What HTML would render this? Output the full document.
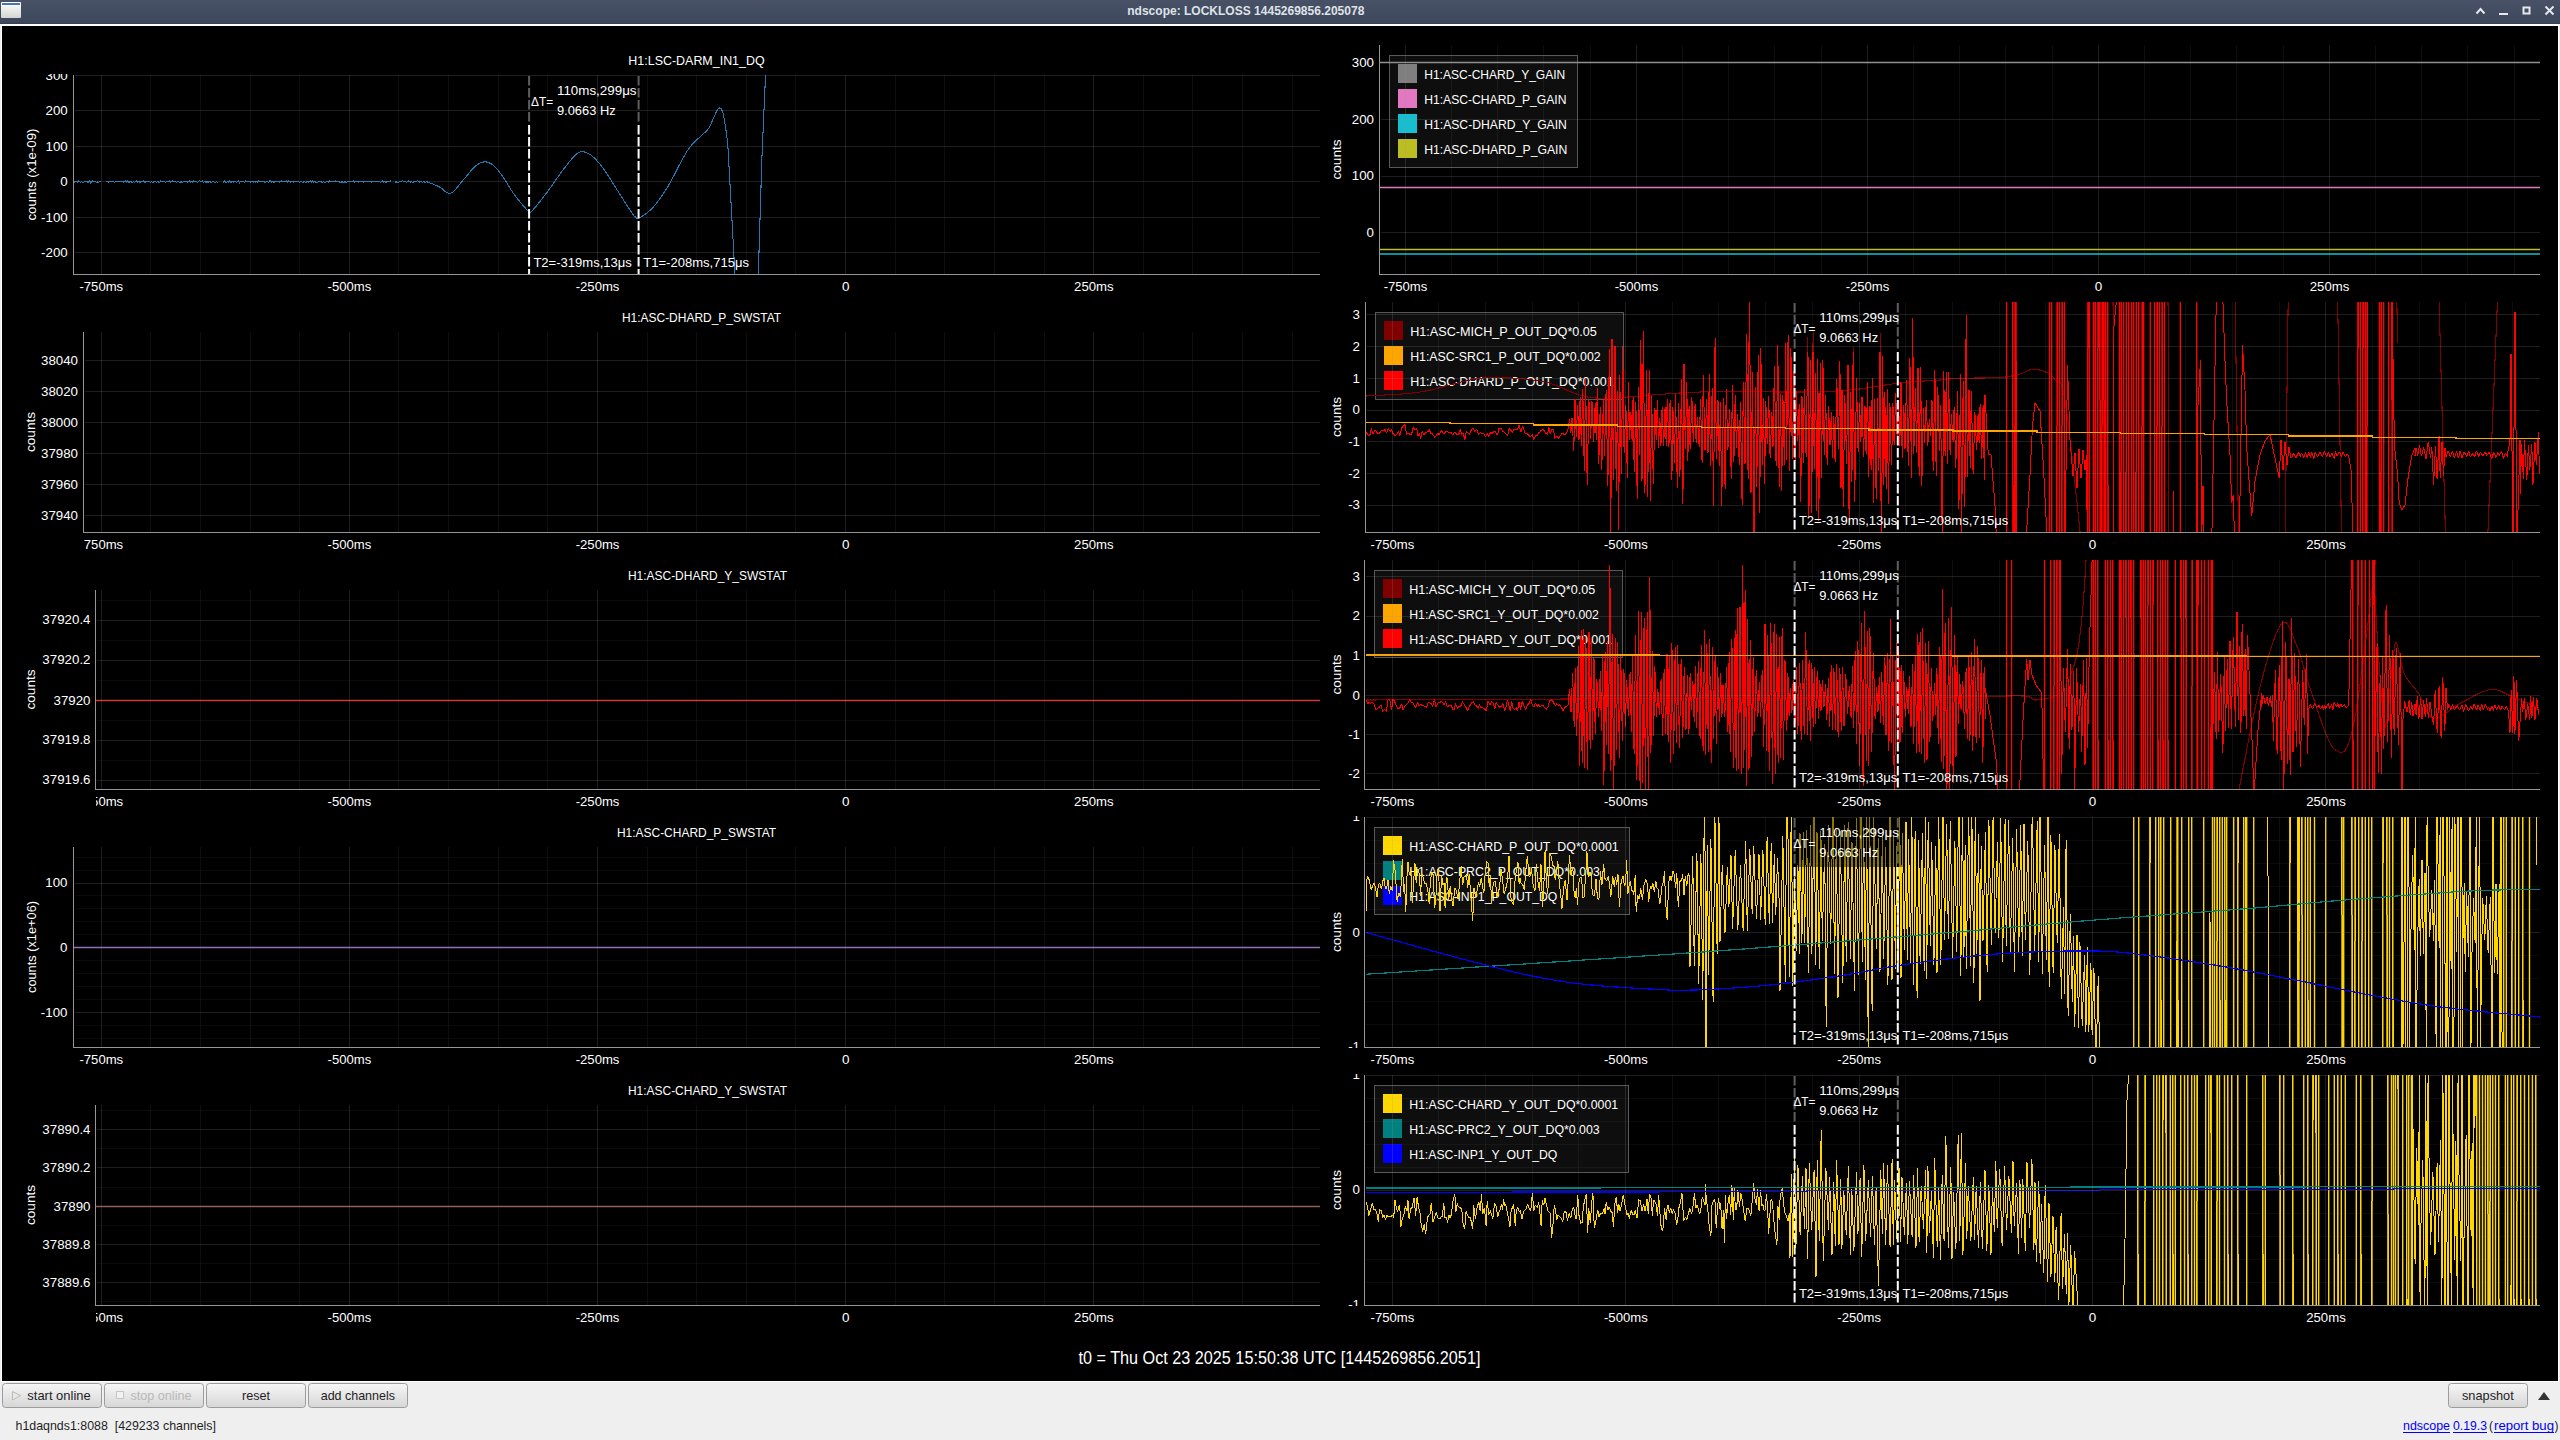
<!DOCTYPE html>
<html><head><meta charset="utf-8"><title>ndscope</title>
<style>html,body{margin:0;padding:0;background:#000;overflow:hidden}svg{display:block}text{font-family:"Liberation Sans",sans-serif}</style>
</head><body>
<svg width="2560" height="1440" viewBox="0 0 2560 1440" font-family="Liberation Sans, sans-serif">
<defs><linearGradient id="tbg" x1="0" y1="0" x2="0" y2="1"><stop offset="0" stop-color="#485165"/><stop offset="1" stop-color="#3d485c"/></linearGradient><linearGradient id="icg" x1="0" y1="0" x2="0" y2="1"><stop offset="0" stop-color="#ffffff"/><stop offset="1" stop-color="#d4d6d0"/></linearGradient><linearGradient id="btg" x1="0" y1="0" x2="0" y2="1"><stop offset="0" stop-color="#f7f7f7"/><stop offset="1" stop-color="#d6d6d6"/></linearGradient></defs>
<rect x="0" y="0" width="2560" height="24" fill="url(#tbg)"/>
<rect x="0" y="23" width="2560" height="1" fill="#384154"/>
<rect x="0" y="24" width="2560" height="2" fill="#ffffff"/>
<rect x="1" y="2" width="20" height="16" rx="1" fill="url(#icg)"/>
<rect x="2" y="3" width="18" height="2" fill="#4a74ad"/>
<text x="1245.80" y="15.20" font-size="13" fill="#dfe2e8" text-anchor="middle" textLength="237.10" lengthAdjust="spacingAndGlyphs" font-weight="bold">ndscope: LOCKLOSS 1445269856.205078</text>
<path d="M2476.5 13.5 L2480.5 9 L2484.5 13.5" fill="none" stroke="#e6e8ee" stroke-width="2"/>
<rect x="2499" y="13" width="9" height="2" fill="#e6e8ee"/>
<rect x="2523.5" y="7.5" width="6" height="6" fill="none" stroke="#e6e8ee" stroke-width="2"/>
<path d="M2545.5 6.5 L2553.5 14.5 M2553.5 6.5 L2545.5 14.5" fill="none" stroke="#e6e8ee" stroke-width="2"/>
<rect x="0" y="26" width="2560" height="1414" fill="#efefef"/>
<rect x="1" y="26" width="2558" height="1356" fill="#ffffff"/>
<rect x="2" y="26" width="2556" height="1355" fill="#000000"/>
<rect x="2.5" y="1383.5" width="99" height="24" rx="3" fill="url(#btg)" stroke="#9c9c9c" stroke-width="1"/>
<text x="27.30" y="1400.00" font-size="13.2" fill="#1e1e1e" textLength="63.40" lengthAdjust="spacingAndGlyphs">start online</text>
<path d="M12.5 1391.5 L20.5 1395.7 L12.5 1400 Z" fill="#e8eae6" stroke="#b9bbb6" stroke-width="1"/>
<rect x="104.5" y="1383.5" width="99" height="24" rx="3" fill="url(#btg)" stroke="#9c9c9c" stroke-width="1"/>
<text x="130.50" y="1400.00" font-size="13.2" fill="#b8b8b8" textLength="61.00" lengthAdjust="spacingAndGlyphs">stop online</text>
<rect x="116.5" y="1391.5" width="7" height="7" fill="#f2f2f2" stroke="#c6c6c6" stroke-width="1"/>
<rect x="206.5" y="1383.5" width="99" height="24" rx="3" fill="url(#btg)" stroke="#9c9c9c" stroke-width="1"/>
<text x="242.00" y="1400.00" font-size="13.2" fill="#1e1e1e" textLength="28.00" lengthAdjust="spacingAndGlyphs">reset</text>
<rect x="308.5" y="1383.5" width="99" height="24" rx="3" fill="url(#btg)" stroke="#9c9c9c" stroke-width="1"/>
<text x="320.70" y="1400.00" font-size="13.2" fill="#1e1e1e" textLength="74.30" lengthAdjust="spacingAndGlyphs">add channels</text>
<rect x="2448.5" y="1383.5" width="79" height="24" rx="3" fill="url(#btg)" stroke="#9c9c9c" stroke-width="1"/>
<text x="2462.00" y="1400.00" font-size="13.2" fill="#1e1e1e" textLength="51.75" lengthAdjust="spacingAndGlyphs">snapshot</text>
<path d="M2538 1400 L2544 1392 L2550 1400 Z" fill="#333333"/>
<text x="15.50" y="1429.70" font-size="13.2" fill="#1e1e1e" textLength="200.50" lengthAdjust="spacingAndGlyphs" xml:space="preserve">h1daqnds1:8088  [429233 channels]</text>
<text x="2403.00" y="1429.70" font-size="13.2" fill="#0000ff" textLength="47.00" lengthAdjust="spacingAndGlyphs">ndscope</text>
<rect x="2403" y="1432" width="47" height="1" fill="#0000ff"/>
<text x="2453.00" y="1429.70" font-size="13.2" fill="#0000ff" textLength="34.00" lengthAdjust="spacingAndGlyphs">0.19.3</text>
<rect x="2453" y="1432" width="34" height="1" fill="#0000ff"/>
<text x="2489.00" y="1429.70" font-size="13.2" fill="#1e1e1e" textLength="4.00" lengthAdjust="spacingAndGlyphs">(</text>
<text x="2494.00" y="1429.70" font-size="13.2" fill="#0000ff" textLength="60.00" lengthAdjust="spacingAndGlyphs">report bug</text>
<rect x="2494" y="1432" width="60" height="1" fill="#0000ff"/>
<text x="2554.50" y="1429.70" font-size="13.2" fill="#1e1e1e" textLength="4.00" lengthAdjust="spacingAndGlyphs">)</text>
<text x="1078.50" y="1363.50" font-size="17.6" fill="#ffffff" textLength="401.90" lengthAdjust="spacingAndGlyphs">t0 = Thu Oct 23 2025 15:50:38 UTC [1445269856.2051]</text>
<clipPath id="cpL1"><rect x="74" y="75" width="1246" height="199"/></clipPath>
<g clip-path="url(#cpL1)">
<path d="M74.0 182.3 L75.9 181.2 L77.4 182.0 L78.9 180.6 L80.1 182.2 L81.7 181.9 L83.6 182.4 L84.7 181.5 L85.6 181.8 L86.4 181.1 L88.2 182.4 L89.6 181.0 L90.8 183.0 L92.5 180.9 L93.6 181.7 L95.3 181.5 L96.6 182.8 L97.5 181.7 L98.8 182.5 L99.7 181.3 L100.9 181.8 M106.0 182.1 L107.1 181.1 L108.8 182.1 L110.2 181.6 L111.2 182.0 L112.5 181.2 L114.4 182.3 L116.2 181.3 L118.0 182.0 L120.0 181.2 L121.7 182.0 L122.6 181.5 L123.7 182.2 L125.1 180.8 L126.6 182.3 L127.6 181.1 L128.7 182.2 L130.6 181.7 L132.4 182.3 L133.4 181.9 L134.5 182.2 L136.2 180.9 L137.3 182.1 L138.4 181.4 L139.9 182.4 L141.0 181.3 L142.3 181.7 L143.6 180.8 L144.8 182.9 L146.4 181.1 L147.4 181.5 L149.2 181.4 L150.1 182.3 L151.8 181.7 L152.7 182.5 L154.5 181.2 L156.3 182.4 L157.9 181.2 L159.2 182.7 L160.7 181.0 L162.2 182.0 L163.7 181.1 L165.4 182.3 L166.9 181.5 L167.8 182.0 L169.3 181.0 L170.9 182.3 L172.8 180.9 L174.0 182.1 L175.0 181.0 L176.3 182.4 L177.9 181.3 L179.7 182.8 L180.9 181.0 L181.9 182.5 L183.7 181.4 L184.9 182.0 L186.0 181.3 L187.6 182.1 L189.3 180.8 L190.3 182.2 L191.1 181.1 L192.3 182.1 L193.3 180.8 L195.1 181.8 L196.0 181.0 L197.5 182.6 L199.4 180.8 L200.8 181.6 L202.2 180.7 L203.3 182.3 L204.8 181.3 L206.0 182.8 L207.0 181.0 L208.0 182.3 L209.8 181.3 L211.6 182.8 L213.0 180.8 L214.7 182.6 L216.3 181.7 L218.2 182.6 M223.0 182.4 L224.8 180.9 L226.1 182.5 L227.5 181.7 L228.4 182.2 L229.6 180.7 L230.7 182.4 L232.4 181.4 L233.8 182.2 L234.9 181.0 L236.6 182.4 L238.4 181.0 L239.6 182.8 L240.7 181.3 L242.1 182.1 L243.6 181.2 L244.4 182.6 L245.7 181.0 L247.1 182.0 L248.6 181.6 L250.4 182.1 L251.4 181.5 L253.3 182.1 L254.3 181.4 L255.3 182.1 L256.4 181.5 L257.6 182.2 L258.5 180.7 L259.9 181.8 L261.4 181.1 L262.7 182.0 L263.7 181.2 L265.2 182.6 L267.0 181.5 L268.7 182.4 L269.9 180.6 L271.9 182.2 L273.0 180.8 L273.9 182.4 L275.6 181.4 L277.3 181.7 L278.9 181.2 L279.8 182.5 L281.2 180.8 L282.1 181.6 L283.6 181.2 L284.6 181.8 L286.4 181.1 L287.3 182.3 L288.7 180.8 L290.1 182.2 L291.6 181.7 L293.4 182.0 L295.0 181.0 L296.0 181.9 L297.9 181.1 L299.7 182.3 L301.2 181.5 L302.9 182.4 L304.6 181.2 L305.9 182.8 L307.5 181.2 L308.8 182.1 L310.1 180.8 L311.3 182.4 L312.4 181.0 L313.6 182.4 L315.0 181.6 L316.6 182.6 L318.5 181.6 L320.2 182.0 L321.1 181.3 L322.1 182.4 L323.5 181.5 L325.0 182.7 L326.7 181.5 L328.4 182.3 L329.4 180.9 L330.8 182.0 L332.7 181.2 L334.2 182.0 L335.8 180.9 L337.5 181.7 L338.6 181.2 L340.3 182.5 L341.9 181.9 L343.8 182.3 L345.2 181.6 L346.3 182.6 L347.9 181.6 L349.7 182.0 L351.2 181.0 L352.1 182.0 L353.5 181.0 L354.6 182.2 L356.3 181.5 L358.2 182.2 L359.2 181.1 L360.7 182.0 L362.3 181.2 L363.9 182.2 L365.0 181.1 L366.8 181.6 L368.0 181.3 L368.9 181.9 L369.8 181.1 L371.4 182.1 L372.5 181.5 L374.2 181.6 L376.0 181.3 L377.1 182.0 L378.8 181.4 L380.8 182.2 L382.4 180.8 L383.7 182.2 L384.6 181.5 L386.0 182.2 L387.7 181.2 L389.3 181.8 L390.9 180.8 M395.0 182.3 L396.3 181.6 L397.7 182.9 L399.6 181.4 L400.8 182.0 L402.7 180.7 L403.9 182.0 L405.2 181.0 L406.7 182.5 L408.4 180.9 L410.1 182.3 L411.0 181.2 L412.5 182.7 L414.2 181.5 L415.9 181.6 L417.6 180.5 L419.1 182.2 L420.7 181.1 L422.4 182.5 L423.7 181.7 L425.3 182.3 L426.9 181.3 L427.0 181.8 L427.9 182.2 L429.2 182.6 L430.6 183.2 L432.3 183.8 L434.0 184.5 L435.7 185.2 L437.4 185.9 L439.0 186.6 L440.7 187.6 L442.3 188.9 L443.9 190.4 L445.5 191.7 L447.2 192.7 L448.9 193.3 L450.6 193.2 L452.2 192.4 L453.8 191.2 L455.5 189.5 L457.1 187.5 L458.8 185.4 L460.5 183.3 L462.1 181.2 L463.7 179.4 L465.5 177.4 L467.2 175.3 L468.9 173.2 L470.6 171.2 L472.3 169.3 L473.9 167.6 L475.4 166.2 L477.1 164.9 L478.7 163.8 L480.3 163.0 L481.8 162.4 L483.3 162.0 L484.9 161.9 L486.5 162.0 L488.0 162.4 L489.6 163.0 L491.2 163.8 L492.8 164.9 L494.4 166.2 L496.1 167.9 L497.7 169.8 L499.5 172.1 L501.2 174.5 L502.9 176.9 L504.6 179.4 L506.3 181.9 L507.9 184.6 L509.5 187.3 L511.2 190.0 L512.9 192.7 L514.8 195.4 L516.4 197.4 L518.1 199.6 L519.9 201.8 L521.8 204.0 L523.6 206.1 L525.2 207.9 L526.7 209.5 L527.9 210.7 L529.6 213.2 L531.5 211.4 L532.6 210.3 L533.8 208.9 L535.3 207.2 L536.9 205.3 L538.5 203.3 L540.2 201.1 L542.0 198.9 L543.7 196.7 L545.3 194.5 L546.9 192.5 L548.6 190.3 L550.2 188.0 L551.9 185.6 L553.6 183.2 L555.2 180.9 L556.8 178.5 L558.4 176.3 L559.9 174.1 L561.4 172.1 L563.3 169.6 L565.1 167.2 L566.8 165.0 L568.5 162.8 L570.1 160.9 L571.6 159.1 L573.1 157.5 L574.9 155.6 L576.4 154.1 L577.9 152.9 L579.4 152.1 L581.1 151.7 L582.5 151.7 L584.0 151.9 L585.6 152.4 L587.2 153.0 L588.8 153.8 L590.5 154.8 L592.1 156.0 L593.7 157.4 L595.3 158.9 L596.9 160.7 L598.6 162.6 L600.3 164.6 L602.0 166.9 L603.7 169.2 L605.3 171.4 L606.9 173.8 L608.5 176.3 L610.2 178.9 L611.9 181.6 L613.6 184.3 L615.2 187.0 L616.9 189.6 L618.6 192.2 L620.4 195.0 L622.1 197.8 L623.9 200.6 L625.6 203.3 L627.2 205.8 L628.7 208.1 L630.0 210.0 L632.5 213.7 L634.2 216.0 L635.8 217.5 L637.5 218.6 L640.2 217.5 L641.4 216.8 L642.8 215.8 L644.4 214.8 L646.1 213.5 L647.9 212.1 L649.7 210.6 L651.5 208.9 L653.3 207.0 L654.9 205.2 L656.5 203.2 L658.2 201.0 L659.9 198.7 L661.5 196.3 L663.2 193.9 L664.8 191.4 L666.4 189.0 L667.9 186.6 L669.7 183.5 L671.5 180.3 L673.1 177.1 L674.8 173.9 L676.4 170.8 L677.9 167.7 L679.5 164.8 L681.3 161.6 L682.9 158.5 L684.6 155.5 L686.2 152.6 L687.9 149.9 L689.8 147.3 L691.4 145.4 L693.0 143.5 L694.8 141.7 L696.6 140.0 L698.4 138.4 L700.1 136.9 L701.6 135.5 L702.9 134.2 L705.4 131.9 L707.1 130.4 L708.7 128.3 L710.5 124.9 L712.3 120.8 L714.0 117.0 L715.7 113.3 L717.3 109.7 L718.9 107.9 L721.1 108.4 L723.3 113.7 L725.8 128.7 L727.7 142.9 L735.0 275.0 L745.0 300.0 L758.3 290.0 L758.3 275.0 L761.9 157.5 L765.6 74.0 L767.0 40.0" fill="none" stroke="#1f77b4" stroke-width="1.05" stroke-linejoin="miter" stroke-miterlimit="2" shape-rendering="crispEdges"/>
</g>
<rect x="528.1" y="75" width="115.5" height="50" fill="rgba(0,0,0,0.45)"/>
<line x1="101.5" y1="75" x2="101.5" y2="274" stroke="rgba(150,150,150,0.2)" stroke-width="1"/>
<line x1="150.5" y1="75" x2="150.5" y2="274" stroke="rgba(150,150,150,0.095)" stroke-width="1"/>
<line x1="200.5" y1="75" x2="200.5" y2="274" stroke="rgba(150,150,150,0.095)" stroke-width="1"/>
<line x1="250.5" y1="75" x2="250.5" y2="274" stroke="rgba(150,150,150,0.095)" stroke-width="1"/>
<line x1="299.5" y1="75" x2="299.5" y2="274" stroke="rgba(150,150,150,0.095)" stroke-width="1"/>
<line x1="349.5" y1="75" x2="349.5" y2="274" stroke="rgba(150,150,150,0.2)" stroke-width="1"/>
<line x1="398.5" y1="75" x2="398.5" y2="274" stroke="rgba(150,150,150,0.095)" stroke-width="1"/>
<line x1="448.5" y1="75" x2="448.5" y2="274" stroke="rgba(150,150,150,0.095)" stroke-width="1"/>
<line x1="498.5" y1="75" x2="498.5" y2="274" stroke="rgba(150,150,150,0.095)" stroke-width="1"/>
<line x1="547.5" y1="75" x2="547.5" y2="274" stroke="rgba(150,150,150,0.095)" stroke-width="1"/>
<line x1="597.5" y1="75" x2="597.5" y2="274" stroke="rgba(150,150,150,0.2)" stroke-width="1"/>
<line x1="647.5" y1="75" x2="647.5" y2="274" stroke="rgba(150,150,150,0.095)" stroke-width="1"/>
<line x1="696.5" y1="75" x2="696.5" y2="274" stroke="rgba(150,150,150,0.095)" stroke-width="1"/>
<line x1="746.5" y1="75" x2="746.5" y2="274" stroke="rgba(150,150,150,0.095)" stroke-width="1"/>
<line x1="795.5" y1="75" x2="795.5" y2="274" stroke="rgba(150,150,150,0.095)" stroke-width="1"/>
<line x1="845.5" y1="75" x2="845.5" y2="274" stroke="rgba(150,150,150,0.2)" stroke-width="1"/>
<line x1="895.5" y1="75" x2="895.5" y2="274" stroke="rgba(150,150,150,0.095)" stroke-width="1"/>
<line x1="944.5" y1="75" x2="944.5" y2="274" stroke="rgba(150,150,150,0.095)" stroke-width="1"/>
<line x1="994.5" y1="75" x2="994.5" y2="274" stroke="rgba(150,150,150,0.095)" stroke-width="1"/>
<line x1="1044.5" y1="75" x2="1044.5" y2="274" stroke="rgba(150,150,150,0.095)" stroke-width="1"/>
<line x1="1093.5" y1="75" x2="1093.5" y2="274" stroke="rgba(150,150,150,0.2)" stroke-width="1"/>
<line x1="1143.5" y1="75" x2="1143.5" y2="274" stroke="rgba(150,150,150,0.095)" stroke-width="1"/>
<line x1="1192.5" y1="75" x2="1192.5" y2="274" stroke="rgba(150,150,150,0.095)" stroke-width="1"/>
<line x1="1242.5" y1="75" x2="1242.5" y2="274" stroke="rgba(150,150,150,0.095)" stroke-width="1"/>
<line x1="1292.5" y1="75" x2="1292.5" y2="274" stroke="rgba(150,150,150,0.095)" stroke-width="1"/>
<line x1="75" y1="75.5" x2="1320" y2="75.5" stroke="rgba(150,150,150,0.2)" stroke-width="1"/>
<line x1="75" y1="110.5" x2="1320" y2="110.5" stroke="rgba(150,150,150,0.2)" stroke-width="1"/>
<line x1="75" y1="146.5" x2="1320" y2="146.5" stroke="rgba(150,150,150,0.2)" stroke-width="1"/>
<line x1="75" y1="181.5" x2="1320" y2="181.5" stroke="rgba(150,150,150,0.2)" stroke-width="1"/>
<line x1="75" y1="217.5" x2="1320" y2="217.5" stroke="rgba(150,150,150,0.2)" stroke-width="1"/>
<line x1="75" y1="252.5" x2="1320" y2="252.5" stroke="rgba(150,150,150,0.2)" stroke-width="1"/>
<line x1="73.5" y1="75" x2="73.5" y2="275" stroke="#969696" stroke-width="1"/>
<line x1="73" y1="274.5" x2="1320" y2="274.5" stroke="#969696" stroke-width="1"/>
<clipPath id="clxL1"><rect x="74" y="274" width="1287" height="30"/></clipPath>
<g clip-path="url(#clxL1)">
<text x="101.33" y="291.00" font-size="12.8" fill="#ffffff" text-anchor="middle" textLength="43.70" lengthAdjust="spacingAndGlyphs">-750ms</text>
<text x="349.45" y="291.00" font-size="12.8" fill="#ffffff" text-anchor="middle" textLength="43.70" lengthAdjust="spacingAndGlyphs">-500ms</text>
<text x="597.58" y="291.00" font-size="12.8" fill="#ffffff" text-anchor="middle" textLength="43.70" lengthAdjust="spacingAndGlyphs">-250ms</text>
<text x="845.70" y="291.00" font-size="12.8" fill="#ffffff" text-anchor="middle" textLength="7.50" lengthAdjust="spacingAndGlyphs">0</text>
<text x="1093.83" y="291.00" font-size="12.8" fill="#ffffff" text-anchor="middle" textLength="39.50" lengthAdjust="spacingAndGlyphs">250ms</text>
</g>
<clipPath id="clyL1"><rect x="-7" y="74" width="80" height="201"/></clipPath>
<g clip-path="url(#clyL1)">
<text x="67.70" y="79.60" font-size="12.8" fill="#ffffff" text-anchor="end" textLength="22.21" lengthAdjust="spacingAndGlyphs">300</text>
<text x="67.70" y="114.90" font-size="12.8" fill="#ffffff" text-anchor="end" textLength="22.21" lengthAdjust="spacingAndGlyphs">200</text>
<text x="67.70" y="150.90" font-size="12.8" fill="#ffffff" text-anchor="end" textLength="22.21" lengthAdjust="spacingAndGlyphs">100</text>
<text x="67.70" y="186.10" font-size="12.8" fill="#ffffff" text-anchor="end" textLength="7.40" lengthAdjust="spacingAndGlyphs">0</text>
<text x="67.70" y="221.70" font-size="12.8" fill="#ffffff" text-anchor="end" textLength="26.64" lengthAdjust="spacingAndGlyphs">-100</text>
<text x="67.70" y="256.90" font-size="12.8" fill="#ffffff" text-anchor="end" textLength="26.64" lengthAdjust="spacingAndGlyphs">-200</text>
</g>
<text x="0" y="0" font-size="12.8" fill="#ffffff" text-anchor="middle" textLength="92" lengthAdjust="spacingAndGlyphs" transform="translate(35.5,174.5) rotate(-90)">counts (x1e-09)</text>
<text x="696.50" y="65.00" font-size="12.8" fill="#ffffff" text-anchor="middle" textLength="136.30" lengthAdjust="spacingAndGlyphs">H1:LSC-DARM_IN1_DQ</text>
<line x1="529.1" y1="76" x2="529.1" y2="124" stroke="#5e5e5e" stroke-width="2" stroke-dasharray="9.5 2.5"/>
<line x1="529.1" y1="125" x2="529.1" y2="274" stroke="#ffffff" stroke-width="2" stroke-dasharray="9.5 2.5"/>
<line x1="638.6" y1="76" x2="638.6" y2="124" stroke="#5e5e5e" stroke-width="2" stroke-dasharray="9.5 2.5"/>
<line x1="638.6" y1="125" x2="638.6" y2="274" stroke="#ffffff" stroke-width="2" stroke-dasharray="9.5 2.5"/>
<text x="531.05" y="105.50" font-size="12.8" fill="#ffffff" textLength="22.00" lengthAdjust="spacingAndGlyphs">ΔT=</text>
<text x="556.95" y="94.80" font-size="12.8" fill="#ffffff" textLength="79.60" lengthAdjust="spacingAndGlyphs">110ms,299μs</text>
<text x="556.95" y="115.00" font-size="12.8" fill="#ffffff" textLength="58.80" lengthAdjust="spacingAndGlyphs">9.0663 Hz</text>
<text x="533.40" y="267.00" font-size="12.8" fill="#ffffff" textLength="98.40" lengthAdjust="spacingAndGlyphs">T2=-319ms,13μs</text>
<text x="643.20" y="267.00" font-size="12.8" fill="#ffffff" textLength="105.80" lengthAdjust="spacingAndGlyphs">T1=-208ms,715μs</text>
<line x1="101.5" y1="332" x2="101.5" y2="532" stroke="rgba(150,150,150,0.2)" stroke-width="1"/>
<line x1="150.5" y1="332" x2="150.5" y2="532" stroke="rgba(150,150,150,0.095)" stroke-width="1"/>
<line x1="200.5" y1="332" x2="200.5" y2="532" stroke="rgba(150,150,150,0.095)" stroke-width="1"/>
<line x1="250.5" y1="332" x2="250.5" y2="532" stroke="rgba(150,150,150,0.095)" stroke-width="1"/>
<line x1="299.5" y1="332" x2="299.5" y2="532" stroke="rgba(150,150,150,0.095)" stroke-width="1"/>
<line x1="349.5" y1="332" x2="349.5" y2="532" stroke="rgba(150,150,150,0.2)" stroke-width="1"/>
<line x1="398.5" y1="332" x2="398.5" y2="532" stroke="rgba(150,150,150,0.095)" stroke-width="1"/>
<line x1="448.5" y1="332" x2="448.5" y2="532" stroke="rgba(150,150,150,0.095)" stroke-width="1"/>
<line x1="498.5" y1="332" x2="498.5" y2="532" stroke="rgba(150,150,150,0.095)" stroke-width="1"/>
<line x1="547.5" y1="332" x2="547.5" y2="532" stroke="rgba(150,150,150,0.095)" stroke-width="1"/>
<line x1="597.5" y1="332" x2="597.5" y2="532" stroke="rgba(150,150,150,0.2)" stroke-width="1"/>
<line x1="647.5" y1="332" x2="647.5" y2="532" stroke="rgba(150,150,150,0.095)" stroke-width="1"/>
<line x1="696.5" y1="332" x2="696.5" y2="532" stroke="rgba(150,150,150,0.095)" stroke-width="1"/>
<line x1="746.5" y1="332" x2="746.5" y2="532" stroke="rgba(150,150,150,0.095)" stroke-width="1"/>
<line x1="795.5" y1="332" x2="795.5" y2="532" stroke="rgba(150,150,150,0.095)" stroke-width="1"/>
<line x1="845.5" y1="332" x2="845.5" y2="532" stroke="rgba(150,150,150,0.2)" stroke-width="1"/>
<line x1="895.5" y1="332" x2="895.5" y2="532" stroke="rgba(150,150,150,0.095)" stroke-width="1"/>
<line x1="944.5" y1="332" x2="944.5" y2="532" stroke="rgba(150,150,150,0.095)" stroke-width="1"/>
<line x1="994.5" y1="332" x2="994.5" y2="532" stroke="rgba(150,150,150,0.095)" stroke-width="1"/>
<line x1="1044.5" y1="332" x2="1044.5" y2="532" stroke="rgba(150,150,150,0.095)" stroke-width="1"/>
<line x1="1093.5" y1="332" x2="1093.5" y2="532" stroke="rgba(150,150,150,0.2)" stroke-width="1"/>
<line x1="1143.5" y1="332" x2="1143.5" y2="532" stroke="rgba(150,150,150,0.095)" stroke-width="1"/>
<line x1="1192.5" y1="332" x2="1192.5" y2="532" stroke="rgba(150,150,150,0.095)" stroke-width="1"/>
<line x1="1242.5" y1="332" x2="1242.5" y2="532" stroke="rgba(150,150,150,0.095)" stroke-width="1"/>
<line x1="1292.5" y1="332" x2="1292.5" y2="532" stroke="rgba(150,150,150,0.095)" stroke-width="1"/>
<line x1="85" y1="360.5" x2="1320" y2="360.5" stroke="rgba(150,150,150,0.2)" stroke-width="1"/>
<line x1="85" y1="391.5" x2="1320" y2="391.5" stroke="rgba(150,150,150,0.2)" stroke-width="1"/>
<line x1="85" y1="422.5" x2="1320" y2="422.5" stroke="rgba(150,150,150,0.2)" stroke-width="1"/>
<line x1="85" y1="453.5" x2="1320" y2="453.5" stroke="rgba(150,150,150,0.2)" stroke-width="1"/>
<line x1="85" y1="484.5" x2="1320" y2="484.5" stroke="rgba(150,150,150,0.2)" stroke-width="1"/>
<line x1="85" y1="515.5" x2="1320" y2="515.5" stroke="rgba(150,150,150,0.2)" stroke-width="1"/>
<line x1="83.5" y1="332" x2="83.5" y2="533" stroke="#969696" stroke-width="1"/>
<line x1="83" y1="532.5" x2="1320" y2="532.5" stroke="#969696" stroke-width="1"/>
<clipPath id="clxL2"><rect x="84" y="532" width="1277" height="30"/></clipPath>
<g clip-path="url(#clxL2)">
<text x="101.33" y="549.00" font-size="12.8" fill="#ffffff" text-anchor="middle" textLength="43.70" lengthAdjust="spacingAndGlyphs">-750ms</text>
<text x="349.45" y="549.00" font-size="12.8" fill="#ffffff" text-anchor="middle" textLength="43.70" lengthAdjust="spacingAndGlyphs">-500ms</text>
<text x="597.58" y="549.00" font-size="12.8" fill="#ffffff" text-anchor="middle" textLength="43.70" lengthAdjust="spacingAndGlyphs">-250ms</text>
<text x="845.70" y="549.00" font-size="12.8" fill="#ffffff" text-anchor="middle" textLength="7.50" lengthAdjust="spacingAndGlyphs">0</text>
<text x="1093.83" y="549.00" font-size="12.8" fill="#ffffff" text-anchor="middle" textLength="39.50" lengthAdjust="spacingAndGlyphs">250ms</text>
</g>
<clipPath id="clyL2"><rect x="3" y="331" width="80" height="202"/></clipPath>
<g clip-path="url(#clyL2)">
<text x="78.00" y="364.90" font-size="12.8" fill="#ffffff" text-anchor="end" textLength="37.01" lengthAdjust="spacingAndGlyphs">38040</text>
<text x="78.00" y="395.90" font-size="12.8" fill="#ffffff" text-anchor="end" textLength="37.01" lengthAdjust="spacingAndGlyphs">38020</text>
<text x="78.00" y="426.90" font-size="12.8" fill="#ffffff" text-anchor="end" textLength="37.01" lengthAdjust="spacingAndGlyphs">38000</text>
<text x="78.00" y="457.90" font-size="12.8" fill="#ffffff" text-anchor="end" textLength="37.01" lengthAdjust="spacingAndGlyphs">37980</text>
<text x="78.00" y="488.90" font-size="12.8" fill="#ffffff" text-anchor="end" textLength="37.01" lengthAdjust="spacingAndGlyphs">37960</text>
<text x="78.00" y="519.90" font-size="12.8" fill="#ffffff" text-anchor="end" textLength="37.01" lengthAdjust="spacingAndGlyphs">37940</text>
</g>
<text x="0" y="0" font-size="12.8" fill="#ffffff" text-anchor="middle" textLength="40" lengthAdjust="spacingAndGlyphs" transform="translate(35.0,432.0) rotate(-90)">counts</text>
<text x="701.50" y="322.00" font-size="12.8" fill="#ffffff" text-anchor="middle" textLength="159.20" lengthAdjust="spacingAndGlyphs">H1:ASC-DHARD_P_SWSTAT</text>
<clipPath id="cpL3"><rect x="96" y="590" width="1224" height="199"/></clipPath>
<g clip-path="url(#cpL3)">
<line x1="96" y1="700.5" x2="1320" y2="700.5" stroke="#d62728" stroke-width="1.3"/>
</g>
<line x1="101.5" y1="590" x2="101.5" y2="789" stroke="rgba(150,150,150,0.2)" stroke-width="1"/>
<line x1="150.5" y1="590" x2="150.5" y2="789" stroke="rgba(150,150,150,0.095)" stroke-width="1"/>
<line x1="200.5" y1="590" x2="200.5" y2="789" stroke="rgba(150,150,150,0.095)" stroke-width="1"/>
<line x1="250.5" y1="590" x2="250.5" y2="789" stroke="rgba(150,150,150,0.095)" stroke-width="1"/>
<line x1="299.5" y1="590" x2="299.5" y2="789" stroke="rgba(150,150,150,0.095)" stroke-width="1"/>
<line x1="349.5" y1="590" x2="349.5" y2="789" stroke="rgba(150,150,150,0.2)" stroke-width="1"/>
<line x1="398.5" y1="590" x2="398.5" y2="789" stroke="rgba(150,150,150,0.095)" stroke-width="1"/>
<line x1="448.5" y1="590" x2="448.5" y2="789" stroke="rgba(150,150,150,0.095)" stroke-width="1"/>
<line x1="498.5" y1="590" x2="498.5" y2="789" stroke="rgba(150,150,150,0.095)" stroke-width="1"/>
<line x1="547.5" y1="590" x2="547.5" y2="789" stroke="rgba(150,150,150,0.095)" stroke-width="1"/>
<line x1="597.5" y1="590" x2="597.5" y2="789" stroke="rgba(150,150,150,0.2)" stroke-width="1"/>
<line x1="647.5" y1="590" x2="647.5" y2="789" stroke="rgba(150,150,150,0.095)" stroke-width="1"/>
<line x1="696.5" y1="590" x2="696.5" y2="789" stroke="rgba(150,150,150,0.095)" stroke-width="1"/>
<line x1="746.5" y1="590" x2="746.5" y2="789" stroke="rgba(150,150,150,0.095)" stroke-width="1"/>
<line x1="795.5" y1="590" x2="795.5" y2="789" stroke="rgba(150,150,150,0.095)" stroke-width="1"/>
<line x1="845.5" y1="590" x2="845.5" y2="789" stroke="rgba(150,150,150,0.2)" stroke-width="1"/>
<line x1="895.5" y1="590" x2="895.5" y2="789" stroke="rgba(150,150,150,0.095)" stroke-width="1"/>
<line x1="944.5" y1="590" x2="944.5" y2="789" stroke="rgba(150,150,150,0.095)" stroke-width="1"/>
<line x1="994.5" y1="590" x2="994.5" y2="789" stroke="rgba(150,150,150,0.095)" stroke-width="1"/>
<line x1="1044.5" y1="590" x2="1044.5" y2="789" stroke="rgba(150,150,150,0.095)" stroke-width="1"/>
<line x1="1093.5" y1="590" x2="1093.5" y2="789" stroke="rgba(150,150,150,0.2)" stroke-width="1"/>
<line x1="1143.5" y1="590" x2="1143.5" y2="789" stroke="rgba(150,150,150,0.095)" stroke-width="1"/>
<line x1="1192.5" y1="590" x2="1192.5" y2="789" stroke="rgba(150,150,150,0.095)" stroke-width="1"/>
<line x1="1242.5" y1="590" x2="1242.5" y2="789" stroke="rgba(150,150,150,0.095)" stroke-width="1"/>
<line x1="1292.5" y1="590" x2="1292.5" y2="789" stroke="rgba(150,150,150,0.095)" stroke-width="1"/>
<line x1="97" y1="620.5" x2="1320" y2="620.5" stroke="rgba(150,150,150,0.2)" stroke-width="1"/>
<line x1="97" y1="660.5" x2="1320" y2="660.5" stroke="rgba(150,150,150,0.2)" stroke-width="1"/>
<line x1="97" y1="700.5" x2="1320" y2="700.5" stroke="rgba(150,150,150,0.2)" stroke-width="1"/>
<line x1="97" y1="740.5" x2="1320" y2="740.5" stroke="rgba(150,150,150,0.2)" stroke-width="1"/>
<line x1="97" y1="780.5" x2="1320" y2="780.5" stroke="rgba(150,150,150,0.2)" stroke-width="1"/>
<line x1="97" y1="600.5" x2="1320" y2="600.5" stroke="rgba(150,150,150,0.075)" stroke-width="1"/>
<line x1="97" y1="640.5" x2="1320" y2="640.5" stroke="rgba(150,150,150,0.075)" stroke-width="1"/>
<line x1="97" y1="680.5" x2="1320" y2="680.5" stroke="rgba(150,150,150,0.075)" stroke-width="1"/>
<line x1="97" y1="720.5" x2="1320" y2="720.5" stroke="rgba(150,150,150,0.075)" stroke-width="1"/>
<line x1="97" y1="760.5" x2="1320" y2="760.5" stroke="rgba(150,150,150,0.075)" stroke-width="1"/>
<line x1="95.5" y1="590" x2="95.5" y2="790" stroke="#969696" stroke-width="1"/>
<line x1="95" y1="789.5" x2="1320" y2="789.5" stroke="#969696" stroke-width="1"/>
<clipPath id="clxL3"><rect x="96" y="789" width="1265" height="30"/></clipPath>
<g clip-path="url(#clxL3)">
<text x="101.33" y="806.00" font-size="12.8" fill="#ffffff" text-anchor="middle" textLength="43.70" lengthAdjust="spacingAndGlyphs">-750ms</text>
<text x="349.45" y="806.00" font-size="12.8" fill="#ffffff" text-anchor="middle" textLength="43.70" lengthAdjust="spacingAndGlyphs">-500ms</text>
<text x="597.58" y="806.00" font-size="12.8" fill="#ffffff" text-anchor="middle" textLength="43.70" lengthAdjust="spacingAndGlyphs">-250ms</text>
<text x="845.70" y="806.00" font-size="12.8" fill="#ffffff" text-anchor="middle" textLength="7.50" lengthAdjust="spacingAndGlyphs">0</text>
<text x="1093.83" y="806.00" font-size="12.8" fill="#ffffff" text-anchor="middle" textLength="39.50" lengthAdjust="spacingAndGlyphs">250ms</text>
</g>
<clipPath id="clyL3"><rect x="15" y="589" width="80" height="201"/></clipPath>
<g clip-path="url(#clyL3)">
<text x="90.50" y="624.40" font-size="12.8" fill="#ffffff" text-anchor="end" textLength="48.11" lengthAdjust="spacingAndGlyphs">37920.4</text>
<text x="90.50" y="664.40" font-size="12.8" fill="#ffffff" text-anchor="end" textLength="48.11" lengthAdjust="spacingAndGlyphs">37920.2</text>
<text x="90.50" y="704.90" font-size="12.8" fill="#ffffff" text-anchor="end" textLength="37.01" lengthAdjust="spacingAndGlyphs">37920</text>
<text x="90.50" y="744.40" font-size="12.8" fill="#ffffff" text-anchor="end" textLength="48.11" lengthAdjust="spacingAndGlyphs">37919.8</text>
<text x="90.50" y="784.40" font-size="12.8" fill="#ffffff" text-anchor="end" textLength="48.11" lengthAdjust="spacingAndGlyphs">37919.6</text>
</g>
<text x="0" y="0" font-size="12.8" fill="#ffffff" text-anchor="middle" textLength="40" lengthAdjust="spacingAndGlyphs" transform="translate(35.0,689.5) rotate(-90)">counts</text>
<text x="707.50" y="580.00" font-size="12.8" fill="#ffffff" text-anchor="middle" textLength="159.20" lengthAdjust="spacingAndGlyphs">H1:ASC-DHARD_Y_SWSTAT</text>
<clipPath id="cpL4"><rect x="74" y="847" width="1246" height="200"/></clipPath>
<g clip-path="url(#cpL4)">
<line x1="74" y1="947.5" x2="1320" y2="947.5" stroke="#9467bd" stroke-width="1.3"/>
</g>
<line x1="101.5" y1="847" x2="101.5" y2="1047" stroke="rgba(150,150,150,0.2)" stroke-width="1"/>
<line x1="150.5" y1="847" x2="150.5" y2="1047" stroke="rgba(150,150,150,0.095)" stroke-width="1"/>
<line x1="200.5" y1="847" x2="200.5" y2="1047" stroke="rgba(150,150,150,0.095)" stroke-width="1"/>
<line x1="250.5" y1="847" x2="250.5" y2="1047" stroke="rgba(150,150,150,0.095)" stroke-width="1"/>
<line x1="299.5" y1="847" x2="299.5" y2="1047" stroke="rgba(150,150,150,0.095)" stroke-width="1"/>
<line x1="349.5" y1="847" x2="349.5" y2="1047" stroke="rgba(150,150,150,0.2)" stroke-width="1"/>
<line x1="398.5" y1="847" x2="398.5" y2="1047" stroke="rgba(150,150,150,0.095)" stroke-width="1"/>
<line x1="448.5" y1="847" x2="448.5" y2="1047" stroke="rgba(150,150,150,0.095)" stroke-width="1"/>
<line x1="498.5" y1="847" x2="498.5" y2="1047" stroke="rgba(150,150,150,0.095)" stroke-width="1"/>
<line x1="547.5" y1="847" x2="547.5" y2="1047" stroke="rgba(150,150,150,0.095)" stroke-width="1"/>
<line x1="597.5" y1="847" x2="597.5" y2="1047" stroke="rgba(150,150,150,0.2)" stroke-width="1"/>
<line x1="647.5" y1="847" x2="647.5" y2="1047" stroke="rgba(150,150,150,0.095)" stroke-width="1"/>
<line x1="696.5" y1="847" x2="696.5" y2="1047" stroke="rgba(150,150,150,0.095)" stroke-width="1"/>
<line x1="746.5" y1="847" x2="746.5" y2="1047" stroke="rgba(150,150,150,0.095)" stroke-width="1"/>
<line x1="795.5" y1="847" x2="795.5" y2="1047" stroke="rgba(150,150,150,0.095)" stroke-width="1"/>
<line x1="845.5" y1="847" x2="845.5" y2="1047" stroke="rgba(150,150,150,0.2)" stroke-width="1"/>
<line x1="895.5" y1="847" x2="895.5" y2="1047" stroke="rgba(150,150,150,0.095)" stroke-width="1"/>
<line x1="944.5" y1="847" x2="944.5" y2="1047" stroke="rgba(150,150,150,0.095)" stroke-width="1"/>
<line x1="994.5" y1="847" x2="994.5" y2="1047" stroke="rgba(150,150,150,0.095)" stroke-width="1"/>
<line x1="1044.5" y1="847" x2="1044.5" y2="1047" stroke="rgba(150,150,150,0.095)" stroke-width="1"/>
<line x1="1093.5" y1="847" x2="1093.5" y2="1047" stroke="rgba(150,150,150,0.2)" stroke-width="1"/>
<line x1="1143.5" y1="847" x2="1143.5" y2="1047" stroke="rgba(150,150,150,0.095)" stroke-width="1"/>
<line x1="1192.5" y1="847" x2="1192.5" y2="1047" stroke="rgba(150,150,150,0.095)" stroke-width="1"/>
<line x1="1242.5" y1="847" x2="1242.5" y2="1047" stroke="rgba(150,150,150,0.095)" stroke-width="1"/>
<line x1="1292.5" y1="847" x2="1292.5" y2="1047" stroke="rgba(150,150,150,0.095)" stroke-width="1"/>
<line x1="75" y1="883.5" x2="1320" y2="883.5" stroke="rgba(150,150,150,0.2)" stroke-width="1"/>
<line x1="75" y1="947.5" x2="1320" y2="947.5" stroke="rgba(150,150,150,0.2)" stroke-width="1"/>
<line x1="75" y1="1012.5" x2="1320" y2="1012.5" stroke="rgba(150,150,150,0.2)" stroke-width="1"/>
<line x1="75" y1="857.5" x2="1320" y2="857.5" stroke="rgba(150,150,150,0.075)" stroke-width="1"/>
<line x1="75" y1="870.5" x2="1320" y2="870.5" stroke="rgba(150,150,150,0.075)" stroke-width="1"/>
<line x1="75" y1="895.5" x2="1320" y2="895.5" stroke="rgba(150,150,150,0.075)" stroke-width="1"/>
<line x1="75" y1="908.5" x2="1320" y2="908.5" stroke="rgba(150,150,150,0.075)" stroke-width="1"/>
<line x1="75" y1="921.5" x2="1320" y2="921.5" stroke="rgba(150,150,150,0.075)" stroke-width="1"/>
<line x1="75" y1="934.5" x2="1320" y2="934.5" stroke="rgba(150,150,150,0.075)" stroke-width="1"/>
<line x1="75" y1="960.5" x2="1320" y2="960.5" stroke="rgba(150,150,150,0.075)" stroke-width="1"/>
<line x1="75" y1="973.5" x2="1320" y2="973.5" stroke="rgba(150,150,150,0.075)" stroke-width="1"/>
<line x1="75" y1="986.5" x2="1320" y2="986.5" stroke="rgba(150,150,150,0.075)" stroke-width="1"/>
<line x1="75" y1="999.5" x2="1320" y2="999.5" stroke="rgba(150,150,150,0.075)" stroke-width="1"/>
<line x1="75" y1="1025.5" x2="1320" y2="1025.5" stroke="rgba(150,150,150,0.075)" stroke-width="1"/>
<line x1="75" y1="1038.5" x2="1320" y2="1038.5" stroke="rgba(150,150,150,0.075)" stroke-width="1"/>
<line x1="73.5" y1="847" x2="73.5" y2="1048" stroke="#969696" stroke-width="1"/>
<line x1="73" y1="1047.5" x2="1320" y2="1047.5" stroke="#969696" stroke-width="1"/>
<clipPath id="clxL4"><rect x="74" y="1047" width="1287" height="30"/></clipPath>
<g clip-path="url(#clxL4)">
<text x="101.33" y="1064.00" font-size="12.8" fill="#ffffff" text-anchor="middle" textLength="43.70" lengthAdjust="spacingAndGlyphs">-750ms</text>
<text x="349.45" y="1064.00" font-size="12.8" fill="#ffffff" text-anchor="middle" textLength="43.70" lengthAdjust="spacingAndGlyphs">-500ms</text>
<text x="597.58" y="1064.00" font-size="12.8" fill="#ffffff" text-anchor="middle" textLength="43.70" lengthAdjust="spacingAndGlyphs">-250ms</text>
<text x="845.70" y="1064.00" font-size="12.8" fill="#ffffff" text-anchor="middle" textLength="7.50" lengthAdjust="spacingAndGlyphs">0</text>
<text x="1093.83" y="1064.00" font-size="12.8" fill="#ffffff" text-anchor="middle" textLength="39.50" lengthAdjust="spacingAndGlyphs">250ms</text>
</g>
<clipPath id="clyL4"><rect x="-7" y="846" width="80" height="202"/></clipPath>
<g clip-path="url(#clyL4)">
<text x="67.50" y="887.40" font-size="12.8" fill="#ffffff" text-anchor="end" textLength="22.21" lengthAdjust="spacingAndGlyphs">100</text>
<text x="67.50" y="951.90" font-size="12.8" fill="#ffffff" text-anchor="end" textLength="7.40" lengthAdjust="spacingAndGlyphs">0</text>
<text x="67.50" y="1016.90" font-size="12.8" fill="#ffffff" text-anchor="end" textLength="26.64" lengthAdjust="spacingAndGlyphs">-100</text>
</g>
<text x="0" y="0" font-size="12.8" fill="#ffffff" text-anchor="middle" textLength="92" lengthAdjust="spacingAndGlyphs" transform="translate(35.5,947.0) rotate(-90)">counts (x1e+06)</text>
<text x="696.50" y="837.00" font-size="12.8" fill="#ffffff" text-anchor="middle" textLength="159.20" lengthAdjust="spacingAndGlyphs">H1:ASC-CHARD_P_SWSTAT</text>
<clipPath id="cpL5"><rect x="96" y="1105" width="1224" height="200"/></clipPath>
<g clip-path="url(#cpL5)">
<line x1="96" y1="1206.5" x2="1320" y2="1206.5" stroke="#8c564b" stroke-width="1.3"/>
</g>
<line x1="101.5" y1="1105" x2="101.5" y2="1305" stroke="rgba(150,150,150,0.2)" stroke-width="1"/>
<line x1="150.5" y1="1105" x2="150.5" y2="1305" stroke="rgba(150,150,150,0.095)" stroke-width="1"/>
<line x1="200.5" y1="1105" x2="200.5" y2="1305" stroke="rgba(150,150,150,0.095)" stroke-width="1"/>
<line x1="250.5" y1="1105" x2="250.5" y2="1305" stroke="rgba(150,150,150,0.095)" stroke-width="1"/>
<line x1="299.5" y1="1105" x2="299.5" y2="1305" stroke="rgba(150,150,150,0.095)" stroke-width="1"/>
<line x1="349.5" y1="1105" x2="349.5" y2="1305" stroke="rgba(150,150,150,0.2)" stroke-width="1"/>
<line x1="398.5" y1="1105" x2="398.5" y2="1305" stroke="rgba(150,150,150,0.095)" stroke-width="1"/>
<line x1="448.5" y1="1105" x2="448.5" y2="1305" stroke="rgba(150,150,150,0.095)" stroke-width="1"/>
<line x1="498.5" y1="1105" x2="498.5" y2="1305" stroke="rgba(150,150,150,0.095)" stroke-width="1"/>
<line x1="547.5" y1="1105" x2="547.5" y2="1305" stroke="rgba(150,150,150,0.095)" stroke-width="1"/>
<line x1="597.5" y1="1105" x2="597.5" y2="1305" stroke="rgba(150,150,150,0.2)" stroke-width="1"/>
<line x1="647.5" y1="1105" x2="647.5" y2="1305" stroke="rgba(150,150,150,0.095)" stroke-width="1"/>
<line x1="696.5" y1="1105" x2="696.5" y2="1305" stroke="rgba(150,150,150,0.095)" stroke-width="1"/>
<line x1="746.5" y1="1105" x2="746.5" y2="1305" stroke="rgba(150,150,150,0.095)" stroke-width="1"/>
<line x1="795.5" y1="1105" x2="795.5" y2="1305" stroke="rgba(150,150,150,0.095)" stroke-width="1"/>
<line x1="845.5" y1="1105" x2="845.5" y2="1305" stroke="rgba(150,150,150,0.2)" stroke-width="1"/>
<line x1="895.5" y1="1105" x2="895.5" y2="1305" stroke="rgba(150,150,150,0.095)" stroke-width="1"/>
<line x1="944.5" y1="1105" x2="944.5" y2="1305" stroke="rgba(150,150,150,0.095)" stroke-width="1"/>
<line x1="994.5" y1="1105" x2="994.5" y2="1305" stroke="rgba(150,150,150,0.095)" stroke-width="1"/>
<line x1="1044.5" y1="1105" x2="1044.5" y2="1305" stroke="rgba(150,150,150,0.095)" stroke-width="1"/>
<line x1="1093.5" y1="1105" x2="1093.5" y2="1305" stroke="rgba(150,150,150,0.2)" stroke-width="1"/>
<line x1="1143.5" y1="1105" x2="1143.5" y2="1305" stroke="rgba(150,150,150,0.095)" stroke-width="1"/>
<line x1="1192.5" y1="1105" x2="1192.5" y2="1305" stroke="rgba(150,150,150,0.095)" stroke-width="1"/>
<line x1="1242.5" y1="1105" x2="1242.5" y2="1305" stroke="rgba(150,150,150,0.095)" stroke-width="1"/>
<line x1="1292.5" y1="1105" x2="1292.5" y2="1305" stroke="rgba(150,150,150,0.095)" stroke-width="1"/>
<line x1="97" y1="1129.5" x2="1320" y2="1129.5" stroke="rgba(150,150,150,0.2)" stroke-width="1"/>
<line x1="97" y1="1167.5" x2="1320" y2="1167.5" stroke="rgba(150,150,150,0.2)" stroke-width="1"/>
<line x1="97" y1="1206.5" x2="1320" y2="1206.5" stroke="rgba(150,150,150,0.2)" stroke-width="1"/>
<line x1="97" y1="1244.5" x2="1320" y2="1244.5" stroke="rgba(150,150,150,0.2)" stroke-width="1"/>
<line x1="97" y1="1282.5" x2="1320" y2="1282.5" stroke="rgba(150,150,150,0.2)" stroke-width="1"/>
<line x1="97" y1="1110.5" x2="1320" y2="1110.5" stroke="rgba(150,150,150,0.075)" stroke-width="1"/>
<line x1="97" y1="1148.5" x2="1320" y2="1148.5" stroke="rgba(150,150,150,0.075)" stroke-width="1"/>
<line x1="97" y1="1187.5" x2="1320" y2="1187.5" stroke="rgba(150,150,150,0.075)" stroke-width="1"/>
<line x1="97" y1="1225.5" x2="1320" y2="1225.5" stroke="rgba(150,150,150,0.075)" stroke-width="1"/>
<line x1="97" y1="1263.5" x2="1320" y2="1263.5" stroke="rgba(150,150,150,0.075)" stroke-width="1"/>
<line x1="97" y1="1301.5" x2="1320" y2="1301.5" stroke="rgba(150,150,150,0.075)" stroke-width="1"/>
<line x1="95.5" y1="1105" x2="95.5" y2="1306" stroke="#969696" stroke-width="1"/>
<line x1="95" y1="1305.5" x2="1320" y2="1305.5" stroke="#969696" stroke-width="1"/>
<clipPath id="clxL5"><rect x="96" y="1305" width="1265" height="30"/></clipPath>
<g clip-path="url(#clxL5)">
<text x="101.33" y="1322.00" font-size="12.8" fill="#ffffff" text-anchor="middle" textLength="43.70" lengthAdjust="spacingAndGlyphs">-750ms</text>
<text x="349.45" y="1322.00" font-size="12.8" fill="#ffffff" text-anchor="middle" textLength="43.70" lengthAdjust="spacingAndGlyphs">-500ms</text>
<text x="597.58" y="1322.00" font-size="12.8" fill="#ffffff" text-anchor="middle" textLength="43.70" lengthAdjust="spacingAndGlyphs">-250ms</text>
<text x="845.70" y="1322.00" font-size="12.8" fill="#ffffff" text-anchor="middle" textLength="7.50" lengthAdjust="spacingAndGlyphs">0</text>
<text x="1093.83" y="1322.00" font-size="12.8" fill="#ffffff" text-anchor="middle" textLength="39.50" lengthAdjust="spacingAndGlyphs">250ms</text>
</g>
<clipPath id="clyL5"><rect x="15" y="1104" width="80" height="202"/></clipPath>
<g clip-path="url(#clyL5)">
<text x="90.50" y="1133.70" font-size="12.8" fill="#ffffff" text-anchor="end" textLength="48.11" lengthAdjust="spacingAndGlyphs">37890.4</text>
<text x="90.50" y="1171.90" font-size="12.8" fill="#ffffff" text-anchor="end" textLength="48.11" lengthAdjust="spacingAndGlyphs">37890.2</text>
<text x="90.50" y="1210.90" font-size="12.8" fill="#ffffff" text-anchor="end" textLength="37.01" lengthAdjust="spacingAndGlyphs">37890</text>
<text x="90.50" y="1248.70" font-size="12.8" fill="#ffffff" text-anchor="end" textLength="48.11" lengthAdjust="spacingAndGlyphs">37889.8</text>
<text x="90.50" y="1286.90" font-size="12.8" fill="#ffffff" text-anchor="end" textLength="48.11" lengthAdjust="spacingAndGlyphs">37889.6</text>
</g>
<text x="0" y="0" font-size="12.8" fill="#ffffff" text-anchor="middle" textLength="40" lengthAdjust="spacingAndGlyphs" transform="translate(35.0,1205.0) rotate(-90)">counts</text>
<text x="707.50" y="1095.00" font-size="12.8" fill="#ffffff" text-anchor="middle" textLength="159.20" lengthAdjust="spacingAndGlyphs">H1:ASC-CHARD_Y_SWSTAT</text>
<rect x="1389.5" y="55.5" width="188" height="112" fill="rgba(100,100,100,0.14)" stroke="rgba(255,255,255,0.33)" stroke-width="1"/>
<rect x="1398" y="64" width="19" height="19" fill="#7f7f7f"/>
<text x="1424.20" y="79.00" font-size="12.8" fill="#ffffff" textLength="141.10" lengthAdjust="spacingAndGlyphs">H1:ASC-CHARD_Y_GAIN</text>
<rect x="1398" y="89" width="19" height="19" fill="#e377c2"/>
<text x="1424.20" y="104.00" font-size="12.8" fill="#ffffff" textLength="142.30" lengthAdjust="spacingAndGlyphs">H1:ASC-CHARD_P_GAIN</text>
<rect x="1398" y="114" width="19" height="19" fill="#17becf"/>
<text x="1424.20" y="129.00" font-size="12.8" fill="#ffffff" textLength="142.70" lengthAdjust="spacingAndGlyphs">H1:ASC-DHARD_Y_GAIN</text>
<rect x="1398" y="139" width="19" height="19" fill="#bcbd22"/>
<text x="1424.20" y="154.00" font-size="12.8" fill="#ffffff" textLength="143.10" lengthAdjust="spacingAndGlyphs">H1:ASC-DHARD_P_GAIN</text>
<clipPath id="cpR1"><rect x="1380" y="45" width="1160" height="229"/></clipPath>
<g clip-path="url(#cpR1)">
<line x1="1380" y1="62.5" x2="2540" y2="62.5" stroke="#8f8f8f" stroke-width="1.4"/>
<line x1="1380" y1="187.5" x2="2540" y2="187.5" stroke="#e377c2" stroke-width="1.4"/>
<line x1="1380" y1="249.5" x2="2540" y2="249.5" stroke="#bcbd22" stroke-width="1.4"/>
<line x1="1380" y1="254" x2="2540" y2="254" stroke="#17becf" stroke-width="1.4"/>
</g>
<line x1="1405.5" y1="45" x2="1405.5" y2="274" stroke="rgba(150,150,150,0.2)" stroke-width="1"/>
<line x1="1451.5" y1="45" x2="1451.5" y2="274" stroke="rgba(150,150,150,0.095)" stroke-width="1"/>
<line x1="1497.5" y1="45" x2="1497.5" y2="274" stroke="rgba(150,150,150,0.095)" stroke-width="1"/>
<line x1="1543.5" y1="45" x2="1543.5" y2="274" stroke="rgba(150,150,150,0.095)" stroke-width="1"/>
<line x1="1590.5" y1="45" x2="1590.5" y2="274" stroke="rgba(150,150,150,0.095)" stroke-width="1"/>
<line x1="1636.5" y1="45" x2="1636.5" y2="274" stroke="rgba(150,150,150,0.2)" stroke-width="1"/>
<line x1="1682.5" y1="45" x2="1682.5" y2="274" stroke="rgba(150,150,150,0.095)" stroke-width="1"/>
<line x1="1728.5" y1="45" x2="1728.5" y2="274" stroke="rgba(150,150,150,0.095)" stroke-width="1"/>
<line x1="1774.5" y1="45" x2="1774.5" y2="274" stroke="rgba(150,150,150,0.095)" stroke-width="1"/>
<line x1="1821.5" y1="45" x2="1821.5" y2="274" stroke="rgba(150,150,150,0.095)" stroke-width="1"/>
<line x1="1867.5" y1="45" x2="1867.5" y2="274" stroke="rgba(150,150,150,0.2)" stroke-width="1"/>
<line x1="1913.5" y1="45" x2="1913.5" y2="274" stroke="rgba(150,150,150,0.095)" stroke-width="1"/>
<line x1="1959.5" y1="45" x2="1959.5" y2="274" stroke="rgba(150,150,150,0.095)" stroke-width="1"/>
<line x1="2005.5" y1="45" x2="2005.5" y2="274" stroke="rgba(150,150,150,0.095)" stroke-width="1"/>
<line x1="2052.5" y1="45" x2="2052.5" y2="274" stroke="rgba(150,150,150,0.095)" stroke-width="1"/>
<line x1="2098.5" y1="45" x2="2098.5" y2="274" stroke="rgba(150,150,150,0.2)" stroke-width="1"/>
<line x1="2144.5" y1="45" x2="2144.5" y2="274" stroke="rgba(150,150,150,0.095)" stroke-width="1"/>
<line x1="2190.5" y1="45" x2="2190.5" y2="274" stroke="rgba(150,150,150,0.095)" stroke-width="1"/>
<line x1="2236.5" y1="45" x2="2236.5" y2="274" stroke="rgba(150,150,150,0.095)" stroke-width="1"/>
<line x1="2283.5" y1="45" x2="2283.5" y2="274" stroke="rgba(150,150,150,0.095)" stroke-width="1"/>
<line x1="2329.5" y1="45" x2="2329.5" y2="274" stroke="rgba(150,150,150,0.2)" stroke-width="1"/>
<line x1="2375.5" y1="45" x2="2375.5" y2="274" stroke="rgba(150,150,150,0.095)" stroke-width="1"/>
<line x1="2421.5" y1="45" x2="2421.5" y2="274" stroke="rgba(150,150,150,0.095)" stroke-width="1"/>
<line x1="2467.5" y1="45" x2="2467.5" y2="274" stroke="rgba(150,150,150,0.095)" stroke-width="1"/>
<line x1="2514.5" y1="45" x2="2514.5" y2="274" stroke="rgba(150,150,150,0.095)" stroke-width="1"/>
<line x1="1381" y1="62.5" x2="2540" y2="62.5" stroke="rgba(150,150,150,0.2)" stroke-width="1"/>
<line x1="1381" y1="119.5" x2="2540" y2="119.5" stroke="rgba(150,150,150,0.2)" stroke-width="1"/>
<line x1="1381" y1="176.5" x2="2540" y2="176.5" stroke="rgba(150,150,150,0.2)" stroke-width="1"/>
<line x1="1381" y1="232.5" x2="2540" y2="232.5" stroke="rgba(150,150,150,0.2)" stroke-width="1"/>
<line x1="1379.5" y1="45" x2="1379.5" y2="275" stroke="#969696" stroke-width="1"/>
<line x1="1379" y1="274.5" x2="2540" y2="274.5" stroke="#969696" stroke-width="1"/>
<clipPath id="clxR1"><rect x="1380" y="274" width="1201" height="30"/></clipPath>
<g clip-path="url(#clxR1)">
<text x="1405.50" y="291.00" font-size="12.8" fill="#ffffff" text-anchor="middle" textLength="43.70" lengthAdjust="spacingAndGlyphs">-750ms</text>
<text x="1636.50" y="291.00" font-size="12.8" fill="#ffffff" text-anchor="middle" textLength="43.70" lengthAdjust="spacingAndGlyphs">-500ms</text>
<text x="1867.50" y="291.00" font-size="12.8" fill="#ffffff" text-anchor="middle" textLength="43.70" lengthAdjust="spacingAndGlyphs">-250ms</text>
<text x="2098.50" y="291.00" font-size="12.8" fill="#ffffff" text-anchor="middle" textLength="7.50" lengthAdjust="spacingAndGlyphs">0</text>
<text x="2329.50" y="291.00" font-size="12.8" fill="#ffffff" text-anchor="middle" textLength="39.50" lengthAdjust="spacingAndGlyphs">250ms</text>
</g>
<clipPath id="clyR1"><rect x="1299" y="44" width="80" height="231"/></clipPath>
<g clip-path="url(#clyR1)">
<text x="1374.00" y="66.90" font-size="12.8" fill="#ffffff" text-anchor="end" textLength="22.21" lengthAdjust="spacingAndGlyphs">300</text>
<text x="1374.00" y="123.90" font-size="12.8" fill="#ffffff" text-anchor="end" textLength="22.21" lengthAdjust="spacingAndGlyphs">200</text>
<text x="1374.00" y="180.40" font-size="12.8" fill="#ffffff" text-anchor="end" textLength="22.21" lengthAdjust="spacingAndGlyphs">100</text>
<text x="1374.00" y="236.90" font-size="12.8" fill="#ffffff" text-anchor="end" textLength="7.40" lengthAdjust="spacingAndGlyphs">0</text>
</g>
<text x="0" y="0" font-size="12.8" fill="#ffffff" text-anchor="middle" textLength="40" lengthAdjust="spacingAndGlyphs" transform="translate(1340.5,159.5) rotate(-90)">counts</text>
<rect x="1375.5" y="312.5" width="248" height="87" fill="rgba(100,100,100,0.14)" stroke="rgba(255,255,255,0.33)" stroke-width="1"/>
<rect x="1384" y="321" width="19" height="19" fill="#800000"/>
<text x="1410.20" y="336.00" font-size="12.8" fill="#ffffff" textLength="186.70" lengthAdjust="spacingAndGlyphs">H1:ASC-MICH_P_OUT_DQ*0.05</text>
<rect x="1384" y="346" width="19" height="19" fill="#ffa500"/>
<text x="1410.20" y="361.00" font-size="12.8" fill="#ffffff" textLength="190.50" lengthAdjust="spacingAndGlyphs">H1:ASC-SRC1_P_OUT_DQ*0.002</text>
<rect x="1384" y="371" width="19" height="19" fill="#ff0000"/>
<text x="1410.20" y="386.00" font-size="12.8" fill="#ffffff" textLength="203.50" lengthAdjust="spacingAndGlyphs">H1:ASC-DHARD_P_OUT_DQ*0.001</text>
<clipPath id="cpR2"><rect x="1366" y="302" width="1174" height="230"/></clipPath>
<g clip-path="url(#cpR2)">
<path d="M1366.0 396.0 L1367.1 395.9 L1368.3 395.9 L1369.7 395.8 L1371.1 395.7 L1372.7 395.6 L1374.4 395.5 L1376.3 395.4 L1378.2 395.4 L1380.1 395.3 L1382.2 395.2 L1384.3 395.0 L1386.5 394.9 L1388.7 394.8 L1391.0 394.7 L1393.3 394.5 L1395.6 394.4 L1398.0 394.2 L1400.3 394.1 L1402.6 393.9 L1404.9 393.7 L1407.2 393.5 L1409.5 393.3 L1411.7 393.1 L1413.9 392.8 L1416.0 392.6 L1418.0 392.3 L1420.0 392.0 L1422.1 391.7 L1424.2 391.3 L1426.3 390.9 L1428.4 390.4 L1430.6 390.0 L1432.7 389.5 L1434.9 389.0 L1437.0 388.4 L1439.1 387.9 L1441.2 387.3 L1443.4 386.8 L1445.5 386.2 L1447.5 385.6 L1449.6 385.1 L1451.6 384.5 L1453.6 384.0 L1455.6 383.4 L1457.6 382.9 L1459.5 382.4 L1461.3 381.9 L1463.2 381.5 L1465.0 381.0 L1466.7 380.7 L1468.4 380.3 L1470.0 380.0 L1472.5 379.5 L1474.9 379.1 L1477.0 378.8 L1479.0 378.5 L1480.9 378.2 L1482.7 378.0 L1484.5 377.8 L1486.2 377.7 L1487.9 377.5 L1489.6 377.5 L1491.4 377.4 L1493.4 377.4 L1495.4 377.4 L1497.6 377.4 L1500.0 377.5 L1501.7 377.6 L1503.6 377.6 L1505.5 377.7 L1507.4 377.8 L1509.4 377.9 L1511.5 378.0 L1513.6 378.1 L1515.7 378.3 L1517.8 378.4 L1520.0 378.6 L1522.2 378.8 L1524.4 379.0 L1526.6 379.2 L1528.7 379.4 L1530.9 379.7 L1533.0 380.0 L1535.2 380.3 L1537.2 380.6 L1539.3 380.9 L1541.2 381.2 L1543.1 381.6 L1545.0 382.0 L1547.3 382.6 L1549.6 383.2 L1551.8 383.9 L1554.0 384.7 L1556.2 385.5 L1558.3 386.4 L1560.4 387.2 L1562.4 388.1 L1564.4 389.0 L1566.4 389.9 L1568.4 390.8 L1570.4 391.6 L1572.3 392.4 L1574.3 393.2 L1576.2 393.9 L1578.1 394.5 L1580.0 395.0 L1582.0 395.5 L1583.8 396.0 L1585.4 396.4 L1586.8 396.8 L1588.1 397.1 L1589.5 397.4 L1590.8 397.6 L1592.3 397.8 L1593.9 397.9 L1595.7 398.0 L1597.8 398.1 L1600.2 398.1 L1603.0 398.1 L1606.3 398.1 L1610.0 398.0 L1611.4 398.0 L1612.8 397.9 L1614.2 397.8 L1615.8 397.8 L1617.3 397.7 L1618.9 397.6 L1620.6 397.5 L1622.3 397.4 L1624.0 397.3 L1625.8 397.2 L1627.6 397.0 L1629.4 396.9 L1631.3 396.7 L1633.2 396.6 L1635.2 396.4 L1637.2 396.3 L1639.2 396.1 L1641.2 396.0 L1643.3 395.8 L1645.3 395.6 L1647.4 395.4 L1649.6 395.3 L1651.7 395.1 L1653.9 394.9 L1656.0 394.7 L1658.2 394.6 L1660.4 394.4 L1662.6 394.2 L1664.8 394.1 L1667.0 393.9 L1669.3 393.7 L1671.5 393.6 L1673.7 393.4 L1675.9 393.3 L1678.2 393.1 L1680.4 393.0 L1682.6 392.8 L1684.8 392.7 L1687.0 392.6 L1689.2 392.5 L1691.4 392.3 L1693.6 392.2 L1695.7 392.2 L1697.9 392.1 L1700.0 392.0 L1701.9 391.9 L1703.9 391.9 L1705.8 391.8 L1707.8 391.8 L1709.8 391.8 L1711.9 391.7 L1713.9 391.7 L1716.0 391.7 L1718.1 391.7 L1720.2 391.6 L1722.3 391.6 L1724.4 391.6 L1726.5 391.6 L1728.7 391.6 L1730.8 391.6 L1733.0 391.6 L1735.2 391.6 L1737.3 391.6 L1739.5 391.7 L1741.7 391.7 L1743.9 391.7 L1746.0 391.7 L1748.2 391.7 L1750.3 391.7 L1752.5 391.8 L1754.6 391.8 L1756.8 391.8 L1758.9 391.8 L1761.0 391.8 L1763.1 391.9 L1765.2 391.9 L1767.3 391.9 L1769.3 391.9 L1771.4 391.9 L1773.4 392.0 L1775.3 392.0 L1777.3 392.0 L1779.2 392.0 L1781.2 392.0 L1783.0 392.0 L1784.9 392.0 L1786.7 392.0 L1788.5 392.1 L1790.3 392.1 L1792.0 392.1 L1793.7 392.1 L1795.3 392.0 L1796.9 392.0 L1798.5 392.0 L1800.0 392.0 L1802.9 392.0 L1805.7 391.9 L1808.3 391.9 L1810.8 391.8 L1813.2 391.8 L1815.5 391.8 L1817.6 391.7 L1819.7 391.7 L1821.7 391.6 L1823.6 391.6 L1825.4 391.5 L1827.2 391.5 L1829.0 391.4 L1830.7 391.3 L1832.4 391.3 L1834.1 391.2 L1835.7 391.1 L1837.4 391.0 L1839.1 390.9 L1840.8 390.8 L1842.5 390.6 L1844.3 390.5 L1846.1 390.3 L1848.0 390.2 L1850.0 390.0 L1852.0 389.8 L1854.0 389.6 L1856.1 389.4 L1858.1 389.1 L1860.2 388.9 L1862.2 388.6 L1864.3 388.3 L1866.3 388.0 L1868.4 387.7 L1870.5 387.4 L1872.5 387.0 L1874.6 386.7 L1876.6 386.4 L1878.7 386.1 L1880.7 385.8 L1882.7 385.4 L1884.7 385.1 L1886.7 384.8 L1888.7 384.5 L1890.6 384.2 L1892.6 383.9 L1894.5 383.7 L1896.3 383.4 L1898.2 383.2 L1900.0 383.0 L1902.2 382.8 L1904.5 382.5 L1906.7 382.3 L1909.0 382.1 L1911.2 381.9 L1913.4 381.8 L1915.5 381.6 L1917.7 381.4 L1919.8 381.3 L1921.9 381.2 L1923.9 381.0 L1925.9 380.9 L1927.9 380.8 L1929.8 380.7 L1931.6 380.6 L1933.4 380.5 L1935.2 380.3 L1936.9 380.2 L1938.5 380.1 L1940.0 380.0 L1942.7 379.8 L1945.0 379.6 L1946.8 379.4 L1948.5 379.2 L1950.0 379.0 L1951.5 378.9 L1953.2 378.7 L1955.0 378.6 L1957.3 378.4 L1960.0 378.3 L1961.6 378.2 L1963.3 378.2 L1965.1 378.2 L1967.0 378.1 L1969.1 378.1 L1971.2 378.1 L1973.3 378.1 L1975.5 378.0 L1977.8 378.0 L1980.0 378.0 L1982.2 378.0 L1984.5 378.0 L1986.7 377.9 L1988.8 377.9 L1990.9 377.9 L1993.0 377.8 L1994.9 377.8 L1996.7 377.7 L1998.4 377.6 L2000.0 377.5 L2002.8 377.3 L2005.4 377.0 L2007.7 376.7 L2009.8 376.4 L2011.7 376.0 L2013.5 375.6 L2015.1 375.2 L2016.8 374.8 L2018.4 374.4 L2020.0 374.0 L2022.5 373.2 L2024.8 372.2 L2026.8 371.2 L2028.8 370.3 L2030.8 369.6 L2033.0 369.3 L2035.1 369.4 L2037.4 369.6 L2039.7 370.1 L2042.0 370.7 L2044.2 371.5 L2046.3 372.2 L2048.0 373.0 L2050.8 374.6 L2052.7 376.6 L2055.0 380.0 L2056.7 381.2 L2058.5 381.3 L2060.4 382.7 L2062.6 388.1 L2065.0 400.0 L2066.8 412.7 L2069.0 429.8 L2071.3 449.9 L2073.6 471.2 L2075.9 492.5 L2078.0 512.0 L2079.7 528.4 L2081.0 540.0 M2080.0 545.0 L2081.0 545.0 M2113.0 290.0 L2114.0 545.0 M2168.0 290.0 L2169.0 545.0 M2235.0 290.0 L2238.7 545.0 M2288.3 290.0 L2285.0 545.0 M2337.5 290.0 L2341.7 545.0 M2396.7 290.0 L2397.5 343.0 M2438.8 290.0 L2445.8 545.0 M2487.4 545.0 L2497.9 290.0" fill="none" stroke="#800000" stroke-width="1.1" stroke-linejoin="miter" stroke-miterlimit="2" shape-rendering="crispEdges"/>
<path d="M1366.0 431.8 L1367.2 433.8 L1368.7 435.8 L1370.2 434.3 L1371.4 428.3 L1372.7 434.0 L1374.8 430.4 L1375.9 430.8 L1377.3 433.0 L1379.2 433.7 L1380.9 431.0 L1382.1 430.2 L1383.4 430.8 L1385.1 429.5 L1386.5 433.1 L1388.2 428.5 L1390.1 431.4 L1391.4 430.0 L1393.2 433.8 L1395.0 435.4 L1396.6 434.8 L1398.3 431.3 L1399.9 435.8 L1401.7 427.6 L1403.4 426.3 L1404.8 424.3 L1406.6 433.9 L1407.8 433.2 L1409.7 434.1 L1411.6 434.3 L1413.2 427.4 L1415.1 429.7 L1416.7 428.3 L1417.9 436.1 L1419.3 433.6 L1420.6 438.5 L1422.2 431.3 L1423.9 434.9 L1425.7 432.6 L1427.5 431.7 L1429.4 430.2 L1431.1 433.8 L1432.3 433.2 L1433.5 435.6 L1434.8 437.4 L1436.7 435.0 L1438.0 433.0 L1439.2 435.1 L1441.3 429.9 L1442.5 432.7 L1443.9 434.0 L1445.9 431.4 L1447.2 431.7 L1449.2 432.2 L1451.0 432.2 L1452.9 435.1 L1454.8 432.1 L1456.8 434.1 L1458.7 434.7 L1460.3 428.8 L1461.5 434.0 L1463.3 433.2 L1464.8 440.2 L1466.3 430.9 L1467.6 432.8 L1469.6 434.3 L1471.2 430.0 L1472.9 428.0 L1474.8 431.6 L1476.7 429.2 L1478.6 434.6 L1480.6 432.4 L1481.9 433.6 L1483.8 433.8 L1485.7 436.8 L1487.4 432.9 L1488.5 436.5 L1490.5 432.6 L1492.5 433.4 L1493.9 431.0 L1495.5 432.0 L1497.5 435.3 L1499.1 427.9 L1501.1 428.6 L1502.7 431.2 L1504.0 431.9 L1505.9 433.8 L1507.6 435.5 L1509.2 428.6 L1510.8 430.1 L1512.2 432.5 L1514.1 429.3 L1515.6 429.4 L1517.4 429.8 L1519.0 425.5 L1521.0 432.0 L1522.4 426.3 L1523.6 428.8 L1525.2 433.6 L1526.9 433.6 L1528.9 435.2 L1530.2 436.6 L1532.2 434.6 L1533.8 439.6 L1535.7 435.5 L1537.2 435.6 L1538.6 433.0 L1540.1 431.7 L1541.6 430.0 L1543.6 429.7 L1545.7 433.6 L1547.6 434.1 L1548.8 427.5 L1550.2 434.3 L1552.2 429.0 L1553.4 430.0 L1554.9 437.8 L1556.8 436.4 L1558.7 438.3 L1560.2 435.9 L1562.2 433.0 L1563.5 434.0 L1564.8 434.6 L1566.2 433.5 L1567.6 431.0 L1568.0 429.3 L1569.7 419.5 L1570.9 432.9 L1572.0 417.8 L1573.8 451.0 L1575.0 398.7 L1576.3 437.3 L1577.6 405.3 L1579.0 440.3 L1580.1 397.3 L1581.3 445.7 L1582.8 388.8 L1584.3 471.3 L1585.6 378.4 L1587.2 485.1 L1588.9 399.8 L1590.6 439.2 L1592.0 401.4 L1593.7 441.8 L1595.2 402.9 L1596.2 440.2 L1597.3 388.4 L1598.8 463.8 L1600.2 406.8 L1601.8 469.7 L1603.3 399.9 L1604.5 456.4 L1606.1 390.0 L1607.9 485.9 L1609.3 348.6 L1610.8 534.3 L1612.0 339.4 L1613.4 479.5 L1615.0 345.6 L1616.2 490.5 L1617.6 391.0 L1618.7 530.0 L1619.7 374.6 L1621.5 474.2 L1622.7 345.8 L1624.1 453.1 L1625.9 404.9 L1627.3 477.6 L1628.5 382.4 L1629.5 440.2 L1630.9 411.8 L1632.1 441.3 L1633.1 396.7 L1634.2 471.7 L1635.9 401.6 L1637.2 498.8 L1638.5 387.0 L1639.5 455.0 L1640.8 340.4 L1642.0 481.0 L1643.3 331.4 L1644.9 492.6 L1646.7 369.9 L1647.7 496.6 L1649.3 369.8 L1650.3 501.3 L1651.7 395.8 L1653.3 484.2 L1654.9 407.6 L1656.2 439.9 L1657.3 399.9 L1658.5 447.6 L1659.8 418.0 L1660.9 446.4 L1662.1 406.6 L1663.7 446.0 L1665.1 406.8 L1666.2 445.9 L1667.2 399.5 L1668.9 447.2 L1670.1 399.6 L1671.9 479.8 L1672.9 407.3 L1674.6 463.0 L1675.6 394.1 L1677.3 488.2 L1678.5 403.5 L1679.9 477.4 L1681.5 379.2 L1682.9 503.6 L1684.0 363.7 L1685.3 449.2 L1686.8 382.2 L1687.8 461.2 L1689.1 405.8 L1690.1 449.2 L1691.9 396.7 L1693.3 442.2 L1695.1 403.7 L1696.1 442.8 L1697.4 417.4 L1699.2 446.9 L1700.5 399.0 L1702.1 462.9 L1703.3 374.9 L1705.0 450.3 L1706.6 398.7 L1708.0 453.4 L1709.3 373.6 L1710.4 465.7 L1712.2 388.2 L1713.5 505.5 L1715.1 338.4 L1716.4 458.6 L1718.0 400.4 L1719.3 466.4 L1720.4 401.8 L1721.7 505.8 L1723.5 398.0 L1725.1 488.5 L1726.2 389.2 L1727.9 450.4 L1729.6 409.4 L1731.3 478.6 L1732.3 384.9 L1733.9 461.6 L1735.2 395.0 L1736.4 448.2 L1737.6 413.6 L1739.3 465.2 L1740.3 401.6 L1742.1 504.6 L1743.3 381.9 L1745.0 463.6 L1746.6 334.1 L1748.1 478.8 L1749.4 286.3 L1751.0 492.5 L1752.5 371.6 L1754.2 552.3 L1755.3 387.1 L1756.8 487.2 L1758.2 355.4 L1759.8 512.9 L1760.8 348.1 L1762.3 465.1 L1763.5 398.5 L1764.6 484.1 L1765.8 401.0 L1767.2 443.8 L1768.7 396.4 L1770.1 458.4 L1771.9 411.9 L1773.0 447.2 L1774.4 365.9 L1776.1 466.2 L1777.8 345.4 L1779.2 487.3 L1780.5 393.6 L1781.7 491.1 L1782.9 395.5 L1784.4 464.6 L1785.6 343.5 L1786.6 460.2 L1788.1 335.3 L1789.6 471.4 L1790.9 348.3 L1792.3 458.6 L1794.0 371.1 L1795.2 461.4 L1796.2 391.5 L1797.8 440.9 L1799.2 403.7 L1800.7 502.2 L1802.0 396.2 L1803.2 463.0 L1804.3 388.8 L1806.1 456.6 L1807.9 337.3 L1808.9 516.8 L1810.6 359.8 L1811.7 512.5 L1813.1 332.3 L1814.2 469.4 L1815.6 373.2 L1816.8 511.3 L1817.8 359.0 L1818.8 521.2 L1820.3 363.4 L1821.5 478.2 L1822.9 360.4 L1824.2 454.8 L1825.6 395.0 L1827.2 465.4 L1828.6 405.7 L1830.0 445.2 L1831.4 412.3 L1832.4 457.9 L1833.8 416.3 L1835.1 461.7 L1836.8 379.3 L1838.5 448.5 L1839.9 360.6 L1841.0 487.7 L1842.0 390.0 L1843.2 506.5 L1844.8 394.6 L1846.6 463.9 L1848.0 364.9 L1849.1 522.2 L1850.8 392.3 L1851.9 482.3 L1853.2 346.6 L1854.7 502.2 L1856.5 378.4 L1858.1 452.2 L1859.6 403.0 L1860.9 442.4 L1862.0 396.6 L1863.5 456.6 L1865.0 406.3 L1866.1 454.4 L1867.5 381.8 L1868.7 476.7 L1870.0 406.2 L1871.1 470.0 L1872.3 377.9 L1873.4 502.9 L1874.5 399.4 L1876.2 499.3 L1877.4 398.2 L1878.9 471.0 L1880.2 333.0 L1881.4 579.3 L1882.7 356.2 L1883.7 485.4 L1884.8 391.6 L1886.2 489.1 L1887.3 388.9 L1888.4 503.9 L1889.9 403.0 L1891.6 464.5 L1892.9 402.9 L1894.1 444.6 L1895.7 392.7 L1897.3 442.8 L1898.6 400.4 L1899.8 445.9 L1901.0 382.0 L1902.2 457.9 L1903.8 405.2 L1905.0 449.1 L1906.5 380.5 L1908.3 466.2 L1909.9 358.0 L1911.5 478.2 L1912.7 318.2 L1913.8 453.7 L1915.5 388.2 L1916.5 453.4 L1918.0 368.4 L1919.1 476.1 L1920.7 367.5 L1921.8 485.5 L1923.5 408.2 L1924.6 442.7 L1926.3 399.7 L1927.8 445.6 L1929.4 418.6 L1930.7 436.1 L1932.0 399.6 L1933.2 471.3 L1934.9 369.7 L1936.2 476.2 L1937.8 386.8 L1939.5 450.6 L1940.6 404.6 L1942.3 545.2 L1943.7 371.0 L1945.1 455.7 L1946.3 371.7 L1947.4 463.9 L1948.5 372.1 L1950.1 454.6 L1951.3 414.0 L1953.1 441.5 L1954.1 406.6 L1955.8 468.4 L1957.5 391.2 L1958.9 509.2 L1960.5 373.6 L1961.6 533.4 L1963.2 381.2 L1964.8 506.7 L1966.2 315.1 L1967.3 477.2 L1969.0 390.1 L1970.2 468.4 L1971.3 390.6 L1973.1 474.1 L1974.9 412.4 L1976.7 450.0 L1978.1 413.9 L1979.1 442.6 L1980.1 403.8 L1981.7 458.6 L1983.1 405.1 L1984.4 479.7 L1985.0 394.7 L1988.3 454.7 L1991.0 454.7 L1995.0 506.0 L1996.7 545.0 L2006.3 562.0 L2007.0 272.0 L2012.5 272.0 L2013.2 562.0 L2014.7 562.0 L2015.4 272.0 L2015.8 272.0 L2016.5 562.0 L2025.8 545.0 L2030.0 475.0 L2032.5 426.0 L2035.0 403.0 L2040.0 411.0 L2043.3 464.7 L2047.5 545.0 L2049.2 562.0 L2049.9 272.0 L2051.3 272.0 L2052.0 562.0 L2056.7 562.0 L2057.4 272.0 L2059.2 272.0 L2059.9 562.0 L2061.7 562.0 L2062.4 272.0 L2064.2 272.0 L2064.9 562.0 L2066.0 470.0 L2067.5 364.7 L2070.0 440.0 L2073.0 476.0 L2075.0 453.0 L2077.0 488.0 L2079.0 449.0 L2081.0 478.0 L2083.0 450.0 L2085.0 470.0 L2086.5 455.0 L2087.5 562.0 L2088.2 272.0 L2089.2 272.0 L2089.9 562.0 L2093.3 562.0 L2094.0 272.0 L2095.0 272.0 L2095.7 562.0 L2097.5 562.0 L2098.2 272.0 L2099.7 272.0 L2100.4 562.0 L2101.7 562.0 L2102.4 272.0 L2103.7 272.0 L2104.4 562.0 L2105.3 562.0 L2106.0 272.0 L2107.5 272.0 L2108.2 562.0 L2113.3 545.0 L2113.5 331.0 L2119.2 272.0 L2119.9 562.0 L2120.8 562.0 L2121.5 272.0 L2123.3 272.0 L2124.0 562.0 L2125.8 562.0 L2126.5 272.0 L2128.3 272.0 L2129.0 562.0 L2131.3 562.0 L2132.0 272.0 L2133.3 272.0 L2134.0 562.0 L2135.8 562.0 L2136.5 272.0 L2138.3 272.0 L2139.0 562.0 L2141.7 562.0 L2142.4 272.0 L2143.3 272.0 L2144.0 562.0 L2150.0 562.0 L2150.7 272.0 L2154.2 272.0 L2154.9 562.0 L2156.7 562.0 L2157.4 272.0 L2159.2 272.0 L2159.9 562.0 L2161.7 562.0 L2162.4 272.0 L2164.2 272.0 L2164.9 562.0 L2173.3 545.0 L2173.5 491.0 L2173.8 545.0 L2180.0 562.0 L2180.7 272.0 L2196.3 272.0 L2197.0 562.0 L2197.0 423.0 L2200.5 359.7 L2201.5 545.0 L2203.0 486.0 L2203.5 545.0 L2211.7 545.0 L2215.8 323.0 L2216.7 290.0 L2222.5 290.0 L2225.0 361.0 L2226.7 401.0 L2230.0 454.7 L2231.7 503.0 L2233.3 495.0 L2234.7 545.0 L2239.2 545.0 L2242.5 344.7 L2245.0 390.0 L2246.7 448.0 L2251.7 516.3 L2255.0 481.0 L2260.0 454.7 L2265.0 441.0 L2270.0 434.7 L2279.2 478.0 L2281.0 440.0 L2283.0 470.0 L2285.0 442.0 L2287.0 465.0 L2289.0 447.0 L2291.0 458.0 L2291.7 457.5 L2293.5 453.3 L2296.0 458.1 L2298.4 451.8 L2300.2 456.6 L2301.5 452.8 L2303.7 457.3 L2305.5 452.5 L2307.3 458.0 L2308.7 452.0 L2310.4 457.4 L2311.6 451.9 L2314.0 458.5 L2315.3 452.1 L2317.5 457.3 L2319.9 452.2 L2322.5 456.3 L2324.2 451.2 L2326.8 456.3 L2328.4 452.2 L2330.2 457.0 L2331.8 452.8 L2334.1 458.5 L2335.6 451.2 L2337.0 456.1 L2339.4 451.8 L2341.4 456.6 L2343.1 452.1 L2345.5 456.8 L2347.4 453.8 L2349.1 458.0 L2351.0 470.0 L2353.3 545.0 L2357.5 562.0 L2358.2 272.0 L2360.0 272.0 L2360.7 562.0 L2362.5 562.0 L2363.2 272.0 L2365.0 272.0 L2365.7 562.0 L2366.7 562.0 L2367.4 272.0 L2379.2 272.0 L2379.9 562.0 L2380.8 562.0 L2381.5 272.0 L2383.3 272.0 L2384.0 562.0 L2388.3 562.0 L2389.0 272.0 L2391.7 272.0 L2392.4 562.0 L2392.5 290.0 L2393.3 398.0 L2395.0 451.0 L2397.5 473.0 L2399.2 503.0 L2401.7 510.0 L2405.0 505.0 L2408.3 476.0 L2411.7 456.0 L2415.0 448.0 L2415.0 455.6 L2416.3 447.8 L2417.8 455.6 L2419.5 445.3 L2421.4 456.3 L2423.7 447.5 L2426.0 458.7 L2428.2 442.0 L2430.6 458.0 L2431.8 447.0 L2433.6 484.5 L2435.5 446.5 L2437.1 479.4 L2439.1 436.4 L2440.2 478.0 L2442.0 442.1 L2443.5 476.1 L2445.0 448.3 L2446.0 457.1 L2448.0 450.7 L2450.4 457.0 L2452.5 451.1 L2454.3 458.2 L2456.4 451.5 L2458.5 458.0 L2460.1 450.8 L2462.0 458.0 L2464.2 451.8 L2466.7 456.7 L2468.6 451.2 L2470.4 456.9 L2472.8 453.2 L2474.6 456.9 L2476.5 450.9 L2478.8 456.4 L2480.4 452.1 L2482.8 455.8 L2485.2 451.8 L2486.8 455.3 L2489.4 452.1 L2491.7 458.5 L2493.8 452.1 L2495.8 457.4 L2498.0 452.6 L2499.3 455.7 L2501.6 451.1 L2503.3 458.4 L2505.3 452.9 L2507.1 456.5 L2510.0 440.0 L2511.0 354.0 L2513.0 545.0 L2515.0 312.0 L2517.0 545.0 L2520.0 440.0 L2520.4 494.2 L2521.5 444.3 L2523.4 478.7 L2524.4 440.0 L2526.8 479.7 L2528.4 444.6 L2529.8 469.6 L2531.8 444.3 L2532.9 485.0 L2535.0 442.3 L2536.3 464.6 L2538.4 432.3 L2539.5 474.0" fill="none" stroke="#ff0000" stroke-width="1.0" stroke-linejoin="miter" stroke-miterlimit="2" shape-rendering="crispEdges"/><path d="M2006.6 297 L2006.6 537 M2012.8 297 L2012.8 537 M2015.0 297 L2015.0 537 M2016.1 297 L2016.1 537 M2049.5 297 L2049.5 537 M2051.7 297 L2051.7 537 M2057.0 297 L2057.0 537 M2059.5 297 L2059.5 537 M2062.0 297 L2062.0 537 M2064.5 297 L2064.5 537 M2087.8 297 L2087.8 537 M2089.5 297 L2089.5 537 M2093.7 297 L2093.7 537 M2095.3 297 L2095.3 537 M2097.8 297 L2097.8 537 M2100.0 297 L2100.0 537 M2102.0 297 L2102.0 537 M2104.0 297 L2104.0 537 M2105.7 297 L2105.7 537 M2107.8 297 L2107.8 537 M2119.5 297 L2119.5 537 M2121.2 297 L2121.2 537 M2123.7 297 L2123.7 537 M2126.2 297 L2126.2 537 M2128.7 297 L2128.7 537 M2131.7 297 L2131.7 537 M2133.7 297 L2133.7 537 M2136.2 297 L2136.2 537 M2138.7 297 L2138.7 537 M2142.0 297 L2142.0 537 M2143.7 297 L2143.7 537 M2150.3 297 L2150.3 537 M2154.5 297 L2154.5 537 M2157.0 297 L2157.0 537 M2159.5 297 L2159.5 537 M2162.0 297 L2162.0 537 M2164.5 297 L2164.5 537 M2180.3 297 L2180.3 537 M2196.7 297 L2196.7 537 M2357.8 297 L2357.8 537 M2360.3 297 L2360.3 537 M2362.8 297 L2362.8 537 M2365.3 297 L2365.3 537 M2367.0 297 L2367.0 537 M2379.5 297 L2379.5 537 M2381.2 297 L2381.2 537 M2383.7 297 L2383.7 537 M2388.7 297 L2388.7 537 M2392.0 297 L2392.0 537" fill="none" stroke="#ff0000" stroke-width="1.3"/>
<path d="M1366.0 422.5 L1449.9 422.5 L1449.9 423.7 L1533.7 423.7 L1533.7 425.0 L1617.6 425.0 L1617.6 426.2 L1701.4 426.2 L1701.4 427.4 L1785.3 427.4 L1785.3 428.7 L1869.1 428.7 L1869.1 429.9 L1953.0 429.9 L1953.0 431.1 L2036.9 431.1 L2036.9 432.3 L2120.7 432.3 L2120.7 433.6 L2204.6 433.6 L2204.6 434.8 L2288.4 434.8 L2288.4 436.0 L2372.3 436.0 L2372.3 437.3 L2456.1 437.3 L2456.1 438.5 L2540.0 438.5" fill="none" stroke="#ffa500" stroke-width="1.3" stroke-linejoin="miter" stroke-miterlimit="2" shape-rendering="crispEdges"/>
</g>
<rect x="1793.6" y="302" width="109.20000000000005" height="50" fill="rgba(0,0,0,0.45)"/>
<line x1="1392.5" y1="302" x2="1392.5" y2="532" stroke="rgba(150,150,150,0.2)" stroke-width="1"/>
<line x1="1438.5" y1="302" x2="1438.5" y2="532" stroke="rgba(150,150,150,0.095)" stroke-width="1"/>
<line x1="1485.5" y1="302" x2="1485.5" y2="532" stroke="rgba(150,150,150,0.095)" stroke-width="1"/>
<line x1="1532.5" y1="302" x2="1532.5" y2="532" stroke="rgba(150,150,150,0.095)" stroke-width="1"/>
<line x1="1578.5" y1="302" x2="1578.5" y2="532" stroke="rgba(150,150,150,0.095)" stroke-width="1"/>
<line x1="1625.5" y1="302" x2="1625.5" y2="532" stroke="rgba(150,150,150,0.2)" stroke-width="1"/>
<line x1="1672.5" y1="302" x2="1672.5" y2="532" stroke="rgba(150,150,150,0.095)" stroke-width="1"/>
<line x1="1718.5" y1="302" x2="1718.5" y2="532" stroke="rgba(150,150,150,0.095)" stroke-width="1"/>
<line x1="1765.5" y1="302" x2="1765.5" y2="532" stroke="rgba(150,150,150,0.095)" stroke-width="1"/>
<line x1="1812.5" y1="302" x2="1812.5" y2="532" stroke="rgba(150,150,150,0.095)" stroke-width="1"/>
<line x1="1859.5" y1="302" x2="1859.5" y2="532" stroke="rgba(150,150,150,0.2)" stroke-width="1"/>
<line x1="1905.5" y1="302" x2="1905.5" y2="532" stroke="rgba(150,150,150,0.095)" stroke-width="1"/>
<line x1="1952.5" y1="302" x2="1952.5" y2="532" stroke="rgba(150,150,150,0.095)" stroke-width="1"/>
<line x1="1999.5" y1="302" x2="1999.5" y2="532" stroke="rgba(150,150,150,0.095)" stroke-width="1"/>
<line x1="2045.5" y1="302" x2="2045.5" y2="532" stroke="rgba(150,150,150,0.095)" stroke-width="1"/>
<line x1="2092.5" y1="302" x2="2092.5" y2="532" stroke="rgba(150,150,150,0.2)" stroke-width="1"/>
<line x1="2139.5" y1="302" x2="2139.5" y2="532" stroke="rgba(150,150,150,0.095)" stroke-width="1"/>
<line x1="2185.5" y1="302" x2="2185.5" y2="532" stroke="rgba(150,150,150,0.095)" stroke-width="1"/>
<line x1="2232.5" y1="302" x2="2232.5" y2="532" stroke="rgba(150,150,150,0.095)" stroke-width="1"/>
<line x1="2279.5" y1="302" x2="2279.5" y2="532" stroke="rgba(150,150,150,0.095)" stroke-width="1"/>
<line x1="2325.5" y1="302" x2="2325.5" y2="532" stroke="rgba(150,150,150,0.2)" stroke-width="1"/>
<line x1="2372.5" y1="302" x2="2372.5" y2="532" stroke="rgba(150,150,150,0.095)" stroke-width="1"/>
<line x1="2419.5" y1="302" x2="2419.5" y2="532" stroke="rgba(150,150,150,0.095)" stroke-width="1"/>
<line x1="2465.5" y1="302" x2="2465.5" y2="532" stroke="rgba(150,150,150,0.095)" stroke-width="1"/>
<line x1="2512.5" y1="302" x2="2512.5" y2="532" stroke="rgba(150,150,150,0.095)" stroke-width="1"/>
<line x1="1367" y1="314.5" x2="2540" y2="314.5" stroke="rgba(150,150,150,0.2)" stroke-width="1"/>
<line x1="1367" y1="346.5" x2="2540" y2="346.5" stroke="rgba(150,150,150,0.2)" stroke-width="1"/>
<line x1="1367" y1="378.5" x2="2540" y2="378.5" stroke="rgba(150,150,150,0.2)" stroke-width="1"/>
<line x1="1367" y1="410.5" x2="2540" y2="410.5" stroke="rgba(150,150,150,0.2)" stroke-width="1"/>
<line x1="1367" y1="441.5" x2="2540" y2="441.5" stroke="rgba(150,150,150,0.2)" stroke-width="1"/>
<line x1="1367" y1="473.5" x2="2540" y2="473.5" stroke="rgba(150,150,150,0.2)" stroke-width="1"/>
<line x1="1367" y1="505.5" x2="2540" y2="505.5" stroke="rgba(150,150,150,0.2)" stroke-width="1"/>
<line x1="1365.5" y1="302" x2="1365.5" y2="533" stroke="#969696" stroke-width="1"/>
<line x1="1365" y1="532.5" x2="2540" y2="532.5" stroke="#969696" stroke-width="1"/>
<clipPath id="clxR2"><rect x="1366" y="532" width="1215" height="30"/></clipPath>
<g clip-path="url(#clxR2)">
<text x="1392.47" y="549.00" font-size="12.8" fill="#ffffff" text-anchor="middle" textLength="43.70" lengthAdjust="spacingAndGlyphs">-750ms</text>
<text x="1625.85" y="549.00" font-size="12.8" fill="#ffffff" text-anchor="middle" textLength="43.70" lengthAdjust="spacingAndGlyphs">-500ms</text>
<text x="1859.22" y="549.00" font-size="12.8" fill="#ffffff" text-anchor="middle" textLength="43.70" lengthAdjust="spacingAndGlyphs">-250ms</text>
<text x="2092.60" y="549.00" font-size="12.8" fill="#ffffff" text-anchor="middle" textLength="7.50" lengthAdjust="spacingAndGlyphs">0</text>
<text x="2325.97" y="549.00" font-size="12.8" fill="#ffffff" text-anchor="middle" textLength="39.50" lengthAdjust="spacingAndGlyphs">250ms</text>
</g>
<clipPath id="clyR2"><rect x="1285" y="301" width="80" height="232"/></clipPath>
<g clip-path="url(#clyR2)">
<text x="1360.00" y="318.90" font-size="12.8" fill="#ffffff" text-anchor="end" textLength="7.40" lengthAdjust="spacingAndGlyphs">3</text>
<text x="1360.00" y="350.90" font-size="12.8" fill="#ffffff" text-anchor="end" textLength="7.40" lengthAdjust="spacingAndGlyphs">2</text>
<text x="1360.00" y="382.70" font-size="12.8" fill="#ffffff" text-anchor="end" textLength="7.40" lengthAdjust="spacingAndGlyphs">1</text>
<text x="1360.00" y="414.40" font-size="12.8" fill="#ffffff" text-anchor="end" textLength="7.40" lengthAdjust="spacingAndGlyphs">0</text>
<text x="1360.00" y="445.90" font-size="12.8" fill="#ffffff" text-anchor="end" textLength="11.84" lengthAdjust="spacingAndGlyphs">-1</text>
<text x="1360.00" y="477.70" font-size="12.8" fill="#ffffff" text-anchor="end" textLength="11.84" lengthAdjust="spacingAndGlyphs">-2</text>
<text x="1360.00" y="509.40" font-size="12.8" fill="#ffffff" text-anchor="end" textLength="11.84" lengthAdjust="spacingAndGlyphs">-3</text>
</g>
<text x="0" y="0" font-size="12.8" fill="#ffffff" text-anchor="middle" textLength="40" lengthAdjust="spacingAndGlyphs" transform="translate(1340.5,417.0) rotate(-90)">counts</text>
<line x1="1794.6" y1="303" x2="1794.6" y2="351" stroke="#5e5e5e" stroke-width="2" stroke-dasharray="9.5 2.5"/>
<line x1="1794.6" y1="352" x2="1794.6" y2="532" stroke="#ffffff" stroke-width="2" stroke-dasharray="9.5 2.5"/>
<line x1="1897.8" y1="303" x2="1897.8" y2="351" stroke="#5e5e5e" stroke-width="2" stroke-dasharray="9.5 2.5"/>
<line x1="1897.8" y1="352" x2="1897.8" y2="532" stroke="#ffffff" stroke-width="2" stroke-dasharray="9.5 2.5"/>
<text x="1793.40" y="332.50" font-size="12.8" fill="#ffffff" textLength="22.00" lengthAdjust="spacingAndGlyphs">ΔT=</text>
<text x="1819.30" y="321.80" font-size="12.8" fill="#ffffff" textLength="79.60" lengthAdjust="spacingAndGlyphs">110ms,299μs</text>
<text x="1819.30" y="342.00" font-size="12.8" fill="#ffffff" textLength="58.80" lengthAdjust="spacingAndGlyphs">9.0663 Hz</text>
<text x="1798.90" y="525.00" font-size="12.8" fill="#ffffff" textLength="98.40" lengthAdjust="spacingAndGlyphs">T2=-319ms,13μs</text>
<text x="1902.40" y="525.00" font-size="12.8" fill="#ffffff" textLength="105.80" lengthAdjust="spacingAndGlyphs">T1=-208ms,715μs</text>
<rect x="1374.5" y="570.5" width="248" height="87" fill="rgba(100,100,100,0.14)" stroke="rgba(255,255,255,0.33)" stroke-width="1"/>
<rect x="1383" y="579" width="19" height="19" fill="#800000"/>
<text x="1409.20" y="594.00" font-size="12.8" fill="#ffffff" textLength="186.00" lengthAdjust="spacingAndGlyphs">H1:ASC-MICH_Y_OUT_DQ*0.05</text>
<rect x="1383" y="604" width="19" height="19" fill="#ffa500"/>
<text x="1409.20" y="619.00" font-size="12.8" fill="#ffffff" textLength="189.70" lengthAdjust="spacingAndGlyphs">H1:ASC-SRC1_Y_OUT_DQ*0.002</text>
<rect x="1383" y="629" width="19" height="19" fill="#ff0000"/>
<text x="1409.20" y="644.00" font-size="12.8" fill="#ffffff" textLength="202.80" lengthAdjust="spacingAndGlyphs">H1:ASC-DHARD_Y_OUT_DQ*0.001</text>
<clipPath id="cpR3"><rect x="1365" y="560" width="1175" height="229"/></clipPath>
<g clip-path="url(#cpR3)">
<path d="M1366.0 700.0 L1367.0 700.0 L1368.1 700.0 L1369.2 700.0 L1370.3 700.0 L1371.4 700.0 L1372.6 700.0 L1373.9 700.0 L1375.1 700.0 L1376.4 699.9 L1377.8 699.9 L1379.1 699.9 L1380.5 699.9 L1381.9 699.9 L1383.4 699.9 L1384.8 699.9 L1386.4 699.9 L1387.9 699.9 L1389.5 699.9 L1391.1 699.9 L1392.7 699.9 L1394.3 699.9 L1396.0 699.9 L1397.7 699.8 L1399.4 699.8 L1401.2 699.8 L1402.9 699.8 L1404.7 699.8 L1406.6 699.8 L1408.4 699.8 L1410.3 699.8 L1412.1 699.8 L1414.1 699.8 L1416.0 699.8 L1417.9 699.7 L1419.9 699.7 L1421.9 699.7 L1423.9 699.7 L1425.9 699.7 L1427.9 699.7 L1430.0 699.7 L1432.1 699.7 L1434.2 699.7 L1436.3 699.6 L1438.4 699.6 L1440.5 699.6 L1442.7 699.6 L1444.8 699.6 L1447.0 699.6 L1449.2 699.6 L1451.4 699.6 L1453.6 699.6 L1455.8 699.6 L1458.1 699.5 L1460.3 699.5 L1462.6 699.5 L1464.8 699.5 L1467.1 699.5 L1469.4 699.5 L1471.7 699.5 L1474.0 699.5 L1476.3 699.5 L1478.6 699.4 L1480.9 699.4 L1483.2 699.4 L1485.5 699.4 L1487.9 699.4 L1490.2 699.4 L1492.5 699.4 L1494.9 699.4 L1497.2 699.3 L1499.5 699.3 L1501.9 699.3 L1504.2 699.3 L1506.5 699.3 L1508.9 699.3 L1511.2 699.3 L1513.6 699.3 L1515.9 699.3 L1518.2 699.2 L1520.6 699.2 L1522.9 699.2 L1525.2 699.2 L1527.5 699.2 L1529.8 699.2 L1532.1 699.2 L1534.4 699.2 L1536.7 699.2 L1539.0 699.1 L1541.3 699.1 L1543.6 699.1 L1545.8 699.1 L1548.1 699.1 L1550.3 699.1 L1552.6 699.1 L1554.8 699.1 L1557.0 699.1 L1559.2 699.1 L1561.4 699.0 L1563.6 699.0 L1565.7 699.0 L1567.9 699.0 L1570.0 699.0 L1571.9 699.0 L1573.8 699.0 L1575.7 699.0 L1577.6 699.0 L1579.5 699.0 L1581.5 698.9 L1583.4 698.9 L1585.4 698.9 L1587.3 698.9 L1589.3 698.9 L1591.3 698.9 L1593.3 698.9 L1595.2 698.9 L1597.2 698.9 L1599.2 698.9 L1601.2 698.9 L1603.3 698.9 L1605.3 698.8 L1607.3 698.8 L1609.3 698.8 L1611.4 698.8 L1613.4 698.8 L1615.5 698.8 L1617.5 698.8 L1619.6 698.8 L1621.6 698.8 L1623.7 698.8 L1625.8 698.8 L1627.8 698.7 L1629.9 698.7 L1632.0 698.7 L1634.1 698.7 L1636.2 698.7 L1638.2 698.7 L1640.3 698.7 L1642.4 698.7 L1644.5 698.7 L1646.6 698.7 L1648.7 698.7 L1650.8 698.7 L1652.9 698.6 L1655.1 698.6 L1657.2 698.6 L1659.3 698.6 L1661.4 698.6 L1663.5 698.6 L1665.6 698.6 L1667.7 698.6 L1669.8 698.6 L1671.9 698.6 L1674.0 698.6 L1676.2 698.5 L1678.3 698.5 L1680.4 698.5 L1682.5 698.5 L1684.6 698.5 L1686.7 698.5 L1688.8 698.5 L1690.9 698.5 L1693.0 698.5 L1695.1 698.5 L1697.2 698.5 L1699.3 698.5 L1701.4 698.4 L1703.5 698.4 L1705.6 698.4 L1707.6 698.4 L1709.7 698.4 L1711.8 698.4 L1713.9 698.4 L1715.9 698.4 L1718.0 698.4 L1720.1 698.4 L1722.1 698.4 L1724.2 698.3 L1726.2 698.3 L1728.2 698.3 L1730.3 698.3 L1732.3 698.3 L1734.3 698.3 L1736.3 698.3 L1738.3 698.3 L1740.3 698.3 L1742.3 698.3 L1744.3 698.3 L1746.3 698.3 L1748.3 698.2 L1750.3 698.2 L1752.2 698.2 L1754.2 698.2 L1756.1 698.2 L1758.1 698.2 L1760.0 698.2 L1761.9 698.2 L1763.8 698.2 L1765.7 698.2 L1767.6 698.2 L1769.5 698.1 L1771.4 698.1 L1773.3 698.1 L1775.1 698.1 L1777.0 698.1 L1778.8 698.1 L1780.6 698.1 L1782.4 698.1 L1784.3 698.1 L1786.0 698.1 L1787.8 698.1 L1789.6 698.1 L1791.4 698.0 L1793.1 698.0 L1794.9 698.0 L1796.6 698.0 L1798.3 698.0 L1800.0 698.0 L1802.4 698.0 L1804.9 698.0 L1807.3 698.0 L1809.7 698.0 L1812.1 697.9 L1814.5 697.9 L1816.9 697.9 L1819.3 697.9 L1821.6 697.9 L1824.0 697.9 L1826.4 697.9 L1828.7 697.9 L1831.1 697.8 L1833.4 697.8 L1835.7 697.8 L1838.0 697.8 L1840.3 697.8 L1842.6 697.8 L1844.9 697.8 L1847.2 697.8 L1849.5 697.7 L1851.7 697.7 L1854.0 697.7 L1856.2 697.7 L1858.4 697.7 L1860.6 697.7 L1862.8 697.7 L1865.0 697.6 L1867.2 697.6 L1869.4 697.6 L1871.5 697.6 L1873.7 697.6 L1875.8 697.6 L1878.0 697.6 L1880.1 697.6 L1882.2 697.5 L1884.3 697.5 L1886.3 697.5 L1888.4 697.5 L1890.4 697.5 L1892.5 697.5 L1894.5 697.5 L1896.5 697.5 L1898.5 697.5 L1900.5 697.4 L1902.5 697.4 L1904.4 697.4 L1906.3 697.4 L1908.3 697.4 L1910.2 697.4 L1912.1 697.4 L1914.0 697.4 L1915.8 697.3 L1917.7 697.3 L1919.5 697.3 L1921.3 697.3 L1923.1 697.3 L1924.9 697.3 L1926.7 697.3 L1928.5 697.2 L1930.2 697.2 L1931.9 697.2 L1933.6 697.2 L1935.3 697.2 L1937.0 697.2 L1938.7 697.2 L1940.3 697.2 L1941.9 697.1 L1943.5 697.1 L1945.1 697.1 L1946.7 697.1 L1948.2 697.1 L1949.8 697.1 L1951.3 697.1 L1952.8 697.1 L1954.3 697.0 L1955.7 697.0 L1957.2 697.0 L1958.6 697.0 L1960.0 697.0 L1963.5 697.0 L1966.9 696.9 L1970.1 696.9 L1973.2 696.8 L1976.2 696.8 L1979.1 696.7 L1981.8 696.7 L1984.4 696.6 L1986.9 696.6 L1989.3 696.5 L1991.6 696.4 L1993.8 696.4 L1995.9 696.3 L1997.9 696.3 L1999.8 696.2 L2001.7 696.2 L2003.4 696.1 L2005.1 696.1 L2006.8 696.0 L2008.4 696.0 L2009.9 696.0 L2011.3 695.9 L2012.8 695.9 L2014.1 695.9 L2015.5 695.9 L2016.8 695.9 L2018.1 695.9 L2019.3 695.9 L2020.6 695.9 L2021.8 696.0 L2023.0 696.0 L2027.9 696.5 L2030.5 697.3 L2031.7 698.2 L2032.3 699.1 L2033.1 699.7 L2035.0 700.0 L2036.7 700.0 L2038.6 699.8 L2040.7 699.6 L2042.9 699.3 L2045.1 698.9 L2047.3 698.4 L2049.5 697.9 L2051.5 697.3 L2053.4 696.7 L2055.0 696.0 L2057.6 694.7 L2059.6 693.4 L2061.4 691.7 L2063.1 689.4 L2065.0 686.0 L2067.3 681.7 L2069.8 676.6 L2072.3 670.6 L2074.7 663.8 L2076.7 656.0 L2079.4 640.3 L2081.5 622.0 L2083.3 602.7 L2085.6 568.0 L2087.0 540.0 M2237.0 800.0 L2238.2 793.8 L2239.8 785.7 L2241.6 776.0 L2243.7 765.1 L2246.0 753.5 L2248.3 741.4 L2250.8 729.2 L2253.2 717.3 L2255.6 706.1 L2257.9 695.8 L2260.0 687.0 L2262.3 678.3 L2264.5 669.8 L2266.8 661.7 L2269.1 654.0 L2271.4 646.9 L2273.6 640.5 L2275.7 634.8 L2277.8 630.1 L2279.8 626.3 L2281.7 623.6 L2284.2 622.0 L2286.4 622.7 L2288.5 625.4 L2290.5 629.4 L2292.4 634.4 L2294.4 639.8 L2296.5 645.0 L2298.6 650.5 L2300.7 656.8 L2302.7 663.7 L2304.8 671.1 L2307.0 678.7 L2309.4 686.4 L2312.0 694.0 L2313.8 699.1 L2315.7 704.8 L2317.7 710.8 L2319.8 717.1 L2322.0 723.3 L2324.2 729.4 L2326.3 735.0 L2328.5 740.0 L2330.6 744.2 L2332.6 747.4 L2334.6 749.4 L2336.9 750.9 L2339.0 752.1 L2341.1 752.6 L2343.1 752.1 L2345.1 750.2 L2347.1 746.7 L2349.2 741.3 L2351.4 733.6 L2353.8 723.4 L2355.7 713.0 L2357.8 699.8 L2360.0 684.3 L2362.4 667.1 L2364.7 648.9 L2367.1 630.1 L2369.4 611.4 L2371.5 593.4 L2373.5 576.6 L2375.3 561.8 L2376.8 549.4 L2378.0 540.0 M2372.0 540.0 L2373.6 570.6 L2375.9 613.8 L2378.3 652.7 L2380.6 684.7 L2382.9 712.4 L2385.0 727.7 L2387.6 716.6 L2390.0 690.0 L2392.5 661.6 L2395.4 641.8 L2397.2 644.3 L2399.1 653.1 L2401.3 664.1 L2404.0 673.0 L2405.8 676.5 L2407.8 679.7 L2410.0 682.6 L2412.2 685.3 L2414.5 688.1 L2416.7 690.9 L2418.9 694.0 L2420.9 697.6 L2422.7 701.8 L2424.5 706.1 L2426.4 710.3 L2428.5 713.9 L2430.8 716.6 L2433.6 718.0 L2435.3 718.1 L2437.1 717.8 L2439.1 717.1 L2441.1 716.1 L2443.3 714.8 L2445.5 713.4 L2447.7 711.8 L2450.0 710.1 L2452.3 708.5 L2454.6 706.8 L2456.9 705.2 L2459.2 703.8 L2461.4 702.6 L2463.5 701.5 L2465.6 700.4 L2467.8 699.3 L2469.9 698.1 L2472.1 696.9 L2474.3 695.7 L2476.5 694.6 L2478.7 693.5 L2480.9 692.5 L2483.0 691.6 L2485.1 690.9 L2487.1 690.2 L2489.1 689.8 L2491.0 689.5 L2493.3 689.4 L2495.5 689.6 L2497.6 690.1 L2499.6 690.7 L2501.6 691.5 L2503.5 692.5 L2505.4 693.5 L2507.4 694.5 L2509.3 695.5 L2511.4 696.5 L2513.5 697.4 L2515.6 698.2 L2517.8 699.1 L2520.2 700.1 L2522.6 701.1 L2525.0 702.1 L2527.5 703.1 L2529.8 704.1 L2532.0 705.0 L2534.0 705.9 L2535.8 706.6 L2537.4 707.3 L2538.6 707.8" fill="none" stroke="#800000" stroke-width="1.1" stroke-linejoin="miter" stroke-miterlimit="2" shape-rendering="crispEdges"/>
<path d="M1366.0 699.6 L1367.4 703.2 L1369.2 702.9 L1370.7 703.3 L1372.0 702.0 L1374.1 704.4 L1376.2 710.0 L1377.4 708.1 L1379.1 707.6 L1381.0 704.9 L1382.5 711.2 L1384.5 709.8 L1386.4 711.5 L1387.9 700.0 L1389.8 699.3 L1391.6 709.9 L1393.0 698.9 L1394.4 701.1 L1396.3 705.7 L1398.0 709.0 L1399.7 708.1 L1401.7 704.3 L1403.1 709.9 L1404.7 706.3 L1406.4 704.9 L1408.4 702.4 L1409.6 700.2 L1411.4 702.2 L1413.1 702.9 L1414.4 705.8 L1415.7 707.2 L1417.7 702.3 L1418.9 705.7 L1420.8 704.5 L1422.3 706.0 L1423.6 705.8 L1425.0 706.5 L1426.6 707.5 L1428.2 702.1 L1430.2 703.2 L1431.6 703.8 L1432.7 706.5 L1434.4 699.6 L1436.1 706.9 L1437.7 703.2 L1439.6 702.7 L1441.0 701.5 L1442.3 702.3 L1444.1 704.8 L1445.7 701.7 L1447.3 706.7 L1449.2 705.5 L1451.1 705.7 L1452.9 709.4 L1454.4 709.3 L1455.6 703.6 L1457.6 708.4 L1458.9 706.3 L1460.8 706.1 L1462.5 702.1 L1464.1 704.1 L1466.0 707.6 L1467.5 710.6 L1469.4 706.3 L1470.5 705.0 L1472.0 702.5 L1473.3 702.0 L1474.7 704.5 L1476.1 705.8 L1478.2 707.9 L1479.4 704.7 L1480.9 708.1 L1482.8 707.8 L1484.4 708.8 L1486.3 711.3 L1488.0 701.1 L1489.8 704.8 L1491.7 701.8 L1493.5 703.8 L1494.8 708.5 L1496.1 702.5 L1497.6 704.6 L1499.6 707.4 L1501.0 706.7 L1502.8 703.2 L1504.5 710.3 L1505.7 708.7 L1507.5 700.0 L1508.9 705.4 L1510.4 711.0 L1511.6 700.7 L1513.0 707.9 L1514.7 709.8 L1516.2 707.6 L1517.6 711.2 L1519.0 701.8 L1520.4 709.5 L1522.2 700.8 L1523.7 705.7 L1525.7 709.7 L1527.3 705.0 L1529.1 703.7 L1530.7 698.9 L1532.0 704.3 L1534.0 707.1 L1535.5 702.7 L1537.1 706.4 L1538.7 704.8 L1540.0 706.5 L1541.3 705.6 L1543.0 705.0 L1544.3 707.6 L1546.2 709.2 L1548.2 706.6 L1549.6 700.5 L1551.4 699.8 L1552.9 701.3 L1554.5 704.6 L1555.6 705.5 L1556.9 703.7 L1558.6 705.6 L1559.8 704.9 L1561.1 706.8 L1563.1 710.6 L1565.1 707.2 L1566.6 706.3 L1568.0 705.0 L1568.0 702.1 L1569.6 689.5 L1571.0 712.3 L1572.6 673.4 L1574.2 726.9 L1575.3 668.0 L1576.7 735.8 L1578.4 645.7 L1579.5 765.5 L1581.1 629.9 L1582.1 763.2 L1583.1 628.8 L1584.3 768.3 L1585.9 637.0 L1587.3 769.9 L1589.0 631.6 L1590.1 749.2 L1591.5 638.0 L1592.5 739.9 L1594.0 658.0 L1595.2 734.0 L1596.9 679.5 L1598.7 716.5 L1600.3 671.2 L1601.4 731.4 L1602.6 655.0 L1603.9 785.0 L1605.1 652.3 L1606.3 745.1 L1607.3 641.3 L1608.5 753.7 L1609.9 565.1 L1610.9 771.3 L1612.3 634.2 L1613.7 800.7 L1615.2 637.6 L1616.5 750.4 L1617.7 641.9 L1619.4 758.4 L1620.7 654.1 L1622.4 740.8 L1623.9 668.8 L1625.3 726.6 L1626.7 680.2 L1628.3 715.7 L1630.1 672.5 L1631.4 732.2 L1632.4 655.3 L1634.1 753.7 L1635.6 635.4 L1636.9 780.3 L1638.4 610.6 L1640.1 790.4 L1641.2 612.2 L1642.7 782.9 L1644.1 618.0 L1645.4 788.6 L1647.2 611.6 L1648.5 843.4 L1649.8 577.0 L1650.9 752.6 L1652.4 650.8 L1653.7 736.0 L1654.8 665.8 L1656.5 717.1 L1657.8 688.6 L1659.4 714.5 L1661.1 679.0 L1662.6 736.3 L1664.1 669.1 L1665.7 733.5 L1667.0 654.1 L1668.1 742.4 L1669.2 655.2 L1670.7 762.6 L1671.9 643.3 L1673.7 754.1 L1675.2 647.3 L1676.6 742.8 L1677.7 645.4 L1679.4 748.3 L1681.1 659.4 L1682.8 737.6 L1684.2 666.8 L1686.0 729.7 L1687.5 675.0 L1688.9 734.2 L1690.1 672.8 L1691.3 710.3 L1692.9 681.2 L1694.2 722.3 L1695.4 665.8 L1696.6 728.0 L1698.3 661.2 L1700.1 739.4 L1701.3 644.8 L1703.1 751.1 L1704.5 630.1 L1705.7 755.4 L1706.9 644.3 L1708.3 751.8 L1709.5 639.0 L1711.2 762.9 L1712.5 647.3 L1713.6 739.3 L1715.1 655.9 L1716.5 743.5 L1717.7 667.4 L1719.4 721.5 L1720.7 672.7 L1721.9 717.3 L1723.0 685.0 L1724.8 716.6 L1726.6 667.3 L1727.9 732.2 L1729.2 651.7 L1730.2 752.2 L1731.9 638.7 L1733.6 767.9 L1735.1 630.0 L1736.1 771.0 L1737.2 608.0 L1738.5 768.6 L1740.0 606.8 L1741.6 774.3 L1742.8 565.5 L1743.9 767.7 L1745.1 590.4 L1746.5 785.5 L1747.6 619.3 L1749.0 769.8 L1750.2 640.5 L1751.7 757.0 L1753.2 657.0 L1754.4 732.2 L1756.2 670.5 L1757.8 717.3 L1759.4 681.7 L1760.5 717.0 L1762.2 670.0 L1763.8 747.1 L1765.0 623.8 L1766.6 751.0 L1767.8 635.2 L1769.2 771.2 L1770.8 623.4 L1772.5 783.7 L1774.1 623.9 L1775.2 773.9 L1776.6 634.4 L1778.1 763.2 L1779.3 636.9 L1780.7 757.7 L1782.1 627.7 L1783.4 759.8 L1785.0 660.2 L1786.8 731.1 L1787.9 673.2 L1789.1 716.2 L1790.2 687.9 L1791.9 712.7 L1793.2 679.6 L1795.0 724.3 L1796.5 667.4 L1797.8 733.8 L1799.6 663.5 L1801.2 739.6 L1802.5 660.3 L1804.2 734.0 L1805.7 632.4 L1807.5 734.8 L1809.1 660.4 L1810.3 740.8 L1811.9 663.5 L1813.2 727.2 L1814.3 667.4 L1815.5 724.3 L1817.2 671.2 L1818.6 719.0 L1819.9 680.5 L1821.0 710.6 L1822.3 680.4 L1824.0 706.6 L1825.6 683.7 L1826.8 719.6 L1828.4 677.7 L1829.6 726.7 L1831.2 664.9 L1832.4 730.2 L1833.9 667.6 L1835.4 730.0 L1836.7 663.6 L1838.1 736.9 L1839.9 667.9 L1841.2 731.0 L1842.5 667.4 L1844.0 726.0 L1845.8 674.1 L1847.6 713.6 L1849.3 685.8 L1851.1 718.0 L1852.5 666.4 L1853.7 727.9 L1855.2 651.4 L1856.6 744.4 L1857.9 641.5 L1859.6 766.0 L1861.4 622.6 L1863.1 786.4 L1864.6 611.0 L1866.3 761.0 L1867.5 630.9 L1868.7 765.6 L1869.9 628.5 L1871.7 752.4 L1873.3 652.7 L1875.1 719.2 L1876.7 686.9 L1878.0 711.8 L1879.3 677.3 L1880.5 723.2 L1881.7 671.7 L1883.3 725.4 L1884.9 657.2 L1886.0 735.4 L1887.6 652.7 L1888.9 750.9 L1890.5 618.8 L1891.5 743.2 L1892.7 656.1 L1894.5 805.5 L1896.2 643.1 L1897.4 746.9 L1898.8 651.6 L1900.0 742.5 L1901.1 664.6 L1902.1 733.0 L1903.6 671.0 L1905.3 716.8 L1906.8 687.3 L1908.3 713.9 L1909.4 676.2 L1911.0 726.7 L1912.6 664.1 L1913.7 744.2 L1915.3 654.9 L1916.7 753.1 L1917.9 633.7 L1919.1 752.1 L1920.1 632.3 L1921.5 754.1 L1922.6 628.4 L1924.3 762.6 L1925.8 642.6 L1927.0 759.7 L1928.4 640.7 L1929.9 742.2 L1931.4 667.8 L1932.8 720.7 L1934.6 682.6 L1935.8 715.4 L1936.9 668.2 L1938.3 743.9 L1939.9 647.5 L1941.3 762.1 L1942.5 589.0 L1943.9 769.4 L1945.1 623.5 L1946.9 795.0 L1948.7 617.8 L1949.7 800.9 L1951.4 607.0 L1953.2 783.2 L1954.7 635.4 L1956.0 757.4 L1957.2 657.2 L1958.6 724.4 L1959.6 674.2 L1961.1 709.6 L1962.8 681.4 L1964.6 729.0 L1966.1 668.4 L1967.5 739.4 L1968.9 657.5 L1969.9 741.1 L1971.7 651.7 L1972.8 750.7 L1974.4 638.9 L1976.1 742.5 L1977.8 645.7 L1979.5 737.9 L1981.3 660.4 L1982.8 763.4 L1984.1 667.4 L1985.9 718.6 L1985.0 687.7 L1990.0 715.0 L1994.0 745.0 L1996.7 764.0 L1998.0 800.0 L2006.3 819.0 L2007.0 530.0 L2011.3 530.0 L2012.0 819.0 L2019.0 800.0 L2023.3 714.0 L2026.7 659.0 L2028.0 680.0 L2030.0 660.0 L2032.0 675.0 L2036.0 685.0 L2041.7 692.7 L2044.2 819.0 L2044.9 530.0 L2050.3 530.0 L2051.0 819.0 L2053.7 819.0 L2054.4 530.0 L2056.7 530.0 L2057.4 819.0 L2059.2 819.0 L2059.9 530.0 L2061.7 774.0 L2063.4 667.8 L2065.4 732.0 L2067.5 649.4 L2069.2 749.4 L2070.3 663.9 L2071.9 730.2 L2073.8 671.3 L2074.7 788.6 L2076.6 667.6 L2078.5 732.0 L2080.7 683.9 L2081.7 752.2 L2083.5 659.8 L2085.0 764.9 L2086.5 658.2 L2087.6 747.6 L2089.3 650.0 L2093.0 530.0 L2093.7 819.0 L2095.0 819.0 L2095.7 530.0 L2097.5 530.0 L2098.2 819.0 L2105.0 819.0 L2105.7 530.0 L2107.5 530.0 L2108.2 819.0 L2110.0 819.0 L2110.7 530.0 L2112.5 530.0 L2113.2 819.0 L2119.2 819.0 L2119.9 530.0 L2120.8 530.0 L2121.5 819.0 L2123.3 819.0 L2124.0 530.0 L2125.8 530.0 L2126.5 819.0 L2128.3 819.0 L2129.0 530.0 L2130.8 530.0 L2131.5 819.0 L2133.3 819.0 L2134.0 530.0 L2140.8 530.0 L2141.5 819.0 L2143.0 819.0 L2143.7 530.0 L2145.0 530.0 L2145.7 819.0 L2147.5 819.0 L2148.2 530.0 L2150.0 530.0 L2150.7 819.0 L2152.5 819.0 L2153.2 530.0 L2157.5 530.0 L2158.2 819.0 L2160.0 819.0 L2160.7 530.0 L2162.5 530.0 L2163.2 819.0 L2165.0 819.0 L2165.7 530.0 L2167.5 530.0 L2168.2 819.0 L2175.0 819.0 L2175.7 530.0 L2180.8 530.0 L2181.5 819.0 L2183.3 819.0 L2184.0 530.0 L2185.8 530.0 L2186.5 819.0 L2191.7 819.0 L2192.4 530.0 L2196.7 530.0 L2197.4 819.0 L2197.5 819.0 L2198.2 530.0 L2201.3 530.0 L2202.0 819.0 L2204.2 819.0 L2204.9 530.0 L2208.0 530.0 L2208.7 819.0 L2210.8 819.0 L2211.5 530.0 L2212.2 530.0 L2212.9 819.0 L2212.5 742.9 L2214.5 671.7 L2216.2 738.8 L2217.5 652.3 L2218.6 731.9 L2220.7 674.5 L2222.9 752.5 L2224.3 656.4 L2225.4 730.9 L2227.3 658.6 L2228.4 728.0 L2230.0 641.2 L2231.3 729.2 L2233.3 637.5 L2235.4 726.5 L2237.0 611.6 L2238.3 720.1 L2239.9 646.0 L2240.9 733.1 L2242.1 624.3 L2243.9 716.1 L2245.1 649.1 L2246.2 729.4 L2247.5 635.3 L2252.0 740.0 L2254.0 795.0 L2258.0 730.0 L2261.7 692.7 L2261.7 706.5 L2263.1 694.8 L2265.3 703.7 L2267.0 697.0 L2268.3 706.3 L2270.4 695.6 L2271.4 707.4 L2272.6 694.8 L2273.3 741.1 L2275.4 669.7 L2277.1 754.2 L2279.3 665.5 L2281.2 759.9 L2282.3 621.0 L2283.8 789.6 L2285.8 641.8 L2287.5 764.0 L2289.0 679.4 L2290.2 775.0 L2291.6 618.2 L2293.0 752.4 L2294.6 653.2 L2296.3 747.2 L2298.6 659.4 L2300.4 767.1 L2302.7 670.0 L2304.2 724.7 L2306.5 654.0 L2307.8 754.4 L2308.3 709.8 L2310.4 704.4 L2312.7 709.3 L2314.8 703.1 L2316.6 707.5 L2319.1 705.4 L2320.5 709.1 L2322.2 705.3 L2323.4 709.7 L2324.7 705.0 L2325.8 708.7 L2328.4 703.3 L2329.8 708.9 L2331.7 704.4 L2332.9 709.9 L2334.2 702.2 L2336.5 707.2 L2337.7 703.3 L2339.1 707.6 L2340.8 703.8 L2342.1 707.2 L2344.1 704.6 L2346.2 707.9 L2348.7 704.9 L2352.0 540.0 L2352.5 530.0 L2353.2 819.0 L2357.5 819.0 L2358.2 530.0 L2361.7 530.0 L2362.4 819.0 L2365.0 819.0 L2365.7 530.0 L2369.2 530.0 L2369.9 819.0 L2372.5 819.0 L2373.2 530.0 L2374.2 530.0 L2374.9 819.0 L2375.0 736.5 L2377.1 643.5 L2378.2 773.0 L2380.2 674.7 L2381.5 773.8 L2382.6 656.1 L2383.8 749.4 L2386.1 605.4 L2387.6 742.2 L2389.7 634.9 L2391.4 758.0 L2392.9 649.8 L2394.1 734.7 L2396.2 647.8 L2398.4 744.7 L2400.3 653.4 L2402.2 811.2 L2403.0 718.7 L2404.8 701.5 L2407.0 712.4 L2409.1 700.5 L2410.2 714.8 L2411.8 702.5 L2412.9 716.4 L2415.0 703.6 L2416.2 715.3 L2417.2 696.5 L2418.9 718.8 L2420.6 698.2 L2422.0 719.4 L2423.6 700.4 L2425.3 717.3 L2426.4 698.4 L2428.4 718.0 L2430.0 701.6 L2432.2 718.6 L2433.6 725.3 L2435.2 690.0 L2437.2 733.2 L2439.1 686.1 L2441.1 738.1 L2442.8 677.1 L2444.8 731.1 L2446.0 688.1 L2447.5 709.8 L2448.9 704.4 L2450.9 709.6 L2452.5 704.5 L2454.5 710.1 L2457.1 705.7 L2459.6 709.7 L2462.2 704.8 L2463.5 711.4 L2465.9 704.4 L2468.5 711.2 L2470.8 706.5 L2472.7 709.7 L2474.0 704.0 L2476.7 710.1 L2478.2 704.8 L2480.3 710.7 L2481.6 703.8 L2483.2 709.5 L2485.4 704.5 L2487.3 709.0 L2488.6 707.3 L2490.1 710.7 L2492.1 705.7 L2493.3 710.4 L2494.9 704.7 L2496.7 709.7 L2498.7 705.4 L2500.5 709.6 L2502.0 706.4 L2504.6 709.7 L2506.3 706.4 L2508.5 711.5 L2510.0 733.1 L2511.2 690.0 L2512.9 733.1 L2513.9 675.6 L2514.9 733.7 L2516.6 679.8 L2518.7 741.2 L2520.4 717.0 L2521.6 697.8 L2522.6 712.3 L2524.3 698.5 L2525.8 720.0 L2527.7 703.7 L2529.8 719.5 L2530.7 696.2 L2531.9 718.0 L2533.3 696.7 L2534.9 720.0 L2536.8 698.5 L2538.6 714.7" fill="none" stroke="#ff0000" stroke-width="1.0" stroke-linejoin="miter" stroke-miterlimit="2" shape-rendering="crispEdges"/><path d="M2006.6 555 L2006.6 794 M2011.6 555 L2011.6 794 M2044.5 555 L2044.5 794 M2050.7 555 L2050.7 794 M2054.0 555 L2054.0 794 M2057.0 555 L2057.0 794 M2059.5 555 L2059.5 794 M2093.3 555 L2093.3 794 M2095.3 555 L2095.3 794 M2097.8 555 L2097.8 794 M2105.3 555 L2105.3 794 M2107.8 555 L2107.8 794 M2110.3 555 L2110.3 794 M2112.8 555 L2112.8 794 M2119.5 555 L2119.5 794 M2121.2 555 L2121.2 794 M2123.7 555 L2123.7 794 M2126.2 555 L2126.2 794 M2128.7 555 L2128.7 794 M2131.2 555 L2131.2 794 M2133.7 555 L2133.7 794 M2141.2 555 L2141.2 794 M2143.3 555 L2143.3 794 M2145.3 555 L2145.3 794 M2147.8 555 L2147.8 794 M2150.3 555 L2150.3 794 M2152.8 555 L2152.8 794 M2157.8 555 L2157.8 794 M2160.3 555 L2160.3 794 M2162.8 555 L2162.8 794 M2165.3 555 L2165.3 794 M2167.8 555 L2167.8 794 M2175.3 555 L2175.3 794 M2181.2 555 L2181.2 794 M2183.7 555 L2183.7 794 M2186.2 555 L2186.2 794 M2192.0 555 L2192.0 794 M2197.0 555 L2197.0 794 M2197.8 555 L2197.8 794 M2201.7 555 L2201.7 794 M2204.5 555 L2204.5 794 M2208.3 555 L2208.3 794 M2211.2 555 L2211.2 794 M2212.5 555 L2212.5 794 M2352.8 555 L2352.8 794 M2357.8 555 L2357.8 794 M2362.0 555 L2362.0 794 M2365.3 555 L2365.3 794 M2369.5 555 L2369.5 794 M2372.8 555 L2372.8 794 M2374.5 555 L2374.5 794" fill="none" stroke="#ff0000" stroke-width="1.3"/>
<path d="M1366.0 655.0 L1659.5 655.0 L1659.5 655.5 L1953.0 655.5 L1953.0 656.0 L2246.5 656.0 L2246.5 656.5 L2540.0 656.5" fill="none" stroke="#ffa500" stroke-width="1.3" stroke-linejoin="miter" stroke-miterlimit="2" shape-rendering="crispEdges"/>
</g>
<rect x="1793.6" y="560" width="109.20000000000005" height="50" fill="rgba(0,0,0,0.45)"/>
<line x1="1392.5" y1="560" x2="1392.5" y2="789" stroke="rgba(150,150,150,0.2)" stroke-width="1"/>
<line x1="1438.5" y1="560" x2="1438.5" y2="789" stroke="rgba(150,150,150,0.095)" stroke-width="1"/>
<line x1="1485.5" y1="560" x2="1485.5" y2="789" stroke="rgba(150,150,150,0.095)" stroke-width="1"/>
<line x1="1532.5" y1="560" x2="1532.5" y2="789" stroke="rgba(150,150,150,0.095)" stroke-width="1"/>
<line x1="1578.5" y1="560" x2="1578.5" y2="789" stroke="rgba(150,150,150,0.095)" stroke-width="1"/>
<line x1="1625.5" y1="560" x2="1625.5" y2="789" stroke="rgba(150,150,150,0.2)" stroke-width="1"/>
<line x1="1672.5" y1="560" x2="1672.5" y2="789" stroke="rgba(150,150,150,0.095)" stroke-width="1"/>
<line x1="1718.5" y1="560" x2="1718.5" y2="789" stroke="rgba(150,150,150,0.095)" stroke-width="1"/>
<line x1="1765.5" y1="560" x2="1765.5" y2="789" stroke="rgba(150,150,150,0.095)" stroke-width="1"/>
<line x1="1812.5" y1="560" x2="1812.5" y2="789" stroke="rgba(150,150,150,0.095)" stroke-width="1"/>
<line x1="1859.5" y1="560" x2="1859.5" y2="789" stroke="rgba(150,150,150,0.2)" stroke-width="1"/>
<line x1="1905.5" y1="560" x2="1905.5" y2="789" stroke="rgba(150,150,150,0.095)" stroke-width="1"/>
<line x1="1952.5" y1="560" x2="1952.5" y2="789" stroke="rgba(150,150,150,0.095)" stroke-width="1"/>
<line x1="1999.5" y1="560" x2="1999.5" y2="789" stroke="rgba(150,150,150,0.095)" stroke-width="1"/>
<line x1="2045.5" y1="560" x2="2045.5" y2="789" stroke="rgba(150,150,150,0.095)" stroke-width="1"/>
<line x1="2092.5" y1="560" x2="2092.5" y2="789" stroke="rgba(150,150,150,0.2)" stroke-width="1"/>
<line x1="2139.5" y1="560" x2="2139.5" y2="789" stroke="rgba(150,150,150,0.095)" stroke-width="1"/>
<line x1="2185.5" y1="560" x2="2185.5" y2="789" stroke="rgba(150,150,150,0.095)" stroke-width="1"/>
<line x1="2232.5" y1="560" x2="2232.5" y2="789" stroke="rgba(150,150,150,0.095)" stroke-width="1"/>
<line x1="2279.5" y1="560" x2="2279.5" y2="789" stroke="rgba(150,150,150,0.095)" stroke-width="1"/>
<line x1="2325.5" y1="560" x2="2325.5" y2="789" stroke="rgba(150,150,150,0.2)" stroke-width="1"/>
<line x1="2372.5" y1="560" x2="2372.5" y2="789" stroke="rgba(150,150,150,0.095)" stroke-width="1"/>
<line x1="2419.5" y1="560" x2="2419.5" y2="789" stroke="rgba(150,150,150,0.095)" stroke-width="1"/>
<line x1="2465.5" y1="560" x2="2465.5" y2="789" stroke="rgba(150,150,150,0.095)" stroke-width="1"/>
<line x1="2512.5" y1="560" x2="2512.5" y2="789" stroke="rgba(150,150,150,0.095)" stroke-width="1"/>
<line x1="1366" y1="576.5" x2="2540" y2="576.5" stroke="rgba(150,150,150,0.2)" stroke-width="1"/>
<line x1="1366" y1="616.5" x2="2540" y2="616.5" stroke="rgba(150,150,150,0.2)" stroke-width="1"/>
<line x1="1366" y1="655.5" x2="2540" y2="655.5" stroke="rgba(150,150,150,0.2)" stroke-width="1"/>
<line x1="1366" y1="695.5" x2="2540" y2="695.5" stroke="rgba(150,150,150,0.2)" stroke-width="1"/>
<line x1="1366" y1="734.5" x2="2540" y2="734.5" stroke="rgba(150,150,150,0.2)" stroke-width="1"/>
<line x1="1366" y1="773.5" x2="2540" y2="773.5" stroke="rgba(150,150,150,0.2)" stroke-width="1"/>
<line x1="1364.5" y1="560" x2="1364.5" y2="790" stroke="#969696" stroke-width="1"/>
<line x1="1364" y1="789.5" x2="2540" y2="789.5" stroke="#969696" stroke-width="1"/>
<clipPath id="clxR3"><rect x="1365" y="789" width="1216" height="30"/></clipPath>
<g clip-path="url(#clxR3)">
<text x="1392.47" y="806.00" font-size="12.8" fill="#ffffff" text-anchor="middle" textLength="43.70" lengthAdjust="spacingAndGlyphs">-750ms</text>
<text x="1625.85" y="806.00" font-size="12.8" fill="#ffffff" text-anchor="middle" textLength="43.70" lengthAdjust="spacingAndGlyphs">-500ms</text>
<text x="1859.22" y="806.00" font-size="12.8" fill="#ffffff" text-anchor="middle" textLength="43.70" lengthAdjust="spacingAndGlyphs">-250ms</text>
<text x="2092.60" y="806.00" font-size="12.8" fill="#ffffff" text-anchor="middle" textLength="7.50" lengthAdjust="spacingAndGlyphs">0</text>
<text x="2325.97" y="806.00" font-size="12.8" fill="#ffffff" text-anchor="middle" textLength="39.50" lengthAdjust="spacingAndGlyphs">250ms</text>
</g>
<clipPath id="clyR3"><rect x="1284" y="559" width="80" height="231"/></clipPath>
<g clip-path="url(#clyR3)">
<text x="1360.00" y="581.20" font-size="12.8" fill="#ffffff" text-anchor="end" textLength="7.40" lengthAdjust="spacingAndGlyphs">3</text>
<text x="1360.00" y="620.40" font-size="12.8" fill="#ffffff" text-anchor="end" textLength="7.40" lengthAdjust="spacingAndGlyphs">2</text>
<text x="1360.00" y="659.90" font-size="12.8" fill="#ffffff" text-anchor="end" textLength="7.40" lengthAdjust="spacingAndGlyphs">1</text>
<text x="1360.00" y="699.70" font-size="12.8" fill="#ffffff" text-anchor="end" textLength="7.40" lengthAdjust="spacingAndGlyphs">0</text>
<text x="1360.00" y="738.90" font-size="12.8" fill="#ffffff" text-anchor="end" textLength="11.84" lengthAdjust="spacingAndGlyphs">-1</text>
<text x="1360.00" y="778.20" font-size="12.8" fill="#ffffff" text-anchor="end" textLength="11.84" lengthAdjust="spacingAndGlyphs">-2</text>
</g>
<text x="0" y="0" font-size="12.8" fill="#ffffff" text-anchor="middle" textLength="40" lengthAdjust="spacingAndGlyphs" transform="translate(1340.5,674.5) rotate(-90)">counts</text>
<line x1="1794.6" y1="561" x2="1794.6" y2="609" stroke="#5e5e5e" stroke-width="2" stroke-dasharray="9.5 2.5"/>
<line x1="1794.6" y1="610" x2="1794.6" y2="789" stroke="#ffffff" stroke-width="2" stroke-dasharray="9.5 2.5"/>
<line x1="1897.8" y1="561" x2="1897.8" y2="609" stroke="#5e5e5e" stroke-width="2" stroke-dasharray="9.5 2.5"/>
<line x1="1897.8" y1="610" x2="1897.8" y2="789" stroke="#ffffff" stroke-width="2" stroke-dasharray="9.5 2.5"/>
<text x="1793.40" y="590.50" font-size="12.8" fill="#ffffff" textLength="22.00" lengthAdjust="spacingAndGlyphs">ΔT=</text>
<text x="1819.30" y="579.80" font-size="12.8" fill="#ffffff" textLength="79.60" lengthAdjust="spacingAndGlyphs">110ms,299μs</text>
<text x="1819.30" y="600.00" font-size="12.8" fill="#ffffff" textLength="58.80" lengthAdjust="spacingAndGlyphs">9.0663 Hz</text>
<text x="1798.90" y="782.00" font-size="12.8" fill="#ffffff" textLength="98.40" lengthAdjust="spacingAndGlyphs">T2=-319ms,13μs</text>
<text x="1902.40" y="782.00" font-size="12.8" fill="#ffffff" textLength="105.80" lengthAdjust="spacingAndGlyphs">T1=-208ms,715μs</text>
<rect x="1374.5" y="827.5" width="255" height="87" fill="rgba(100,100,100,0.14)" stroke="rgba(255,255,255,0.33)" stroke-width="1"/>
<rect x="1383" y="836" width="19" height="19" fill="#ffd700"/>
<text x="1409.20" y="851.00" font-size="12.8" fill="#ffffff" textLength="209.50" lengthAdjust="spacingAndGlyphs">H1:ASC-CHARD_P_OUT_DQ*0.0001</text>
<rect x="1383" y="861" width="19" height="19" fill="#008080"/>
<text x="1409.20" y="876.00" font-size="12.8" fill="#ffffff" textLength="190.70" lengthAdjust="spacingAndGlyphs">H1:ASC-PRC2_P_OUT_DQ*0.003</text>
<rect x="1383" y="886" width="19" height="19" fill="#0000ff"/>
<text x="1409.20" y="901.00" font-size="12.8" fill="#ffffff" textLength="148.20" lengthAdjust="spacingAndGlyphs">H1:ASC-INP1_P_OUT_DQ</text>
<clipPath id="cpR4"><rect x="1365" y="817" width="1175" height="230"/></clipPath>
<g clip-path="url(#cpR4)">
<path d="M1366.0 911.3 L1367.1 876.8 L1368.4 877.1 L1369.7 882.2 L1371.1 889.5 L1372.4 886.7 L1374.0 882.7 L1375.5 887.8 L1377.0 896.8 L1378.3 885.3 L1379.8 883.0 L1381.4 889.3 L1382.8 881.1 L1384.0 878.2 L1385.2 887.8 L1386.4 889.2 L1388.0 880.2 L1389.3 894.2 L1390.7 886.5 L1392.3 891.1 L1393.5 860.2 L1395.3 872.4 L1397.1 901.7 L1398.7 892.7 L1400.5 896.5 L1402.3 859.5 L1403.6 891.5 L1404.6 884.4 L1405.8 912.0 L1406.8 878.4 L1408.0 862.4 L1409.3 874.5 L1410.7 868.8 L1412.4 903.1 L1413.7 880.6 L1414.9 862.8 L1416.2 882.7 L1417.9 869.2 L1419.4 874.2 L1420.6 896.3 L1421.6 873.3 L1423.1 876.9 L1424.4 883.2 L1426.1 883.6 L1427.8 890.0 L1429.2 903.5 L1430.2 884.4 L1431.6 871.7 L1433.1 874.7 L1434.8 907.7 L1436.2 892.6 L1437.4 868.7 L1438.7 871.9 L1440.0 911.4 L1441.6 875.1 L1442.9 885.2 L1444.0 883.0 L1445.1 908.2 L1446.2 877.7 L1447.4 878.3 L1448.6 900.7 L1450.2 886.3 L1451.5 899.2 L1453.1 906.2 L1454.7 887.9 L1456.2 890.3 L1458.0 898.7 L1459.5 883.7 L1461.1 866.1 L1462.7 884.9 L1464.2 875.9 L1465.2 877.3 L1466.4 874.0 L1467.8 887.5 L1469.2 874.1 L1470.9 896.2 L1472.7 921.4 L1474.0 888.3 L1475.6 897.4 L1477.2 890.5 L1478.4 882.6 L1479.7 886.8 L1481.2 877.6 L1482.8 888.2 L1483.9 892.5 L1485.3 872.2 L1486.7 861.4 L1488.2 863.2 L1489.2 887.1 L1490.3 875.2 L1491.6 902.7 L1493.1 885.4 L1494.2 881.6 L1495.6 881.7 L1496.7 896.8 L1498.2 893.0 L1499.7 886.6 L1500.9 868.8 L1502.7 880.6 L1504.1 894.0 L1505.4 889.3 L1506.8 885.3 L1507.9 874.1 L1509.0 855.6 L1510.8 896.5 L1511.8 901.8 L1513.4 904.9 L1514.6 884.4 L1516.4 870.0 L1518.0 862.3 L1519.1 883.7 L1520.1 877.9 L1521.2 883.7 L1522.8 884.7 L1524.3 890.1 L1525.9 869.6 L1527.4 855.8 L1529.1 877.1 L1530.4 875.5 L1531.5 868.5 L1533.2 885.8 L1535.0 890.4 L1536.3 864.1 L1537.7 879.9 L1539.5 891.2 L1541.0 864.3 L1542.6 906.5 L1544.0 881.3 L1545.1 849.6 L1546.2 877.7 L1547.5 893.6 L1548.9 877.9 L1549.9 852.6 L1551.5 858.1 L1553.0 866.3 L1554.0 865.8 L1555.2 880.2 L1556.5 870.6 L1557.8 860.8 L1559.3 882.9 L1560.9 896.0 L1561.9 909.3 L1563.6 887.9 L1565.2 880.2 L1567.0 900.2 L1568.1 882.4 L1569.5 854.9 L1571.0 874.7 L1572.8 866.9 L1574.1 893.0 L1575.2 897.5 L1576.3 888.3 L1577.5 904.5 L1579.2 879.4 L1580.3 877.2 L1581.7 877.9 L1582.8 897.7 L1584.0 897.0 L1585.8 874.3 L1586.9 851.3 L1588.5 877.0 L1590.0 872.5 L1591.0 875.0 L1592.1 890.4 L1593.2 895.7 L1594.5 895.8 L1596.0 879.3 L1597.4 897.5 L1598.9 899.7 L1600.5 871.5 L1601.9 885.3 L1603.6 864.1 L1605.0 878.5 L1606.6 880.9 L1608.3 876.1 L1609.8 886.5 L1610.8 896.7 L1612.7 876.3 L1614.3 886.5 L1615.4 876.6 L1616.7 884.8 L1618.0 874.5 L1619.4 906.5 L1621.0 883.6 L1622.2 878.2 L1623.3 876.0 L1624.4 886.2 L1625.6 883.4 L1626.6 859.8 L1627.9 894.3 L1629.3 883.4 L1630.5 881.1 L1631.6 890.8 L1632.8 890.6 L1633.8 895.0 L1635.2 875.1 L1636.2 912.4 L1637.6 895.5 L1639.3 899.4 L1640.8 887.9 L1642.4 900.3 L1644.1 884.0 L1645.8 879.6 L1647.5 884.3 L1648.7 901.6 L1650.3 885.7 L1651.5 888.5 L1652.8 883.4 L1654.4 891.7 L1655.8 881.4 L1657.1 888.3 L1658.2 889.0 L1659.5 903.9 L1660.5 901.1 L1661.6 887.7 L1663.4 881.3 L1664.5 871.3 L1665.6 902.5 L1667.2 919.8 L1668.8 882.0 L1669.9 875.8 L1671.2 881.2 L1673.0 870.8 L1674.1 874.6 L1675.7 888.1 L1676.8 873.5 L1678.3 907.2 L1679.9 881.5 L1681.7 879.7 L1682.7 874.1 L1684.0 895.3 L1685.2 875.7 L1686.8 885.6 L1688.2 873.7 L1689.7 876.8 L1690.0 967.2 L1692.7 855.8 L1694.3 966.0 L1696.9 853.5 L1698.7 984.4 L1700.9 853.7 L1702.8 999.6 L1704.6 762.3 L1706.0 1057.9 L1707.3 845.2 L1708.6 974.5 L1710.9 838.7 L1713.1 1001.5 L1714.9 816.4 L1717.2 954.2 L1718.9 808.7 L1720.0 942.0 L1722.2 865.0 L1725.0 933.1 L1727.3 867.0 L1728.9 907.0 L1731.0 854.8 L1732.6 929.2 L1735.2 850.2 L1737.8 930.1 L1740.5 864.9 L1743.1 930.6 L1745.7 840.7 L1747.3 930.6 L1749.8 849.4 L1752.2 913.7 L1753.7 845.7 L1756.5 918.5 L1759.0 854.4 L1760.6 919.7 L1762.9 849.6 L1765.2 924.7 L1767.1 836.8 L1769.3 924.2 L1771.2 843.5 L1772.5 923.1 L1774.3 854.2 L1775.8 914.6 L1777.5 858.4 L1779.9 920.6 L1780.0 991.1 L1782.8 835.9 L1785.3 981.6 L1787.1 740.8 L1789.3 976.7 L1791.4 800.2 L1792.8 986.4 L1794.5 877.1 L1796.2 951.2 L1797.9 865.0 L1799.6 953.5 L1800.0 833.4 L1801.9 942.9 L1803.4 832.0 L1804.5 943.1 L1806.7 829.8 L1808.3 972.5 L1810.6 824.7 L1811.9 953.6 L1814.1 806.1 L1815.8 965.3 L1817.0 832.0 L1819.4 968.6 L1820.9 831.4 L1822.3 940.6 L1824.7 844.5 L1826.2 1027.2 L1828.3 825.4 L1830.6 943.7 L1832.9 805.6 L1834.5 974.3 L1836.4 830.0 L1838.0 998.1 L1840.3 831.4 L1842.8 982.8 L1844.7 825.5 L1846.2 962.2 L1848.1 822.4 L1850.3 958.9 L1852.0 842.4 L1854.5 991.4 L1856.3 818.1 L1858.5 975.3 L1861.0 766.1 L1862.2 962.0 L1863.6 827.2 L1865.4 979.8 L1866.6 807.1 L1868.3 1060.5 L1869.6 812.7 L1872.1 1011.2 L1873.8 815.9 L1876.2 949.2 L1878.2 838.5 L1880.0 971.9 L1882.4 834.2 L1883.7 958.9 L1885.7 847.2 L1887.9 985.3 L1890.1 809.1 L1892.0 979.8 L1893.6 835.6 L1895.4 968.9 L1896.6 846.5 L1897.9 972.4 L1899.8 816.9 L1901.0 977.9 L1902.3 832.8 L1904.4 949.8 L1906.0 821.7 L1907.3 959.5 L1908.6 839.2 L1910.6 963.8 L1911.8 817.4 L1913.5 984.6 L1915.1 831.0 L1917.1 998.4 L1918.7 839.8 L1920.1 963.9 L1922.5 832.7 L1924.1 970.6 L1925.5 814.6 L1926.7 978.9 L1928.2 822.3 L1930.4 946.3 L1931.7 842.2 L1933.9 965.4 L1935.8 846.1 L1937.0 972.7 L1938.6 810.4 L1940.8 964.6 L1943.0 811.8 L1944.5 939.5 L1946.6 824.1 L1948.4 938.8 L1950.3 821.2 L1952.6 958.4 L1954.9 840.9 L1956.8 951.7 L1958.7 788.6 L1960.8 976.4 L1962.5 806.9 L1963.9 956.9 L1965.2 845.0 L1966.3 968.7 L1968.7 809.6 L1970.6 966.1 L1971.7 804.0 L1973.9 983.1 L1975.3 805.3 L1976.8 954.3 L1978.6 833.7 L1980.0 1001.1 L1981.2 845.8 L1983.0 941.1 L1985.4 831.9 L1987.1 972.4 L1988.9 820.5 L1991.3 945.1 L1993.1 813.2 L1995.1 933.1 L1997.5 842.1 L1998.9 938.1 L2000.7 818.3 L2002.6 962.0 L2005.1 819.5 L2006.2 945.9 L2008.7 820.0 L2010.3 951.8 L2012.7 838.0 L2014.4 972.2 L2016.6 829.1 L2018.8 951.6 L2020.7 825.3 L2022.3 956.1 L2024.0 824.3 L2025.3 940.2 L2027.8 840.6 L2029.8 974.7 L2032.3 804.6 L2034.7 951.8 L2037.2 821.0 L2038.8 962.2 L2040.0 791.7 L2042.3 974.1 L2044.6 844.7 L2046.4 960.2 L2048.0 808.4 L2049.1 986.8 L2050.9 835.4 L2053.1 972.5 L2054.9 845.1 L2057.2 942.5 L2059.3 833.8 L2060.0 897.6 L2061.3 999.0 L2063.5 907.4 L2064.6 994.2 L2066.1 840.4 L2068.1 1015.9 L2070.4 914.2 L2072.3 1002.4 L2073.6 936.2 L2074.7 1027.0 L2077.0 934.8 L2078.5 1027.9 L2079.9 941.8 L2082.2 1026.0 L2084.6 954.9 L2085.9 1032.2 L2087.3 947.0 L2088.8 1031.8 L2090.9 963.3 L2092.1 1035.1 L2093.9 968.5 L2096.0 1061.9 L2098.3 975.8 L2099.8 1072.4 L2110.0 1080.0 L2130.0 1080.0 L2133.3 1077.0 L2134.0 787.0 L2138.3 787.0 L2139.0 1077.0 L2149.5 1077.0 L2150.2 787.0 L2155.3 787.0 L2156.0 1077.0 L2158.3 1077.0 L2159.0 787.0 L2160.5 787.0 L2161.2 1077.0 L2163.3 1077.0 L2164.0 787.0 L2170.3 787.0 L2171.0 1077.0 L2176.7 1077.0 L2177.4 787.0 L2177.5 787.0 L2178.2 1077.0 L2181.3 1077.0 L2182.0 787.0 L2188.3 787.0 L2189.0 1077.0 L2191.3 1077.0 L2192.0 787.0 L2203.3 787.0 L2204.0 1077.0 L2209.5 1080.0 L2209.5 913.0 L2210.0 913.0 L2210.3 1080.0 L2212.2 1077.0 L2212.9 787.0 L2214.2 787.0 L2214.9 1077.0 L2216.7 1077.0 L2217.4 787.0 L2219.5 787.0 L2220.2 1077.0 L2222.0 1077.0 L2222.7 787.0 L2224.5 787.0 L2225.2 1077.0 L2226.3 1077.0 L2227.0 787.0 L2233.3 787.0 L2234.0 1077.0 L2237.5 1077.0 L2238.2 787.0 L2243.3 787.0 L2244.0 1077.0 L2245.3 1077.0 L2246.0 787.0 L2246.3 787.0 L2247.0 1077.0 L2253.3 1077.0 L2254.0 787.0 L2267.5 775.0 L2267.5 875.0 L2268.3 877.0 L2268.3 1080.0 L2289.5 1077.0 L2290.2 787.0 L2297.5 787.0 L2298.2 1077.0 L2298.7 1077.0 L2299.4 787.0 L2301.7 787.0 L2302.4 1077.0 L2305.0 1077.0 L2305.7 787.0 L2307.5 787.0 L2308.2 1077.0 L2310.0 1077.0 L2310.7 787.0 L2314.2 787.0 L2314.9 1077.0 L2325.3 1077.0 L2326.0 787.0 L2341.7 787.0 L2342.4 1077.0 L2343.3 1077.0 L2344.0 787.0 L2351.7 787.0 L2352.4 1077.0 L2354.7 1077.0 L2355.4 787.0 L2358.3 787.0 L2359.0 1077.0 L2361.7 1077.0 L2362.4 787.0 L2365.0 787.0 L2365.7 1077.0 L2368.3 1077.0 L2369.0 787.0 L2371.3 787.0 L2372.0 1077.0 L2382.5 1077.0 L2383.2 787.0 L2386.7 787.0 L2387.4 1077.0 L2389.2 1077.0 L2389.9 787.0 L2392.5 787.0 L2393.2 1077.0 L2401.0 1077.0 L2401.6 787.0 L2402.1 787.0 L2402.7 1077.0 L2404.1 933.1 L2405.2 787.0 L2405.8 1077.0 L2407.3 1077.0 L2407.9 787.0 L2408.8 787.0 L2409.4 1077.0 L2410.4 957.3 L2412.6 854.9 L2414.4 950.3 L2415.4 787.0 L2416.0 1077.0 L2417.5 947.9 L2419.2 879.4 L2420.4 955.9 L2422.0 860.2 L2423.4 953.7 L2425.0 872.7 L2426.5 1077.0 L2427.1 787.0 L2428.2 882.0 L2429.7 936.7 L2431.9 889.6 L2433.5 940.5 L2434.6 879.9 L2436.4 1077.0 L2437.0 787.0 L2438.1 870.2 L2439.1 948.4 L2440.4 787.0 L2441.0 1077.0 L2442.4 1077.0 L2443.0 787.0 L2444.1 883.5 L2446.3 1077.0 L2446.9 787.0 L2447.5 787.0 L2448.1 1077.0 L2448.9 1077.0 L2449.5 787.0 L2449.9 862.1 L2451.1 968.8 L2452.3 787.0 L2452.9 1077.0 L2453.9 1077.0 L2454.5 787.0 L2455.6 865.7 L2456.7 952.2 L2458.2 787.0 L2458.8 1077.0 L2460.0 1077.0 L2460.6 787.0 L2461.8 787.0 L2462.4 1077.0 L2462.8 946.9 L2464.3 882.8 L2465.2 972.1 L2466.6 891.0 L2468.4 956.6 L2470.1 787.0 L2470.7 1077.0 L2471.8 959.8 L2473.5 898.0 L2475.1 942.5 L2476.6 787.0 L2477.2 1077.0 L2478.2 947.1 L2479.8 787.0 L2480.4 1077.0 L2481.3 971.7 L2482.7 897.8 L2484.8 940.0 L2486.3 896.3 L2488.1 953.0 L2490.3 896.9 L2492.2 1077.0 L2492.8 787.0 L2493.7 899.8 L2494.8 973.1 L2496.0 883.9 L2497.2 974.0 L2499.2 883.8 L2500.1 1077.0 L2500.7 787.0 L2501.5 787.0 L2502.1 1077.0 L2503.3 1077.0 L2504.0 787.0 L2506.0 787.0 L2506.7 1077.0 L2511.7 1077.0 L2512.4 787.0 L2515.0 787.0 L2515.7 1077.0 L2518.3 1077.0 L2519.0 787.0 L2522.5 787.0 L2523.2 1077.0 L2529.2 1077.0 L2529.9 787.0 L2536.7 775.0 L2536.7 865.0" fill="none" stroke="#ffd700" stroke-width="1.0" stroke-linejoin="miter" stroke-miterlimit="2" shape-rendering="crispEdges"/><path d="M2133.7 812 L2133.7 1052 M2138.7 812 L2138.7 1052 M2149.8 812 L2149.8 1052 M2155.7 812 L2155.7 1052 M2158.7 812 L2158.7 1052 M2160.8 812 L2160.8 1052 M2163.7 812 L2163.7 1052 M2170.7 812 L2170.7 1052 M2177.0 812 L2177.0 1052 M2177.8 812 L2177.8 1052 M2181.7 812 L2181.7 1052 M2188.7 812 L2188.7 1052 M2191.7 812 L2191.7 1052 M2203.7 812 L2203.7 1052 M2212.5 812 L2212.5 1052 M2214.5 812 L2214.5 1052 M2217.0 812 L2217.0 1052 M2219.8 812 L2219.8 1052 M2222.3 812 L2222.3 1052 M2224.8 812 L2224.8 1052 M2226.7 812 L2226.7 1052 M2233.7 812 L2233.7 1052 M2237.8 812 L2237.8 1052 M2243.7 812 L2243.7 1052 M2245.7 812 L2245.7 1052 M2246.7 812 L2246.7 1052 M2253.7 812 L2253.7 1052 M2289.8 812 L2289.8 1052 M2297.8 812 L2297.8 1052 M2299.0 812 L2299.0 1052 M2302.0 812 L2302.0 1052 M2305.3 812 L2305.3 1052 M2307.8 812 L2307.8 1052 M2310.3 812 L2310.3 1052 M2314.5 812 L2314.5 1052 M2325.7 812 L2325.7 1052 M2342.0 812 L2342.0 1052 M2343.7 812 L2343.7 1052 M2352.0 812 L2352.0 1052 M2355.0 812 L2355.0 1052 M2358.7 812 L2358.7 1052 M2362.0 812 L2362.0 1052 M2365.3 812 L2365.3 1052 M2368.7 812 L2368.7 1052 M2371.7 812 L2371.7 1052 M2382.8 812 L2382.8 1052 M2387.0 812 L2387.0 1052 M2389.5 812 L2389.5 1052 M2392.8 812 L2392.8 1052 M2503.7 812 L2503.7 1052 M2506.3 812 L2506.3 1052 M2512.0 812 L2512.0 1052 M2515.3 812 L2515.3 1052 M2518.7 812 L2518.7 1052 M2522.8 812 L2522.8 1052 M2529.5 812 L2529.5 1052" fill="none" stroke="#ffd700" stroke-width="1.4"/>
<path d="M1366.0 974.2 L1368.1 974.1 L1370.2 974.0 L1372.5 973.8 L1374.9 973.7 L1377.4 973.5 L1380.0 973.3 L1382.7 973.2 L1385.5 973.0 L1388.4 972.8 L1391.3 972.6 L1394.4 972.4 L1397.6 972.2 L1400.8 972.0 L1404.1 971.8 L1407.5 971.5 L1411.0 971.3 L1414.6 971.1 L1418.2 970.8 L1421.9 970.6 L1425.6 970.4 L1429.5 970.1 L1433.4 969.9 L1437.3 969.6 L1441.4 969.3 L1445.4 969.1 L1449.6 968.8 L1453.7 968.5 L1458.0 968.3 L1462.3 968.0 L1466.6 967.7 L1470.9 967.4 L1475.4 967.1 L1479.8 966.9 L1484.3 966.6 L1488.8 966.3 L1493.3 966.0 L1497.9 965.7 L1502.5 965.4 L1507.1 965.1 L1511.8 964.8 L1516.4 964.5 L1521.1 964.2 L1525.8 963.9 L1530.5 963.5 L1535.2 963.2 L1540.0 962.9 L1544.7 962.6 L1549.4 962.3 L1554.1 962.0 L1558.9 961.7 L1563.6 961.4 L1568.3 961.1 L1573.0 960.8 L1577.7 960.4 L1582.4 960.1 L1587.1 959.8 L1591.7 959.5 L1596.4 959.2 L1601.0 958.9 L1605.5 958.6 L1610.1 958.3 L1614.6 958.0 L1619.1 957.7 L1623.5 957.4 L1628.0 957.1 L1632.3 956.8 L1636.7 956.5 L1641.0 956.2 L1645.2 955.9 L1649.4 955.7 L1653.5 955.4 L1657.6 955.1 L1661.6 954.8 L1665.6 954.5 L1669.5 954.3 L1673.4 954.0 L1677.2 953.7 L1680.9 953.5 L1684.5 953.2 L1688.1 953.0 L1691.6 952.7 L1695.0 952.5 L1699.9 952.2 L1704.8 951.8 L1709.6 951.5 L1714.4 951.1 L1719.1 950.8 L1723.8 950.4 L1728.4 950.1 L1733.0 949.8 L1737.6 949.4 L1742.1 949.1 L1746.6 948.8 L1751.0 948.4 L1755.4 948.1 L1759.7 947.8 L1764.0 947.4 L1768.3 947.1 L1772.6 946.8 L1776.8 946.5 L1780.9 946.2 L1785.1 945.8 L1789.2 945.5 L1793.3 945.2 L1797.3 944.9 L1801.3 944.6 L1805.3 944.3 L1809.3 943.9 L1813.2 943.6 L1817.1 943.3 L1821.0 943.0 L1824.9 942.7 L1828.7 942.4 L1832.5 942.1 L1836.3 941.8 L1840.1 941.5 L1843.9 941.2 L1847.6 940.9 L1851.3 940.6 L1855.0 940.3 L1858.7 940.0 L1862.4 939.7 L1866.1 939.4 L1869.7 939.1 L1873.3 938.8 L1877.0 938.5 L1880.6 938.2 L1884.2 937.9 L1887.8 937.6 L1891.4 937.3 L1895.0 937.0 L1898.6 936.7 L1902.1 936.5 L1905.7 936.2 L1909.3 935.9 L1912.9 935.6 L1916.4 935.3 L1920.0 935.0 L1924.6 934.6 L1929.2 934.2 L1933.8 933.9 L1938.3 933.5 L1942.8 933.1 L1947.2 932.7 L1951.6 932.4 L1956.0 932.0 L1960.3 931.6 L1964.6 931.3 L1968.9 930.9 L1973.2 930.5 L1977.4 930.2 L1981.6 929.8 L1985.7 929.4 L1989.9 929.1 L1994.0 928.7 L1998.1 928.4 L2002.1 928.0 L2006.2 927.6 L2010.2 927.3 L2014.2 926.9 L2018.2 926.6 L2022.1 926.2 L2026.1 925.9 L2030.0 925.5 L2033.9 925.2 L2037.8 924.9 L2041.7 924.5 L2045.5 924.2 L2049.4 923.8 L2053.2 923.5 L2057.1 923.2 L2060.9 922.9 L2064.7 922.5 L2068.5 922.2 L2072.3 921.9 L2076.1 921.6 L2079.9 921.2 L2083.7 920.9 L2087.4 920.6 L2091.2 920.3 L2095.0 920.0 L2099.4 919.6 L2103.8 919.3 L2108.2 919.0 L2112.6 918.6 L2116.9 918.3 L2121.3 917.9 L2125.7 917.6 L2130.0 917.3 L2134.3 916.9 L2138.7 916.6 L2143.0 916.3 L2147.3 916.0 L2151.6 915.7 L2155.8 915.4 L2160.0 915.0 L2164.3 914.7 L2168.4 914.4 L2172.6 914.1 L2176.8 913.8 L2180.9 913.5 L2184.9 913.2 L2189.0 912.9 L2193.0 912.7 L2197.0 912.4 L2200.9 912.1 L2204.9 911.8 L2208.7 911.5 L2212.6 911.2 L2216.3 910.9 L2220.1 910.7 L2223.8 910.4 L2227.5 910.1 L2231.1 909.8 L2234.6 909.6 L2238.1 909.3 L2241.6 909.0 L2245.0 908.8 L2249.9 908.4 L2254.6 908.0 L2259.2 907.6 L2263.6 907.2 L2267.8 906.8 L2271.9 906.5 L2275.9 906.1 L2279.8 905.8 L2283.6 905.4 L2287.4 905.1 L2291.1 904.7 L2294.7 904.4 L2298.4 904.1 L2302.0 903.7 L2305.6 903.4 L2309.2 903.1 L2312.9 902.7 L2316.6 902.4 L2320.4 902.1 L2324.2 901.7 L2328.1 901.4 L2332.2 901.0 L2336.3 900.7 L2340.6 900.4 L2345.0 900.0 L2348.7 899.7 L2352.5 899.4 L2356.3 899.1 L2360.3 898.8 L2364.3 898.5 L2368.5 898.2 L2372.6 897.8 L2376.8 897.5 L2381.1 897.2 L2385.4 896.9 L2389.7 896.5 L2394.1 896.2 L2398.5 895.9 L2402.8 895.5 L2407.2 895.2 L2411.6 894.9 L2415.9 894.6 L2420.2 894.3 L2424.5 894.0 L2428.7 893.6 L2432.9 893.4 L2437.0 893.1 L2441.0 892.8 L2445.0 892.5 L2448.9 892.3 L2452.7 892.0 L2456.4 891.8 L2460.0 891.6 L2463.4 891.4 L2466.8 891.2 L2470.0 891.0 L2475.7 890.7 L2481.2 890.5 L2486.5 890.3 L2491.7 890.1 L2496.8 890.0 L2501.6 889.9 L2506.2 889.8 L2510.7 889.7 L2514.9 889.7 L2518.9 889.6 L2522.7 889.6 L2526.2 889.6 L2529.5 889.6 L2532.5 889.6 L2535.3 889.6 L2537.8 889.5 L2540.0 889.5" fill="none" stroke="#008080" stroke-width="1.2" stroke-linejoin="miter" stroke-miterlimit="2" shape-rendering="crispEdges"/>
<path d="M1366.0 932.5 L1368.2 933.1 L1370.6 933.8 L1373.3 934.5 L1376.3 935.3 L1379.5 936.2 L1383.0 937.2 L1386.6 938.2 L1390.4 939.3 L1394.4 940.4 L1398.6 941.5 L1402.9 942.7 L1407.3 943.9 L1411.8 945.2 L1416.4 946.5 L1421.1 947.8 L1425.8 949.1 L1430.6 950.4 L1435.4 951.7 L1440.1 953.0 L1444.9 954.3 L1449.7 955.6 L1454.3 956.9 L1459.0 958.1 L1463.5 959.3 L1468.0 960.5 L1472.3 961.7 L1476.5 962.8 L1480.6 963.8 L1484.5 964.8 L1488.2 965.8 L1491.7 966.7 L1495.0 967.5 L1500.5 968.8 L1505.7 970.1 L1510.6 971.3 L1515.3 972.3 L1519.7 973.4 L1524.0 974.3 L1528.1 975.2 L1532.0 976.0 L1535.9 976.8 L1539.6 977.5 L1543.3 978.2 L1547.0 978.9 L1550.7 979.5 L1554.4 980.1 L1558.1 980.7 L1562.0 981.3 L1565.9 981.9 L1570.0 982.5 L1574.2 983.1 L1578.5 983.6 L1582.8 984.1 L1587.1 984.6 L1591.5 985.0 L1595.9 985.4 L1600.3 985.8 L1604.7 986.2 L1609.1 986.5 L1613.4 986.8 L1617.6 987.1 L1621.9 987.4 L1626.0 987.6 L1630.0 987.9 L1633.9 988.1 L1637.8 988.3 L1641.5 988.5 L1645.0 988.8 L1650.0 989.0 L1654.5 989.3 L1658.7 989.6 L1662.6 989.8 L1666.3 989.9 L1670.0 990.1 L1673.7 990.2 L1677.4 990.2 L1681.3 990.2 L1685.5 990.2 L1690.0 990.1 L1695.0 990.0 L1698.5 989.9 L1702.2 989.7 L1706.1 989.6 L1710.0 989.4 L1714.0 989.2 L1718.1 989.0 L1722.4 988.7 L1726.6 988.5 L1730.9 988.2 L1735.3 987.9 L1739.7 987.6 L1744.1 987.3 L1748.5 986.9 L1752.9 986.6 L1757.2 986.2 L1761.5 985.8 L1765.8 985.4 L1770.0 985.0 L1774.2 984.6 L1778.5 984.1 L1782.8 983.6 L1787.1 983.1 L1791.5 982.6 L1795.9 982.0 L1800.3 981.4 L1804.7 980.8 L1809.1 980.2 L1813.4 979.7 L1817.6 979.0 L1821.9 978.4 L1826.0 977.8 L1830.0 977.3 L1833.9 976.7 L1837.8 976.1 L1841.5 975.5 L1845.0 975.0 L1850.0 974.2 L1854.6 973.4 L1858.9 972.7 L1863.0 971.9 L1866.8 971.2 L1870.6 970.4 L1874.4 969.7 L1878.1 968.9 L1882.0 968.2 L1886.1 967.5 L1890.4 966.7 L1895.0 966.0 L1898.7 965.4 L1902.4 964.9 L1906.3 964.3 L1910.3 963.8 L1914.4 963.2 L1918.5 962.6 L1922.7 962.1 L1926.9 961.5 L1931.1 960.9 L1935.3 960.4 L1939.6 959.9 L1943.8 959.4 L1947.9 958.9 L1952.0 958.4 L1956.0 957.9 L1960.0 957.5 L1964.1 957.1 L1968.1 956.6 L1972.1 956.2 L1976.0 955.8 L1979.8 955.4 L1983.6 955.1 L1987.5 954.7 L1991.3 954.4 L1995.2 954.1 L1999.1 953.8 L2003.1 953.5 L2007.1 953.2 L2011.3 953.0 L2015.6 952.7 L2020.0 952.5 L2023.8 952.3 L2027.8 952.1 L2031.9 952.0 L2036.1 951.8 L2040.4 951.7 L2044.8 951.5 L2049.2 951.4 L2053.7 951.3 L2058.1 951.2 L2062.6 951.1 L2067.0 951.0 L2071.3 951.0 L2075.6 950.9 L2079.7 950.9 L2083.8 950.9 L2087.7 950.9 L2091.4 950.9 L2095.0 951.0 L2100.0 951.1 L2104.5 951.3 L2108.7 951.4 L2112.6 951.7 L2116.3 951.9 L2120.0 952.2 L2123.7 952.6 L2127.4 952.9 L2131.3 953.4 L2135.5 953.9 L2140.0 954.4 L2145.0 955.0 L2148.5 955.4 L2152.2 955.9 L2156.1 956.4 L2160.0 956.9 L2164.0 957.5 L2168.1 958.0 L2172.4 958.6 L2176.6 959.2 L2180.9 959.9 L2185.3 960.5 L2189.7 961.2 L2194.1 961.9 L2198.5 962.5 L2202.9 963.2 L2207.2 963.9 L2211.5 964.6 L2215.8 965.3 L2220.0 966.0 L2224.2 966.7 L2228.3 967.4 L2232.5 968.1 L2236.7 968.9 L2240.8 969.6 L2245.0 970.4 L2249.2 971.2 L2253.3 972.0 L2257.5 972.8 L2261.7 973.5 L2265.8 974.3 L2270.0 975.1 L2274.2 976.0 L2278.3 976.8 L2282.5 977.6 L2286.7 978.4 L2290.8 979.2 L2295.0 980.0 L2299.2 980.8 L2303.3 981.6 L2307.5 982.5 L2311.7 983.3 L2315.8 984.2 L2320.0 985.0 L2324.2 985.9 L2328.3 986.7 L2332.5 987.6 L2336.7 988.4 L2340.8 989.3 L2345.0 990.1 L2349.2 991.0 L2353.3 991.8 L2357.5 992.6 L2361.7 993.4 L2365.8 994.2 L2370.0 995.0 L2374.1 995.8 L2378.2 996.5 L2382.3 997.3 L2386.3 998.0 L2390.3 998.7 L2394.3 999.5 L2398.2 1000.2 L2402.2 1000.9 L2406.2 1001.6 L2410.3 1002.3 L2414.4 1003.0 L2418.5 1003.6 L2422.7 1004.3 L2427.0 1005.0 L2431.3 1005.6 L2435.8 1006.3 L2440.3 1006.9 L2445.0 1007.5 L2448.8 1008.0 L2452.9 1008.5 L2457.1 1009.0 L2461.5 1009.4 L2466.1 1009.9 L2470.7 1010.4 L2475.5 1010.9 L2480.3 1011.4 L2485.2 1011.9 L2490.0 1012.3 L2494.8 1012.8 L2499.6 1013.3 L2504.2 1013.7 L2508.8 1014.1 L2513.2 1014.5 L2517.4 1014.9 L2521.5 1015.3 L2525.3 1015.6 L2528.9 1015.9 L2532.1 1016.3 L2535.1 1016.5 L2537.7 1016.8 L2540.0 1017.0" fill="none" stroke="#0000ff" stroke-width="1.2" stroke-linejoin="miter" stroke-miterlimit="2" shape-rendering="crispEdges"/>
</g>
<rect x="1793.6" y="817" width="109.20000000000005" height="50" fill="rgba(0,0,0,0.45)"/>
<line x1="1392.5" y1="817" x2="1392.5" y2="1047" stroke="rgba(150,150,150,0.2)" stroke-width="1"/>
<line x1="1438.5" y1="817" x2="1438.5" y2="1047" stroke="rgba(150,150,150,0.095)" stroke-width="1"/>
<line x1="1485.5" y1="817" x2="1485.5" y2="1047" stroke="rgba(150,150,150,0.095)" stroke-width="1"/>
<line x1="1532.5" y1="817" x2="1532.5" y2="1047" stroke="rgba(150,150,150,0.095)" stroke-width="1"/>
<line x1="1578.5" y1="817" x2="1578.5" y2="1047" stroke="rgba(150,150,150,0.095)" stroke-width="1"/>
<line x1="1625.5" y1="817" x2="1625.5" y2="1047" stroke="rgba(150,150,150,0.2)" stroke-width="1"/>
<line x1="1672.5" y1="817" x2="1672.5" y2="1047" stroke="rgba(150,150,150,0.095)" stroke-width="1"/>
<line x1="1718.5" y1="817" x2="1718.5" y2="1047" stroke="rgba(150,150,150,0.095)" stroke-width="1"/>
<line x1="1765.5" y1="817" x2="1765.5" y2="1047" stroke="rgba(150,150,150,0.095)" stroke-width="1"/>
<line x1="1812.5" y1="817" x2="1812.5" y2="1047" stroke="rgba(150,150,150,0.095)" stroke-width="1"/>
<line x1="1859.5" y1="817" x2="1859.5" y2="1047" stroke="rgba(150,150,150,0.2)" stroke-width="1"/>
<line x1="1905.5" y1="817" x2="1905.5" y2="1047" stroke="rgba(150,150,150,0.095)" stroke-width="1"/>
<line x1="1952.5" y1="817" x2="1952.5" y2="1047" stroke="rgba(150,150,150,0.095)" stroke-width="1"/>
<line x1="1999.5" y1="817" x2="1999.5" y2="1047" stroke="rgba(150,150,150,0.095)" stroke-width="1"/>
<line x1="2045.5" y1="817" x2="2045.5" y2="1047" stroke="rgba(150,150,150,0.095)" stroke-width="1"/>
<line x1="2092.5" y1="817" x2="2092.5" y2="1047" stroke="rgba(150,150,150,0.2)" stroke-width="1"/>
<line x1="2139.5" y1="817" x2="2139.5" y2="1047" stroke="rgba(150,150,150,0.095)" stroke-width="1"/>
<line x1="2185.5" y1="817" x2="2185.5" y2="1047" stroke="rgba(150,150,150,0.095)" stroke-width="1"/>
<line x1="2232.5" y1="817" x2="2232.5" y2="1047" stroke="rgba(150,150,150,0.095)" stroke-width="1"/>
<line x1="2279.5" y1="817" x2="2279.5" y2="1047" stroke="rgba(150,150,150,0.095)" stroke-width="1"/>
<line x1="2325.5" y1="817" x2="2325.5" y2="1047" stroke="rgba(150,150,150,0.2)" stroke-width="1"/>
<line x1="2372.5" y1="817" x2="2372.5" y2="1047" stroke="rgba(150,150,150,0.095)" stroke-width="1"/>
<line x1="2419.5" y1="817" x2="2419.5" y2="1047" stroke="rgba(150,150,150,0.095)" stroke-width="1"/>
<line x1="2465.5" y1="817" x2="2465.5" y2="1047" stroke="rgba(150,150,150,0.095)" stroke-width="1"/>
<line x1="2512.5" y1="817" x2="2512.5" y2="1047" stroke="rgba(150,150,150,0.095)" stroke-width="1"/>
<line x1="1366" y1="817.5" x2="2540" y2="817.5" stroke="rgba(150,150,150,0.2)" stroke-width="1"/>
<line x1="1366" y1="932.5" x2="2540" y2="932.5" stroke="rgba(150,150,150,0.2)" stroke-width="1"/>
<line x1="1366" y1="840.5" x2="2540" y2="840.5" stroke="rgba(150,150,150,0.075)" stroke-width="1"/>
<line x1="1366" y1="863.5" x2="2540" y2="863.5" stroke="rgba(150,150,150,0.075)" stroke-width="1"/>
<line x1="1366" y1="886.5" x2="2540" y2="886.5" stroke="rgba(150,150,150,0.075)" stroke-width="1"/>
<line x1="1366" y1="909.5" x2="2540" y2="909.5" stroke="rgba(150,150,150,0.075)" stroke-width="1"/>
<line x1="1366" y1="955.5" x2="2540" y2="955.5" stroke="rgba(150,150,150,0.075)" stroke-width="1"/>
<line x1="1366" y1="978.5" x2="2540" y2="978.5" stroke="rgba(150,150,150,0.075)" stroke-width="1"/>
<line x1="1366" y1="1001.5" x2="2540" y2="1001.5" stroke="rgba(150,150,150,0.075)" stroke-width="1"/>
<line x1="1366" y1="1024.5" x2="2540" y2="1024.5" stroke="rgba(150,150,150,0.075)" stroke-width="1"/>
<line x1="1364.5" y1="817" x2="1364.5" y2="1048" stroke="#969696" stroke-width="1"/>
<line x1="1364" y1="1047.5" x2="2540" y2="1047.5" stroke="#969696" stroke-width="1"/>
<clipPath id="clxR4"><rect x="1365" y="1047" width="1216" height="30"/></clipPath>
<g clip-path="url(#clxR4)">
<text x="1392.47" y="1064.00" font-size="12.8" fill="#ffffff" text-anchor="middle" textLength="43.70" lengthAdjust="spacingAndGlyphs">-750ms</text>
<text x="1625.85" y="1064.00" font-size="12.8" fill="#ffffff" text-anchor="middle" textLength="43.70" lengthAdjust="spacingAndGlyphs">-500ms</text>
<text x="1859.22" y="1064.00" font-size="12.8" fill="#ffffff" text-anchor="middle" textLength="43.70" lengthAdjust="spacingAndGlyphs">-250ms</text>
<text x="2092.60" y="1064.00" font-size="12.8" fill="#ffffff" text-anchor="middle" textLength="7.50" lengthAdjust="spacingAndGlyphs">0</text>
<text x="2325.97" y="1064.00" font-size="12.8" fill="#ffffff" text-anchor="middle" textLength="39.50" lengthAdjust="spacingAndGlyphs">250ms</text>
</g>
<clipPath id="clyR4"><rect x="1284" y="816" width="80" height="232"/></clipPath>
<g clip-path="url(#clyR4)">
<text x="1360.00" y="821.40" font-size="12.8" fill="#ffffff" text-anchor="end" textLength="7.40" lengthAdjust="spacingAndGlyphs">1</text>
<text x="1360.00" y="936.90" font-size="12.8" fill="#ffffff" text-anchor="end" textLength="7.40" lengthAdjust="spacingAndGlyphs">0</text>
<text x="1360.00" y="1051.40" font-size="12.8" fill="#ffffff" text-anchor="end" textLength="11.84" lengthAdjust="spacingAndGlyphs">-1</text>
</g>
<text x="0" y="0" font-size="12.8" fill="#ffffff" text-anchor="middle" textLength="40" lengthAdjust="spacingAndGlyphs" transform="translate(1340.5,932.0) rotate(-90)">counts</text>
<line x1="1794.6" y1="818" x2="1794.6" y2="866" stroke="#5e5e5e" stroke-width="2" stroke-dasharray="9.5 2.5"/>
<line x1="1794.6" y1="867" x2="1794.6" y2="1047" stroke="#ffffff" stroke-width="2" stroke-dasharray="9.5 2.5"/>
<line x1="1897.8" y1="818" x2="1897.8" y2="866" stroke="#5e5e5e" stroke-width="2" stroke-dasharray="9.5 2.5"/>
<line x1="1897.8" y1="867" x2="1897.8" y2="1047" stroke="#ffffff" stroke-width="2" stroke-dasharray="9.5 2.5"/>
<text x="1793.40" y="847.50" font-size="12.8" fill="#ffffff" textLength="22.00" lengthAdjust="spacingAndGlyphs">ΔT=</text>
<text x="1819.30" y="836.80" font-size="12.8" fill="#ffffff" textLength="79.60" lengthAdjust="spacingAndGlyphs">110ms,299μs</text>
<text x="1819.30" y="857.00" font-size="12.8" fill="#ffffff" textLength="58.80" lengthAdjust="spacingAndGlyphs">9.0663 Hz</text>
<text x="1798.90" y="1040.00" font-size="12.8" fill="#ffffff" textLength="98.40" lengthAdjust="spacingAndGlyphs">T2=-319ms,13μs</text>
<text x="1902.40" y="1040.00" font-size="12.8" fill="#ffffff" textLength="105.80" lengthAdjust="spacingAndGlyphs">T1=-208ms,715μs</text>
<rect x="1374.5" y="1085.5" width="254" height="87" fill="rgba(100,100,100,0.14)" stroke="rgba(255,255,255,0.33)" stroke-width="1"/>
<rect x="1383" y="1094" width="19" height="19" fill="#ffd700"/>
<text x="1409.20" y="1109.00" font-size="12.8" fill="#ffffff" textLength="209.00" lengthAdjust="spacingAndGlyphs">H1:ASC-CHARD_Y_OUT_DQ*0.0001</text>
<rect x="1383" y="1119" width="19" height="19" fill="#008080"/>
<text x="1409.20" y="1134.00" font-size="12.8" fill="#ffffff" textLength="190.50" lengthAdjust="spacingAndGlyphs">H1:ASC-PRC2_Y_OUT_DQ*0.003</text>
<rect x="1383" y="1144" width="19" height="19" fill="#0000ff"/>
<text x="1409.20" y="1159.00" font-size="12.8" fill="#ffffff" textLength="148.20" lengthAdjust="spacingAndGlyphs">H1:ASC-INP1_Y_OUT_DQ</text>
<clipPath id="cpR5"><rect x="1365" y="1075" width="1175" height="230"/></clipPath>
<g clip-path="url(#cpR5)">
<path d="M1366.0 1202.0 L1367.2 1205.4 L1368.9 1215.5 L1370.4 1210.2 L1372.2 1203.2 L1373.7 1209.1 L1375.0 1209.1 L1376.6 1211.9 L1378.3 1221.8 L1379.4 1209.8 L1381.2 1210.7 L1382.8 1217.7 L1384.0 1214.9 L1385.4 1219.6 L1386.7 1215.5 L1388.5 1216.8 L1389.9 1216.7 L1391.2 1216.6 L1392.4 1214.9 L1393.7 1218.1 L1395.0 1199.6 L1396.1 1206.4 L1397.4 1212.0 L1398.3 1208.5 L1399.7 1204.8 L1400.8 1226.8 L1402.3 1218.8 L1403.9 1214.5 L1405.2 1206.5 L1407.0 1211.0 L1408.0 1200.3 L1409.1 1219.0 L1410.7 1208.9 L1412.3 1207.1 L1414.0 1197.7 L1415.7 1215.6 L1417.1 1197.1 L1418.7 1208.3 L1419.8 1210.3 L1420.9 1222.9 L1422.7 1231.6 L1424.2 1224.5 L1425.7 1234.4 L1427.5 1217.7 L1428.6 1215.2 L1430.2 1213.5 L1431.3 1202.8 L1433.0 1221.6 L1434.6 1217.1 L1436.3 1212.1 L1437.6 1217.6 L1439.0 1218.9 L1440.1 1218.6 L1441.2 1216.5 L1442.3 1216.5 L1443.8 1203.5 L1444.8 1217.3 L1446.0 1217.0 L1447.7 1222.4 L1448.9 1215.0 L1450.0 1217.7 L1451.3 1214.8 L1453.1 1200.3 L1454.8 1193.7 L1456.0 1211.5 L1457.3 1202.8 L1458.3 1206.7 L1460.0 1207.6 L1461.7 1208.7 L1463.2 1224.8 L1464.7 1229.1 L1466.1 1211.3 L1467.7 1215.4 L1468.8 1217.9 L1470.2 1217.5 L1471.2 1221.2 L1472.7 1229.4 L1473.7 1205.4 L1475.5 1219.3 L1477.0 1207.9 L1478.8 1201.8 L1480.2 1210.7 L1481.5 1194.4 L1482.7 1213.6 L1484.4 1207.7 L1486.1 1226.1 L1487.2 1200.6 L1488.7 1214.8 L1490.5 1210.5 L1491.7 1215.5 L1492.9 1218.4 L1494.6 1203.0 L1496.1 1206.6 L1497.8 1216.8 L1498.8 1212.7 L1500.0 1209.7 L1501.4 1204.2 L1502.6 1210.3 L1503.5 1199.2 L1504.7 1205.7 L1505.8 1204.4 L1507.6 1214.0 L1508.7 1219.4 L1509.9 1227.4 L1511.2 1209.4 L1512.2 1208.1 L1513.7 1204.6 L1515.2 1225.9 L1516.3 1210.4 L1517.7 1207.2 L1519.3 1211.5 L1520.4 1211.0 L1522.0 1219.2 L1523.3 1212.3 L1524.4 1210.7 L1526.0 1209.2 L1527.6 1203.9 L1529.1 1208.2 L1530.7 1211.1 L1532.4 1192.8 L1533.7 1211.1 L1535.4 1204.8 L1537.2 1207.5 L1538.7 1202.4 L1540.0 1213.9 L1541.1 1226.2 L1542.2 1200.5 L1543.9 1205.1 L1545.0 1197.7 L1546.6 1205.5 L1547.9 1210.6 L1549.1 1212.0 L1550.3 1213.4 L1551.6 1237.9 L1553.2 1221.9 L1554.3 1204.7 L1555.6 1210.7 L1556.7 1220.0 L1558.0 1214.9 L1559.4 1216.2 L1560.9 1217.6 L1562.7 1221.9 L1564.3 1211.0 L1566.0 1212.4 L1567.5 1220.5 L1569.2 1213.5 L1570.9 1217.9 L1572.4 1208.2 L1573.7 1207.8 L1575.2 1215.6 L1576.2 1219.1 L1577.8 1194.8 L1578.9 1215.0 L1580.6 1223.2 L1582.2 1222.3 L1583.3 1206.7 L1585.0 1199.0 L1586.3 1193.7 L1587.7 1232.8 L1588.7 1208.0 L1590.4 1222.9 L1591.6 1203.7 L1592.9 1193.4 L1594.3 1227.7 L1595.9 1220.6 L1597.7 1209.9 L1599.0 1216.8 L1600.6 1213.1 L1602.4 1213.5 L1604.1 1208.4 L1605.1 1214.0 L1606.2 1202.1 L1607.9 1209.7 L1609.2 1206.9 L1611.0 1211.8 L1612.1 1212.2 L1613.5 1226.9 L1614.7 1204.6 L1616.3 1196.9 L1617.6 1212.5 L1618.9 1204.2 L1620.0 1211.0 L1621.4 1205.1 L1623.2 1194.7 L1624.5 1201.7 L1625.5 1207.4 L1626.8 1215.0 L1628.0 1213.2 L1629.3 1218.4 L1631.1 1210.3 L1632.8 1214.4 L1634.1 1214.9 L1635.2 1209.8 L1637.0 1218.3 L1638.6 1199.9 L1640.4 1200.7 L1642.0 1211.4 L1643.6 1204.3 L1645.2 1211.4 L1647.0 1198.8 L1648.3 1214.1 L1649.5 1193.8 L1651.1 1197.9 L1652.4 1216.2 L1653.5 1200.2 L1654.8 1201.4 L1656.0 1203.7 L1657.5 1216.2 L1658.7 1195.5 L1659.9 1213.0 L1661.3 1228.7 L1662.8 1231.0 L1664.5 1208.2 L1666.1 1220.1 L1667.3 1205.3 L1668.4 1206.0 L1669.3 1212.9 L1670.7 1207.8 L1672.2 1213.7 L1673.5 1209.6 L1675.2 1213.7 L1676.6 1224.7 L1677.9 1218.1 L1679.0 1207.6 L1680.3 1203.2 L1682.0 1193.5 L1683.7 1220.7 L1685.4 1217.3 L1686.9 1219.3 L1688.5 1213.4 L1689.9 1208.4 L1691.6 1213.5 L1692.6 1210.3 L1694.4 1193.3 L1695.9 1208.3 L1697.2 1204.7 L1698.4 1210.1 L1699.6 1214.2 L1700.6 1211.5 L1702.2 1196.9 L1703.2 1199.5 L1705.0 1205.0 L1705.0 1183.7 L1706.6 1201.2 L1707.7 1208.0 L1709.3 1227.6 L1710.9 1236.1 L1712.0 1205.2 L1713.7 1200.0 L1714.9 1199.4 L1716.2 1227.7 L1717.6 1205.8 L1718.6 1198.3 L1719.7 1209.1 L1720.6 1203.0 L1722.1 1228.9 L1723.5 1210.5 L1724.4 1242.5 L1725.4 1195.4 L1726.5 1219.0 L1727.8 1204.3 L1729.5 1194.9 L1730.7 1215.4 L1731.9 1185.4 L1733.3 1219.6 L1734.3 1188.4 L1735.4 1208.7 L1736.6 1210.0 L1737.9 1189.8 L1739.4 1206.5 L1740.9 1193.2 L1742.4 1201.4 L1744.0 1213.2 L1745.2 1221.0 L1746.8 1208.8 L1748.0 1208.3 L1749.5 1210.6 L1750.8 1216.0 L1752.4 1199.1 L1753.6 1183.5 L1754.9 1198.9 L1756.5 1204.5 L1757.4 1189.5 L1759.1 1211.0 L1760.5 1189.9 L1761.8 1205.8 L1763.0 1204.7 L1764.1 1210.4 L1765.1 1210.0 L1766.4 1194.3 L1767.6 1207.0 L1768.6 1234.1 L1769.8 1215.8 L1771.1 1198.7 L1772.5 1202.8 L1774.0 1222.4 L1775.3 1234.3 L1776.9 1245.1 L1778.0 1206.5 L1779.2 1220.3 L1780.2 1195.8 L1781.2 1192.8 L1782.3 1188.4 L1783.8 1205.7 L1784.9 1212.5 L1786.3 1215.4 L1787.9 1221.2 L1789.5 1212.8 L1790.0 1257.7 L1791.4 1174.3 L1792.7 1257.3 L1794.4 1155.6 L1795.9 1248.1 L1797.9 1164.9 L1800.1 1235.4 L1802.4 1176.1 L1804.5 1228.7 L1806.0 1168.4 L1807.5 1259.4 L1809.3 1163.1 L1811.7 1229.7 L1814.1 1169.6 L1816.0 1277.0 L1817.2 1160.4 L1819.3 1240.7 L1821.2 1130.0 L1823.3 1261.0 L1825.9 1168.1 L1828.4 1229.6 L1829.6 1176.7 L1832.0 1255.1 L1833.7 1181.9 L1835.3 1245.6 L1836.6 1160.4 L1839.0 1245.1 L1840.7 1178.6 L1841.9 1248.7 L1843.8 1191.0 L1846.3 1234.9 L1848.4 1165.6 L1850.4 1255.3 L1851.8 1189.3 L1853.9 1250.7 L1856.5 1171.6 L1857.9 1234.4 L1860.1 1177.9 L1861.7 1256.6 L1863.9 1164.9 L1865.7 1241.2 L1868.3 1180.5 L1870.6 1237.3 L1872.4 1176.3 L1874.5 1245.0 L1876.1 1187.4 L1878.5 1285.8 L1880.8 1170.5 L1882.4 1233.8 L1883.6 1162.9 L1885.7 1245.2 L1887.4 1165.3 L1890.1 1247.3 L1892.1 1159.4 L1893.3 1245.2 L1894.6 1180.1 L1896.7 1239.4 L1899.1 1168.0 L1900.5 1242.2 L1902.0 1177.4 L1904.3 1234.6 L1906.4 1183.3 L1907.8 1243.5 L1909.4 1181.3 L1912.1 1236.6 L1913.6 1175.2 L1916.0 1247.8 L1917.6 1168.5 L1919.1 1241.6 L1921.2 1186.3 L1923.5 1228.9 L1925.6 1170.0 L1926.8 1253.4 L1927.9 1166.4 L1929.4 1233.0 L1931.5 1190.7 L1933.4 1257.7 L1934.7 1158.1 L1937.2 1247.2 L1938.7 1186.9 L1940.5 1260.1 L1942.2 1175.0 L1944.1 1241.4 L1945.8 1136.1 L1948.4 1248.1 L1950.8 1167.3 L1952.0 1259.1 L1953.6 1191.6 L1955.9 1248.6 L1958.2 1135.3 L1959.8 1241.0 L1960.0 1226.6 L1961.4 1133.4 L1962.9 1254.7 L1965.6 1163.5 L1966.8 1239.0 L1968.3 1185.7 L1970.9 1240.5 L1973.3 1176.8 L1974.5 1240.2 L1976.2 1186.5 L1978.5 1247.8 L1980.4 1182.0 L1982.4 1249.1 L1985.0 1170.4 L1986.8 1250.5 L1988.8 1185.0 L1991.0 1254.5 L1992.4 1188.5 L1994.3 1231.5 L1995.8 1161.5 L1997.2 1227.5 L1999.7 1168.7 L2002.1 1245.6 L2004.6 1166.4 L2006.5 1230.0 L2008.9 1176.1 L2011.4 1232.7 L2013.0 1161.0 L2014.2 1226.0 L2016.7 1183.2 L2018.4 1254.3 L2019.9 1180.0 L2021.6 1237.9 L2022.8 1179.0 L2025.3 1251.1 L2027.0 1162.4 L2029.6 1227.6 L2031.9 1159.2 L2033.9 1250.3 L2035.0 1181.7 L2036.3 1262.2 L2038.8 1181.4 L2040.2 1263.9 L2041.4 1203.7 L2043.8 1272.5 L2045.2 1184.9 L2047.6 1281.8 L2049.0 1203.0 L2050.9 1277.2 L2053.0 1216.0 L2054.8 1282.4 L2056.1 1226.8 L2058.6 1300.0 L2061.1 1213.1 L2062.6 1289.1 L2064.5 1234.5 L2066.3 1294.3 L2067.6 1232.9 L2068.8 1308.8 L2070.7 1245.4 L2073.0 1315.6 L2074.6 1250.9 L2080.0 1340.0 L2124.0 1340.0 L2123.0 1330.0 L2125.0 1240.0 L2127.0 1100.0 L2129.5 1060.0 L2137.5 1045.0 L2138.2 1335.0 L2144.7 1335.0 L2145.4 1045.0 L2153.3 1045.0 L2154.0 1335.0 L2156.3 1335.0 L2157.0 1045.0 L2159.2 1045.0 L2159.9 1335.0 L2162.5 1335.0 L2163.2 1045.0 L2165.8 1045.0 L2166.5 1335.0 L2170.0 1335.0 L2170.7 1045.0 L2172.5 1045.0 L2173.2 1335.0 L2175.0 1335.0 L2175.7 1045.0 L2180.3 1045.0 L2181.0 1335.0 L2184.2 1335.0 L2184.9 1045.0 L2187.5 1045.0 L2188.2 1335.0 L2191.3 1335.0 L2192.0 1045.0 L2194.2 1045.0 L2194.9 1335.0 L2196.7 1335.0 L2197.4 1045.0 L2205.3 1045.0 L2206.0 1335.0 L2208.3 1335.0 L2209.0 1045.0 L2210.8 1045.0 L2211.5 1335.0 L2216.7 1335.0 L2217.4 1045.0 L2219.2 1045.0 L2219.9 1335.0 L2224.2 1335.0 L2224.9 1045.0 L2227.5 1045.0 L2228.2 1335.0 L2231.3 1335.0 L2232.0 1045.0 L2237.5 1045.0 L2238.2 1335.0 L2246.3 1335.0 L2247.0 1045.0 L2262.5 1045.0 L2263.2 1335.0 L2265.0 1335.0 L2265.7 1045.0 L2279.7 1045.0 L2280.4 1335.0 L2283.3 1335.0 L2284.0 1045.0 L2292.5 1045.0 L2293.2 1335.0 L2303.3 1335.0 L2304.0 1045.0 L2307.5 1045.0 L2308.2 1335.0 L2312.5 1335.0 L2313.2 1045.0 L2315.8 1045.0 L2316.5 1335.0 L2318.3 1335.0 L2319.0 1045.0 L2328.3 1045.0 L2329.0 1335.0 L2334.0 1335.0 L2334.7 1045.0 L2337.5 1045.0 L2338.2 1335.0 L2341.0 1335.0 L2341.7 1045.0 L2345.0 1045.0 L2345.7 1335.0 L2356.0 1335.0 L2356.7 1045.0 L2360.5 1045.0 L2361.2 1335.0 L2371.7 1335.0 L2372.4 1045.0 L2387.6 1045.0 L2388.3 1335.0 L2391.1 1335.0 L2391.8 1045.0 L2393.1 1045.0 L2393.8 1335.0 L2395.2 1335.0 L2395.9 1045.0 L2397.9 1045.0 L2398.6 1335.0 L2402.3 1335.0 L2403.0 1045.0 L2406.4 1045.0 L2407.1 1335.0 L2408.4 1335.0 L2409.1 1045.0 L2411.1 1045.0 L2411.8 1335.0 L2412.0 1335.0 L2412.6 1045.0 L2413.1 1147.1 L2415.1 1263.7 L2416.7 1147.7 L2418.5 1224.7 L2419.5 1045.0 L2420.1 1335.0 L2421.0 1223.0 L2422.8 1160.4 L2424.9 1335.0 L2425.5 1045.0 L2426.3 1164.4 L2427.5 1335.0 L2428.1 1045.0 L2429.0 1158.4 L2430.6 1245.3 L2432.9 1172.0 L2435.0 1255.0 L2437.1 1163.4 L2438.5 1242.3 L2440.5 1140.3 L2441.9 1335.0 L2442.5 1045.0 L2443.7 1156.1 L2445.2 1335.0 L2445.8 1045.0 L2446.6 1045.0 L2447.2 1335.0 L2448.3 1335.0 L2448.9 1045.0 L2449.7 1155.0 L2451.7 1335.0 L2452.3 1045.0 L2453.2 1156.2 L2454.8 1259.7 L2455.9 1141.2 L2457.5 1335.0 L2458.1 1045.0 L2458.8 1164.9 L2460.9 1261.0 L2462.0 1045.0 L2462.6 1335.0 L2464.2 1225.5 L2466.1 1134.9 L2468.1 1335.0 L2468.7 1045.0 L2469.5 1122.7 L2471.1 1235.8 L2472.1 1143.4 L2473.3 1335.0 L2473.9 1045.0 L2474.8 1128.2 L2476.3 1045.0 L2477.0 1335.0 L2479.1 1335.0 L2479.8 1045.0 L2482.2 1045.0 L2482.9 1335.0 L2485.0 1335.0 L2485.7 1045.0 L2487.6 1045.0 L2488.3 1335.0 L2489.7 1335.0 L2490.4 1045.0 L2492.3 1045.0 L2493.0 1335.0 L2495.2 1335.0 L2495.9 1045.0 L2498.4 1045.0 L2499.1 1335.0 L2505.1 1335.0 L2505.8 1045.0 L2507.3 1045.0 L2508.0 1335.0 L2510.9 1335.0 L2511.6 1045.0 L2513.4 1045.0 L2514.1 1335.0 L2516.7 1335.0 L2517.4 1045.0 L2520.4 1045.0 L2521.1 1335.0 L2524.2 1335.0 L2524.9 1045.0 L2528.4 1045.0 L2529.1 1335.0 L2532.0 1335.0 L2532.7 1045.0 L2535.4 1045.0 L2536.1 1335.0" fill="none" stroke="#ffd700" stroke-width="1.0" stroke-linejoin="miter" stroke-miterlimit="2" shape-rendering="crispEdges"/><path d="M2137.8 1070 L2137.8 1310 M2145.0 1070 L2145.0 1310 M2153.7 1070 L2153.7 1310 M2156.7 1070 L2156.7 1310 M2159.5 1070 L2159.5 1310 M2162.8 1070 L2162.8 1310 M2166.2 1070 L2166.2 1310 M2170.3 1070 L2170.3 1310 M2172.8 1070 L2172.8 1310 M2175.3 1070 L2175.3 1310 M2180.7 1070 L2180.7 1310 M2184.5 1070 L2184.5 1310 M2187.8 1070 L2187.8 1310 M2191.7 1070 L2191.7 1310 M2194.5 1070 L2194.5 1310 M2197.0 1070 L2197.0 1310 M2205.7 1070 L2205.7 1310 M2208.7 1070 L2208.7 1310 M2211.2 1070 L2211.2 1310 M2217.0 1070 L2217.0 1310 M2219.5 1070 L2219.5 1310 M2224.5 1070 L2224.5 1310 M2227.8 1070 L2227.8 1310 M2231.7 1070 L2231.7 1310 M2237.8 1070 L2237.8 1310 M2246.7 1070 L2246.7 1310 M2262.8 1070 L2262.8 1310 M2265.3 1070 L2265.3 1310 M2280.0 1070 L2280.0 1310 M2283.7 1070 L2283.7 1310 M2292.8 1070 L2292.8 1310 M2303.7 1070 L2303.7 1310 M2307.8 1070 L2307.8 1310 M2312.8 1070 L2312.8 1310 M2316.2 1070 L2316.2 1310 M2318.7 1070 L2318.7 1310 M2328.7 1070 L2328.7 1310 M2334.3 1070 L2334.3 1310 M2337.8 1070 L2337.8 1310 M2341.3 1070 L2341.3 1310 M2345.3 1070 L2345.3 1310 M2356.3 1070 L2356.3 1310 M2360.8 1070 L2360.8 1310 M2372.0 1070 L2372.0 1310 M2387.9 1070 L2387.9 1310 M2391.5 1070 L2391.5 1310 M2393.5 1070 L2393.5 1310 M2395.5 1070 L2395.5 1310 M2398.2 1070 L2398.2 1310 M2402.7 1070 L2402.7 1310 M2406.7 1070 L2406.7 1310 M2408.7 1070 L2408.7 1310 M2411.4 1070 L2411.4 1310 M2476.7 1070 L2476.7 1310 M2479.5 1070 L2479.5 1310 M2482.5 1070 L2482.5 1310 M2485.4 1070 L2485.4 1310 M2488.0 1070 L2488.0 1310 M2490.1 1070 L2490.1 1310 M2492.7 1070 L2492.7 1310 M2495.5 1070 L2495.5 1310 M2498.8 1070 L2498.8 1310 M2505.4 1070 L2505.4 1310 M2507.7 1070 L2507.7 1310 M2511.3 1070 L2511.3 1310 M2513.7 1070 L2513.7 1310 M2517.0 1070 L2517.0 1310 M2520.7 1070 L2520.7 1310 M2524.5 1070 L2524.5 1310 M2528.7 1070 L2528.7 1310 M2532.4 1070 L2532.4 1310 M2535.8 1070 L2535.8 1310" fill="none" stroke="#ffd700" stroke-width="1.4"/>
<path d="M1366.0 1188.0 L1600.8 1188.0 L1600.8 1187.6 L1835.6 1187.6 L1835.6 1187.2 L2070.4 1187.2 L2070.4 1186.9 L2305.2 1186.9 L2305.2 1186.5 L2540.0 1186.5" fill="none" stroke="#008080" stroke-width="1.2" stroke-linejoin="miter" stroke-miterlimit="2" shape-rendering="crispEdges"/>
<path d="M1366.0 1192.5 L1512.8 1192.5 L1512.8 1191.9 L1659.5 1191.9 L1659.5 1191.4 L1806.2 1191.4 L1806.2 1190.8 L1953.0 1190.8 L1953.0 1190.2 L2099.8 1190.2 L2099.8 1189.6 L2246.5 1189.6 L2246.5 1189.1 L2393.2 1189.1 L2393.2 1188.5 L2540.0 1188.5" fill="none" stroke="#0000ff" stroke-width="1.2" stroke-linejoin="miter" stroke-miterlimit="2" shape-rendering="crispEdges"/>
</g>
<rect x="1793.6" y="1075" width="109.20000000000005" height="50" fill="rgba(0,0,0,0.45)"/>
<line x1="1392.5" y1="1075" x2="1392.5" y2="1305" stroke="rgba(150,150,150,0.2)" stroke-width="1"/>
<line x1="1438.5" y1="1075" x2="1438.5" y2="1305" stroke="rgba(150,150,150,0.095)" stroke-width="1"/>
<line x1="1485.5" y1="1075" x2="1485.5" y2="1305" stroke="rgba(150,150,150,0.095)" stroke-width="1"/>
<line x1="1532.5" y1="1075" x2="1532.5" y2="1305" stroke="rgba(150,150,150,0.095)" stroke-width="1"/>
<line x1="1578.5" y1="1075" x2="1578.5" y2="1305" stroke="rgba(150,150,150,0.095)" stroke-width="1"/>
<line x1="1625.5" y1="1075" x2="1625.5" y2="1305" stroke="rgba(150,150,150,0.2)" stroke-width="1"/>
<line x1="1672.5" y1="1075" x2="1672.5" y2="1305" stroke="rgba(150,150,150,0.095)" stroke-width="1"/>
<line x1="1718.5" y1="1075" x2="1718.5" y2="1305" stroke="rgba(150,150,150,0.095)" stroke-width="1"/>
<line x1="1765.5" y1="1075" x2="1765.5" y2="1305" stroke="rgba(150,150,150,0.095)" stroke-width="1"/>
<line x1="1812.5" y1="1075" x2="1812.5" y2="1305" stroke="rgba(150,150,150,0.095)" stroke-width="1"/>
<line x1="1859.5" y1="1075" x2="1859.5" y2="1305" stroke="rgba(150,150,150,0.2)" stroke-width="1"/>
<line x1="1905.5" y1="1075" x2="1905.5" y2="1305" stroke="rgba(150,150,150,0.095)" stroke-width="1"/>
<line x1="1952.5" y1="1075" x2="1952.5" y2="1305" stroke="rgba(150,150,150,0.095)" stroke-width="1"/>
<line x1="1999.5" y1="1075" x2="1999.5" y2="1305" stroke="rgba(150,150,150,0.095)" stroke-width="1"/>
<line x1="2045.5" y1="1075" x2="2045.5" y2="1305" stroke="rgba(150,150,150,0.095)" stroke-width="1"/>
<line x1="2092.5" y1="1075" x2="2092.5" y2="1305" stroke="rgba(150,150,150,0.2)" stroke-width="1"/>
<line x1="2139.5" y1="1075" x2="2139.5" y2="1305" stroke="rgba(150,150,150,0.095)" stroke-width="1"/>
<line x1="2185.5" y1="1075" x2="2185.5" y2="1305" stroke="rgba(150,150,150,0.095)" stroke-width="1"/>
<line x1="2232.5" y1="1075" x2="2232.5" y2="1305" stroke="rgba(150,150,150,0.095)" stroke-width="1"/>
<line x1="2279.5" y1="1075" x2="2279.5" y2="1305" stroke="rgba(150,150,150,0.095)" stroke-width="1"/>
<line x1="2325.5" y1="1075" x2="2325.5" y2="1305" stroke="rgba(150,150,150,0.2)" stroke-width="1"/>
<line x1="2372.5" y1="1075" x2="2372.5" y2="1305" stroke="rgba(150,150,150,0.095)" stroke-width="1"/>
<line x1="2419.5" y1="1075" x2="2419.5" y2="1305" stroke="rgba(150,150,150,0.095)" stroke-width="1"/>
<line x1="2465.5" y1="1075" x2="2465.5" y2="1305" stroke="rgba(150,150,150,0.095)" stroke-width="1"/>
<line x1="2512.5" y1="1075" x2="2512.5" y2="1305" stroke="rgba(150,150,150,0.095)" stroke-width="1"/>
<line x1="1366" y1="1075.5" x2="2540" y2="1075.5" stroke="rgba(150,150,150,0.2)" stroke-width="1"/>
<line x1="1366" y1="1190.5" x2="2540" y2="1190.5" stroke="rgba(150,150,150,0.2)" stroke-width="1"/>
<line x1="1366" y1="1098.5" x2="2540" y2="1098.5" stroke="rgba(150,150,150,0.075)" stroke-width="1"/>
<line x1="1366" y1="1121.5" x2="2540" y2="1121.5" stroke="rgba(150,150,150,0.075)" stroke-width="1"/>
<line x1="1366" y1="1144.5" x2="2540" y2="1144.5" stroke="rgba(150,150,150,0.075)" stroke-width="1"/>
<line x1="1366" y1="1167.5" x2="2540" y2="1167.5" stroke="rgba(150,150,150,0.075)" stroke-width="1"/>
<line x1="1366" y1="1213.5" x2="2540" y2="1213.5" stroke="rgba(150,150,150,0.075)" stroke-width="1"/>
<line x1="1366" y1="1236.5" x2="2540" y2="1236.5" stroke="rgba(150,150,150,0.075)" stroke-width="1"/>
<line x1="1366" y1="1259.5" x2="2540" y2="1259.5" stroke="rgba(150,150,150,0.075)" stroke-width="1"/>
<line x1="1366" y1="1282.5" x2="2540" y2="1282.5" stroke="rgba(150,150,150,0.075)" stroke-width="1"/>
<line x1="1364.5" y1="1075" x2="1364.5" y2="1306" stroke="#969696" stroke-width="1"/>
<line x1="1364" y1="1305.5" x2="2540" y2="1305.5" stroke="#969696" stroke-width="1"/>
<clipPath id="clxR5"><rect x="1365" y="1305" width="1216" height="30"/></clipPath>
<g clip-path="url(#clxR5)">
<text x="1392.47" y="1322.00" font-size="12.8" fill="#ffffff" text-anchor="middle" textLength="43.70" lengthAdjust="spacingAndGlyphs">-750ms</text>
<text x="1625.85" y="1322.00" font-size="12.8" fill="#ffffff" text-anchor="middle" textLength="43.70" lengthAdjust="spacingAndGlyphs">-500ms</text>
<text x="1859.22" y="1322.00" font-size="12.8" fill="#ffffff" text-anchor="middle" textLength="43.70" lengthAdjust="spacingAndGlyphs">-250ms</text>
<text x="2092.60" y="1322.00" font-size="12.8" fill="#ffffff" text-anchor="middle" textLength="7.50" lengthAdjust="spacingAndGlyphs">0</text>
<text x="2325.97" y="1322.00" font-size="12.8" fill="#ffffff" text-anchor="middle" textLength="39.50" lengthAdjust="spacingAndGlyphs">250ms</text>
</g>
<clipPath id="clyR5"><rect x="1284" y="1074" width="80" height="232"/></clipPath>
<g clip-path="url(#clyR5)">
<text x="1360.00" y="1079.40" font-size="12.8" fill="#ffffff" text-anchor="end" textLength="7.40" lengthAdjust="spacingAndGlyphs">1</text>
<text x="1360.00" y="1194.40" font-size="12.8" fill="#ffffff" text-anchor="end" textLength="7.40" lengthAdjust="spacingAndGlyphs">0</text>
<text x="1360.00" y="1309.40" font-size="12.8" fill="#ffffff" text-anchor="end" textLength="11.84" lengthAdjust="spacingAndGlyphs">-1</text>
</g>
<text x="0" y="0" font-size="12.8" fill="#ffffff" text-anchor="middle" textLength="40" lengthAdjust="spacingAndGlyphs" transform="translate(1340.5,1190.0) rotate(-90)">counts</text>
<line x1="1794.6" y1="1076" x2="1794.6" y2="1124" stroke="#5e5e5e" stroke-width="2" stroke-dasharray="9.5 2.5"/>
<line x1="1794.6" y1="1125" x2="1794.6" y2="1305" stroke="#ffffff" stroke-width="2" stroke-dasharray="9.5 2.5"/>
<line x1="1897.8" y1="1076" x2="1897.8" y2="1124" stroke="#5e5e5e" stroke-width="2" stroke-dasharray="9.5 2.5"/>
<line x1="1897.8" y1="1125" x2="1897.8" y2="1305" stroke="#ffffff" stroke-width="2" stroke-dasharray="9.5 2.5"/>
<text x="1793.40" y="1105.50" font-size="12.8" fill="#ffffff" textLength="22.00" lengthAdjust="spacingAndGlyphs">ΔT=</text>
<text x="1819.30" y="1094.80" font-size="12.8" fill="#ffffff" textLength="79.60" lengthAdjust="spacingAndGlyphs">110ms,299μs</text>
<text x="1819.30" y="1115.00" font-size="12.8" fill="#ffffff" textLength="58.80" lengthAdjust="spacingAndGlyphs">9.0663 Hz</text>
<text x="1798.90" y="1298.00" font-size="12.8" fill="#ffffff" textLength="98.40" lengthAdjust="spacingAndGlyphs">T2=-319ms,13μs</text>
<text x="1902.40" y="1298.00" font-size="12.8" fill="#ffffff" textLength="105.80" lengthAdjust="spacingAndGlyphs">T1=-208ms,715μs</text>
</svg>
</body></html>
